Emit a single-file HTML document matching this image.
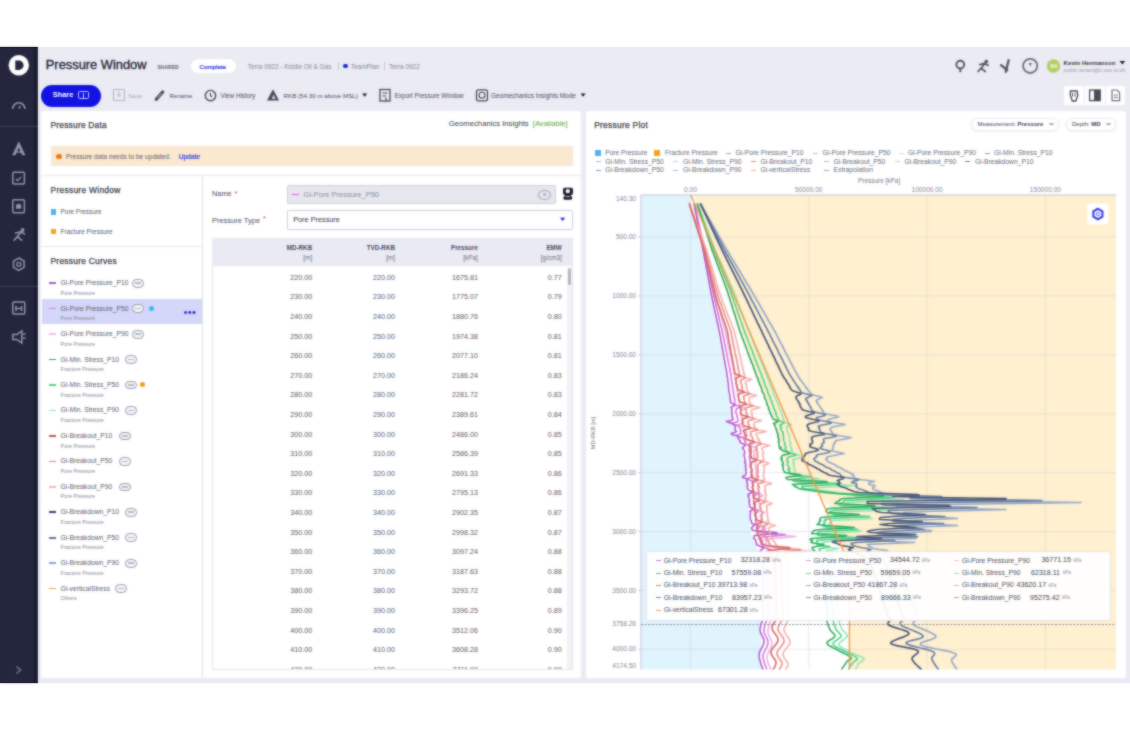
<!DOCTYPE html>
<html><head><meta charset="utf-8">
<style>
*{box-sizing:border-box;margin:0;padding:0}
html,body{width:1130px;height:730px;background:#fff;overflow:hidden;font-family:"Liberation Sans",sans-serif;color:#2a2d3e}
.a{position:absolute;white-space:nowrap}
svg{position:absolute;overflow:visible}
#root{position:absolute;left:0;top:0;width:1130px;height:730px;overflow:hidden}
</style></head><body><div id="root">

<div class="a" style="left:0.0px;top:47.0px;width:1130.0px;height:636.0px;background:#ebebf3;"></div>
<div class="a" style="left:0.0px;top:47.0px;width:37.5px;height:636.0px;background:#24263d;"></div>
<div class="a" style="left:34.2px;top:47.0px;width:3.3px;height:636.0px;background:#1b1c31;"></div>
<div class="a" style="left:37.5px;top:47.0px;width:1.5px;height:636.0px;background:#f7f7fb;"></div>
<div class="a" style="left:0.0px;top:126.3px;width:37.5px;height:1.0px;background:#3b3f57;"></div>
<div class="a" style="left:0.0px;top:286.0px;width:37.5px;height:1.0px;background:#3b3f57;"></div>
<svg style="left:0;top:0" width="40" height="700" viewBox="0 0 40 700">
<circle cx="18.8" cy="65.3" r="10.2" fill="#fff"/>
<path d="M15.3 60.6 h3.6 a4.7 4.7 0 0 1 0 9.4 h-3.6 z" fill="#24263d"/>
<path d="M12.6 109 a6.2 6.2 0 0 1 12.4 0" fill="none" stroke="#9296ad" stroke-width="1.6"/>
<path d="M18.8 108.6 l1.6 -2.4" stroke="#9296ad" stroke-width="1.4"/>
<path d="M18.8 141.3 l6.6 13.9 h-3.2 l-3.4 -7.6 l-3.4 7.6 h-3.2 z" fill="#9296ad"/><path d="M16.6 152 h4.4" stroke="#9296ad" stroke-width="1.3"/>
<rect x="12.8" y="172.3" width="11.6" height="11.6" rx="1.2" fill="none" stroke="#9296ad" stroke-width="1.5"/>
<path d="M15.8 178.8 l1.8 1.8 l3.6 -3.6" fill="none" stroke="#9296ad" stroke-width="1.3"/>
<rect x="12.8" y="199.8" width="11.6" height="13" rx="1.2" fill="none" stroke="#9296ad" stroke-width="1.5"/>
<path d="M16 206.3 a2.6 2.6 0 0 1 5.2 0 v2.5 h-5.2z" fill="#9296ad"/>
<circle cx="22.6" cy="230" r="1.9" fill="#9296ad"/><path d="M21 232 l-3.6 4.6 l-3.8 4.2 M17.4 236.6 l4.8 4 M15 233.2 l5.8 -1.4 l4.2 2.6" fill="none" stroke="#9296ad" stroke-width="1.6" stroke-linejoin="round"/>
<path d="M18.8 258 l5.3 3.1 v6.2 l-5.3 3.1 l-5.3 -3.1 v-6.2 z" fill="none" stroke="#9296ad" stroke-width="1.5"/>
<circle cx="18.8" cy="264.3" r="2" fill="none" stroke="#9296ad" stroke-width="1.3"/>
<rect x="12.8" y="302" width="12" height="12" rx="1.2" fill="none" stroke="#9296ad" stroke-width="1.5"/>
<path d="M16 306 v5 M21.6 306 v5 M16 308.5 h5.6" stroke="#9296ad" stroke-width="1.5"/>
<path d="M12.8 334.5 h4 l5 -3.5 v12 l-5 -3.5 h-4 z" fill="none" stroke="#9296ad" stroke-width="1.5"/>
<path d="M23 334 h2.5 M23 338 h2.5" stroke="#9296ad" stroke-width="1.3"/>
<path d="M16.5 666.5 l4 3.5 l-4 3.5" fill="none" stroke="#6f7390" stroke-width="1.6"/>
</svg>
<div class="a" style="left:45.8px;top:57.2px;font-size:12.85px;line-height:15.42px;color:#23263a;font-weight:normal;-webkit-text-stroke:0.35px #23263a">Pressure Window</div>
<div class="a" style="left:157.4px;top:64.5px;font-size:4.9px;line-height:5.88px;color:#55586a;font-weight:bold;letter-spacing:0.1px">SHARED</div>
<div class="a" style="left:190.6px;top:59.4px;width:45.4px;height:13.6px;background:#fff;border-radius:7px"></div>
<div class="a" style="left:199.5px;top:62.8px;font-size:6.2px;line-height:7.44px;color:#2430d8;font-weight:normal;-webkit-text-stroke:0.2px #2430d8">Complete</div>
<div class="a" style="left:247.7px;top:62.6px;font-size:6.45px;line-height:7.74px;color:#858896;font-weight:normal;">Terra 0922 - Kiddie Oil &amp; Gas</div>
<div class="a" style="left:338.3px;top:62.0px;width:0.6px;height:8.0px;background:#c4c6d2;"></div>
<div class="a" style="left:343.4px;top:63.6px;width:4.6px;height:4.6px;border-radius:50%;background:#1428d8"></div>
<div class="a" style="left:350.8px;top:62.6px;font-size:6.45px;line-height:7.74px;color:#858896;font-weight:normal;">TeamPlan</div>
<div class="a" style="left:384.0px;top:62.0px;width:0.6px;height:8.0px;background:#c4c6d2;"></div>
<div class="a" style="left:389.0px;top:62.6px;font-size:6.45px;line-height:7.74px;color:#858896;font-weight:normal;">Terra 0922</div>
<svg style="left:0;top:0" width="1130" height="120" viewBox="0 0 1130 120">
<circle cx="960.3" cy="64.6" r="3.9" fill="none" stroke="#545769" stroke-width="1.9"/>
<path d="M960.3 68.4 v3.8" stroke="#545769" stroke-width="2"/>
<circle cx="986.3" cy="61.6" r="1.9" fill="#545769"/>
<path d="M984.8 63.4 l-3.6 4.8 l-3.6 3.8 M981.2 68.2 l4.6 3.8 M979 64.8 l5.6 -1.4 l4.2 2.4" fill="none" stroke="#545769" stroke-width="1.7" stroke-linejoin="round"/>
<path d="M1001 65.2 l6.2 4.8 M1008.6 60.2 l-2.8 11.6" stroke="#545769" stroke-width="2.3" stroke-linecap="round"/>
<circle cx="1030.2" cy="65.9" r="7.1" fill="none" stroke="#6a6d80" stroke-width="1.8"/>
<path d="M1029 63 h2.6 l-1.3 3.4z" fill="#545769"/>
<circle cx="1053.5" cy="66" r="6.7" fill="#b3d062"/>
<path d="M1122.4 64.5 l-2.8 -3.6 h5.6z" fill="#1c1e2b"/>
</svg>
<div class="a" style="left:1050.2px;top:63.5px;font-size:4.5px;line-height:5.40px;color:#fff;font-weight:bold;width:7px;text-align:center">KH</div>
<div class="a" style="left:1063.6px;top:58.6px;font-size:6.1px;line-height:7.32px;color:#3a3440;font-weight:bold;">Kevin Hermanson</div>
<div class="a" style="left:1063.6px;top:67.2px;font-size:5.3px;line-height:6.36px;color:#9a9db0;font-weight:normal;">public-tenant@c-cee.io.ob</div>
<div class="a" style="left:40.6px;top:84.8px;width:60.5px;height:21.8px;background:#1212e2;border-radius:11px"></div>
<div class="a" style="left:52.8px;top:91.4px;font-size:7.4px;line-height:8.88px;color:#fff;font-weight:bold;">Share</div>
<div class="a" style="left:77.5px;top:91px;width:11.5px;height:8px;border:1.2px solid #c8ccff;border-radius:1.5px"></div>
<div class="a" style="left:82.6px;top:92.5px;width:1.2px;height:5px;background:#c8ccff"></div>
<svg style="left:0;top:0" width="1130" height="120" viewBox="0 0 1130 120">
<rect x="113.5" y="89.5" width="11" height="11" rx="1" fill="none" stroke="#b3b5c3" stroke-width="1.1"/>
<path d="M119 91.5 v5 l-2 -2 M119 96.5 l2 -2" fill="none" stroke="#b3b5c3" stroke-width="1"/>
<path d="M156.3 99.2 l6.4 -7.2" stroke="#474a5c" stroke-width="3.2" stroke-linecap="round"/><path d="M157.8 97.6 l3.6 -4" stroke="#ebebf3" stroke-width="0.7"/>
<circle cx="210.5" cy="95.6" r="5.2" fill="none" stroke="#474a5c" stroke-width="1.4"/>
<path d="M210.5 93 v2.8 l1.5 1.2" fill="none" stroke="#474a5c" stroke-width="1.2"/>
<path d="M273 89.2 l6 11.2 h-12 z" fill="#474a5c"/>
<path d="M273.4 94.8 l2.2 4 h-3.6 z" fill="#ebebf3"/>
<path d="M362.2 93.6 h5 l-2.5 3.2z" fill="#1c1e2b"/>
<rect x="380" y="89.5" width="10" height="11.5" fill="none" stroke="#474a5c" stroke-width="1.3"/>
<path d="M382.5 93 h5 M382.5 96 h3.5 M386 97.5 v4" stroke="#474a5c" stroke-width="1.2"/>
<rect x="476.5" y="89.8" width="11" height="11" rx="2" fill="none" stroke="#474a5c" stroke-width="1.3"/>
<circle cx="482" cy="95.3" r="3" fill="none" stroke="#474a5c" stroke-width="1.1"/>
<path d="M580.6 93.6 h5 l-2.5 3.2z" fill="#1c1e2b"/>
</svg>
<div class="a" style="left:128.2px;top:92.1px;font-size:6.2px;line-height:7.44px;color:#a7a9b7;font-weight:normal;">Save</div>
<div class="a" style="left:169.4px;top:92.1px;font-size:6.1px;line-height:7.32px;color:#474a5c;font-weight:normal;">Rename</div>
<div class="a" style="left:220.6px;top:92.0px;font-size:6.3px;line-height:7.56px;color:#474a5c;font-weight:normal;">View History</div>
<div class="a" style="left:283.5px;top:92.1px;font-size:6.23px;line-height:7.48px;color:#474a5c;font-weight:normal;">RKB (54.30 m above MSL)</div>
<div class="a" style="left:394.7px;top:92.0px;font-size:6.27px;line-height:7.52px;color:#474a5c;font-weight:normal;">Export Pressure Window</div>
<div class="a" style="left:491.0px;top:91.9px;font-size:6.45px;line-height:7.74px;color:#474a5c;font-weight:normal;">Geomechanics Insights Mode</div>
<div class="a" style="left:1064.4px;top:86.2px;width:60.6px;height:18.6px;background:#fff;border-radius:2px"></div>
<div class="a" style="left:1084.4px;top:86.2px;width:0.8px;height:18.6px;background:#ebebf3;"></div>
<div class="a" style="left:1105.2px;top:86.2px;width:0.8px;height:18.6px;background:#ebebf3;"></div>
<svg style="left:0;top:0" width="1130" height="120" viewBox="0 0 1130 120">
<path d="M1070.5 91 h6.5 l0.8 4 l-2 6 h-3.5 l-2 -6 z" fill="none" stroke="#474a5c" stroke-width="1.3"/>
<path d="M1072.5 93 v3.5 M1075 93 v3.5" stroke="#474a5c" stroke-width="0.9"/>
<rect x="1089.6" y="90" width="10.6" height="10.6" fill="none" stroke="#474a5c" stroke-width="1.3"/>
<rect x="1094" y="90" width="6.2" height="10.6" fill="#474a5c"/>
<path d="M1112 90 h5 l2.6 2.6 v8 h-7.6 z" fill="none" stroke="#6b6e80" stroke-width="1.2"/>
<path d="M1113.8 95 h4 M1113.8 97.4 h4" stroke="#6b6e80" stroke-width="0.9"/>
</svg>
<div class="a" style="left:41.0px;top:111.0px;width:539.6px;height:567.0px;background:#fff;border-radius:2px"></div>
<div class="a" style="left:50.5px;top:119.5px;font-size:8.4px;line-height:10.08px;color:#3a3c4c;font-weight:normal;-webkit-text-stroke:0.25px #3a3c4c;letter-spacing:0.22px">Pressure Data</div>
<div class="a" style="left:448.8px;top:119.3px;font-size:7.7px;line-height:9.24px;color:#35384a;font-weight:normal;">Geomechanics Insights</div>
<div class="a" style="left:532.8px;top:119.3px;font-size:7.6px;line-height:9.12px;color:#55a83a;font-weight:normal;">[Available]</div>
<div class="a" style="left:50.7px;top:146.2px;width:522.2px;height:20.1px;background:#fbe8d0;border-radius:1.5px"></div>
<div class="a" style="left:56.3px;top:153.8px;width:5.6px;height:5.6px;border-radius:50%;background:#e97a12"></div>
<div class="a" style="left:65.9px;top:152.6px;font-size:6.6px;line-height:7.92px;color:#5a5c68;font-weight:normal;">Pressure data needs to be updated.</div>
<div class="a" style="left:178.7px;top:152.6px;font-size:6.6px;line-height:7.92px;color:#2330d8;font-weight:normal;-webkit-text-stroke:0.15px #2330d8">Update</div>
<div class="a" style="left:41.0px;top:174.8px;width:539.6px;height:1.0px;background:#ebebf3;"></div>
<div class="a" style="left:202.4px;top:175.8px;width:1.0px;height:502.2px;background:#e4e5ee;"></div>
<div class="a" style="left:50.5px;top:184.8px;font-size:8.4px;line-height:10.08px;color:#3a3c4c;font-weight:normal;-webkit-text-stroke:0.25px #3a3c4c;letter-spacing:0.30px">Pressure Window</div>
<div class="a" style="left:50.6px;top:209.3px;width:5.6px;height:5.6px;background:#4bb3f0;"></div>
<div class="a" style="left:60.6px;top:208.3px;font-size:6.4px;line-height:7.68px;color:#55586a;font-weight:normal;">Pore Pressure</div>
<div class="a" style="left:50.6px;top:228.6px;width:5.6px;height:5.6px;background:#f5a31a;"></div>
<div class="a" style="left:60.6px;top:227.5px;font-size:6.5px;line-height:7.80px;color:#55586a;font-weight:normal;">Fracture Pressure</div>
<div class="a" style="left:41.0px;top:246.2px;width:161.4px;height:1.0px;background:#ebebf3;"></div>
<div class="a" style="left:50.5px;top:255.6px;font-size:8.4px;line-height:10.08px;color:#3a3c4c;font-weight:normal;-webkit-text-stroke:0.25px #3a3c4c;letter-spacing:0.27px">Pressure Curves</div>
<div class="a" style="left:49.3px;top:282.4px;width:6.7px;height:1.7px;background:#a55cc4;"></div>
<div class="a" style="left:60.6px;top:279.1px;font-size:6.75px;line-height:8.10px;color:#5a5d6a;font-weight:normal;">Gi-Pore Pressure_P10</div>
<div class="a" style="left:60.6px;top:289.8px;font-size:5.4px;line-height:6.48px;color:#858897;font-weight:normal;">Pore Pressure</div>
<div class="a" style="left:132.0px;top:278.9px;width:12px;height:8.8px;border-radius:4.4px;border:0.9px solid #9a9dad;background:#f3f3f7"></div>
<div class="a" style="left:135.0px;top:282.4px;width:6px;height:1.6px;background:#b9bbc8"></div>
<div class="a" style="left:41.5px;top:299.3px;width:160.9px;height:24.6px;background:#d4d7f9;"></div>
<div class="a" style="left:184px;top:311.2px;width:11.5px;height:3px;background:radial-gradient(circle at 1.5px 1.5px,#2b2fd8 1.4px,transparent 1.5px) 0 0/4.2px 3px repeat-x"></div>
<div class="a" style="left:49.3px;top:307.8px;width:6.7px;height:1.7px;background:#dd86dc;"></div>
<div class="a" style="left:60.6px;top:304.6px;font-size:6.75px;line-height:8.10px;color:#5a5d6a;font-weight:normal;">Gi-Pore Pressure_P50</div>
<div class="a" style="left:60.6px;top:315.2px;font-size:5.4px;line-height:6.48px;color:#858897;font-weight:normal;">Pore Pressure</div>
<div class="a" style="left:132.0px;top:304.3px;width:12px;height:8.8px;border-radius:4.4px;border:0.9px solid #9a9dad;background:#f3f3f7"></div>
<div class="a" style="left:135.0px;top:307.8px;width:6px;height:1.6px;background:#b9bbc8"></div>
<div class="a" style="left:148.6px;top:306.0px;width:5px;height:5px;border-radius:50%;background:#3db7f2"></div>
<div class="a" style="left:49.3px;top:333.3px;width:6.7px;height:1.7px;background:#f2bdeb;"></div>
<div class="a" style="left:60.6px;top:330.0px;font-size:6.75px;line-height:8.10px;color:#5a5d6a;font-weight:normal;">Gi-Pore Pressure_P90</div>
<div class="a" style="left:60.6px;top:340.7px;font-size:5.4px;line-height:6.48px;color:#858897;font-weight:normal;">Pore Pressure</div>
<div class="a" style="left:132.0px;top:329.8px;width:12px;height:8.8px;border-radius:4.4px;border:0.9px solid #9a9dad;background:#f3f3f7"></div>
<div class="a" style="left:135.0px;top:333.3px;width:6px;height:1.6px;background:#b9bbc8"></div>
<div class="a" style="left:49.3px;top:358.7px;width:6.7px;height:1.7px;background:#2da65c;"></div>
<div class="a" style="left:60.6px;top:355.5px;font-size:6.75px;line-height:8.10px;color:#5a5d6a;font-weight:normal;">Gi-Min. Stress_P10</div>
<div class="a" style="left:60.6px;top:366.1px;font-size:5.4px;line-height:6.48px;color:#858897;font-weight:normal;">Fracture Pressure</div>
<div class="a" style="left:124.5px;top:355.2px;width:12px;height:8.8px;border-radius:4.4px;border:0.9px solid #9a9dad;background:#f3f3f7"></div>
<div class="a" style="left:127.5px;top:358.7px;width:6px;height:1.6px;background:#b9bbc8"></div>
<div class="a" style="left:49.3px;top:384.2px;width:6.7px;height:1.7px;background:#4ed482;"></div>
<div class="a" style="left:60.6px;top:380.9px;font-size:6.75px;line-height:8.10px;color:#5a5d6a;font-weight:normal;">Gi-Min. Stress_P50</div>
<div class="a" style="left:60.6px;top:391.6px;font-size:5.4px;line-height:6.48px;color:#858897;font-weight:normal;">Fracture Pressure</div>
<div class="a" style="left:124.5px;top:380.7px;width:12px;height:8.8px;border-radius:4.4px;border:0.9px solid #9a9dad;background:#f3f3f7"></div>
<div class="a" style="left:127.5px;top:384.2px;width:6px;height:1.6px;background:#b9bbc8"></div>
<div class="a" style="left:140.1px;top:382.4px;width:5px;height:5px;border-radius:50%;background:#f39a12"></div>
<div class="a" style="left:49.3px;top:409.6px;width:6.7px;height:1.7px;background:#8fe6b0;"></div>
<div class="a" style="left:60.6px;top:406.4px;font-size:6.75px;line-height:8.10px;color:#5a5d6a;font-weight:normal;">Gi-Min. Stress_P90</div>
<div class="a" style="left:60.6px;top:417.0px;font-size:5.4px;line-height:6.48px;color:#858897;font-weight:normal;">Fracture Pressure</div>
<div class="a" style="left:124.5px;top:406.1px;width:12px;height:8.8px;border-radius:4.4px;border:0.9px solid #9a9dad;background:#f3f3f7"></div>
<div class="a" style="left:127.5px;top:409.6px;width:6px;height:1.6px;background:#b9bbc8"></div>
<div class="a" style="left:49.3px;top:435.1px;width:6.7px;height:1.7px;background:#c4504e;"></div>
<div class="a" style="left:60.6px;top:431.8px;font-size:6.75px;line-height:8.10px;color:#5a5d6a;font-weight:normal;">Gi-Breakout_P10</div>
<div class="a" style="left:60.6px;top:442.5px;font-size:5.4px;line-height:6.48px;color:#858897;font-weight:normal;">Pore Pressure</div>
<div class="a" style="left:119.0px;top:431.6px;width:12px;height:8.8px;border-radius:4.4px;border:0.9px solid #9a9dad;background:#f3f3f7"></div>
<div class="a" style="left:122.0px;top:435.1px;width:6px;height:1.6px;background:#b9bbc8"></div>
<div class="a" style="left:49.3px;top:460.6px;width:6.7px;height:1.7px;background:#e77d7a;"></div>
<div class="a" style="left:60.6px;top:457.3px;font-size:6.75px;line-height:8.10px;color:#5a5d6a;font-weight:normal;">Gi-Breakout_P50</div>
<div class="a" style="left:60.6px;top:467.9px;font-size:5.4px;line-height:6.48px;color:#858897;font-weight:normal;">Pore Pressure</div>
<div class="a" style="left:119.0px;top:457.1px;width:12px;height:8.8px;border-radius:4.4px;border:0.9px solid #9a9dad;background:#f3f3f7"></div>
<div class="a" style="left:122.0px;top:460.6px;width:6px;height:1.6px;background:#b9bbc8"></div>
<div class="a" style="left:49.3px;top:486.0px;width:6.7px;height:1.7px;background:#f4b8b4;"></div>
<div class="a" style="left:60.6px;top:482.7px;font-size:6.75px;line-height:8.10px;color:#5a5d6a;font-weight:normal;">Gi-Breakout_P90</div>
<div class="a" style="left:60.6px;top:493.4px;font-size:5.4px;line-height:6.48px;color:#858897;font-weight:normal;">Pore Pressure</div>
<div class="a" style="left:119.0px;top:482.5px;width:12px;height:8.8px;border-radius:4.4px;border:0.9px solid #9a9dad;background:#f3f3f7"></div>
<div class="a" style="left:122.0px;top:486.0px;width:6px;height:1.6px;background:#b9bbc8"></div>
<div class="a" style="left:49.3px;top:511.4px;width:6.7px;height:1.7px;background:#2e416e;"></div>
<div class="a" style="left:60.6px;top:508.2px;font-size:6.75px;line-height:8.10px;color:#5a5d6a;font-weight:normal;">Gi-Breakdown_P10</div>
<div class="a" style="left:60.6px;top:518.8px;font-size:5.4px;line-height:6.48px;color:#858897;font-weight:normal;">Fracture Pressure</div>
<div class="a" style="left:124.5px;top:507.9px;width:12px;height:8.8px;border-radius:4.4px;border:0.9px solid #9a9dad;background:#f3f3f7"></div>
<div class="a" style="left:127.5px;top:511.4px;width:6px;height:1.6px;background:#b9bbc8"></div>
<div class="a" style="left:49.3px;top:536.9px;width:6.7px;height:1.7px;background:#5576a8;"></div>
<div class="a" style="left:60.6px;top:533.7px;font-size:6.75px;line-height:8.10px;color:#5a5d6a;font-weight:normal;">Gi-Breakdown_P50</div>
<div class="a" style="left:60.6px;top:544.3px;font-size:5.4px;line-height:6.48px;color:#858897;font-weight:normal;">Fracture Pressure</div>
<div class="a" style="left:124.5px;top:533.4px;width:12px;height:8.8px;border-radius:4.4px;border:0.9px solid #9a9dad;background:#f3f3f7"></div>
<div class="a" style="left:127.5px;top:536.9px;width:6px;height:1.6px;background:#b9bbc8"></div>
<div class="a" style="left:49.3px;top:562.4px;width:6.7px;height:1.7px;background:#87a2cc;"></div>
<div class="a" style="left:60.6px;top:559.1px;font-size:6.75px;line-height:8.10px;color:#5a5d6a;font-weight:normal;">Gi-Breakdown_P90</div>
<div class="a" style="left:60.6px;top:569.7px;font-size:5.4px;line-height:6.48px;color:#858897;font-weight:normal;">Fracture Pressure</div>
<div class="a" style="left:124.5px;top:558.9px;width:12px;height:8.8px;border-radius:4.4px;border:0.9px solid #9a9dad;background:#f3f3f7"></div>
<div class="a" style="left:127.5px;top:562.4px;width:6px;height:1.6px;background:#b9bbc8"></div>
<div class="a" style="left:49.3px;top:587.8px;width:6.7px;height:1.7px;background:#f29a45;"></div>
<div class="a" style="left:60.6px;top:584.5px;font-size:6.75px;line-height:8.10px;color:#5a5d6a;font-weight:normal;">Gi-verticalStress</div>
<div class="a" style="left:60.6px;top:595.2px;font-size:5.4px;line-height:6.48px;color:#858897;font-weight:normal;">Others</div>
<div class="a" style="left:115.3px;top:584.3px;width:12px;height:8.8px;border-radius:4.4px;border:0.9px solid #9a9dad;background:#f3f3f7"></div>
<div class="a" style="left:118.3px;top:587.8px;width:6px;height:1.6px;background:#b9bbc8"></div>
<div class="a" style="left:211.9px;top:190.1px;font-size:7.45px;line-height:8.94px;color:#4a4d5e;font-weight:normal;">Name</div>
<div class="a" style="left:234.5px;top:189.7px;font-size:7px;line-height:8.40px;color:#e0302a;font-weight:normal;">*</div>
<div class="a" style="left:211.9px;top:215.6px;font-size:7.5px;line-height:9.00px;color:#4a4d5e;font-weight:normal;">Pressure Type</div>
<div class="a" style="left:263.0px;top:215.2px;font-size:7px;line-height:8.40px;color:#e0302a;font-weight:normal;">*</div>
<div class="a" style="left:287.3px;top:184.7px;width:268.9px;height:19.6px;background:#e6e7ee;border:0.8px solid #d0d2dd;border-radius:1.5px"></div>
<div class="a" style="left:292.4px;top:193.8px;width:6.6px;height:1.1px;background:#dd5fd0;"></div>
<div class="a" style="left:303.6px;top:190.0px;font-size:7.5px;line-height:9.00px;color:#8a8c9c;font-weight:normal;">Gi-Pore Pressure_P50</div>
<div class="a" style="left:538.2px;top:189.8px;width:12.4px;height:10px;border-radius:50%;border:1.1px solid #a5a8b6"></div>
<div class="a" style="left:542.6px;top:193.3px;width:3.6px;height:3px;border-radius:50%;background:#b0b2c0"></div>
<div class="a" style="left:287.3px;top:209.5px;width:285.5px;height:20.0px;background:#fff;border:0.9px solid #cfd1dc;border-radius:1.5px"></div>
<div class="a" style="left:293.2px;top:216.1px;font-size:7.3px;line-height:8.76px;color:#2f3243;font-weight:normal;">Pore Pressure</div>
<svg style="left:0;top:0" width="600" height="240" viewBox="0 0 600 240"><path d="M560 217.8 h5.2 l-2.6 3.3z" fill="#1a2bd0"/><path d="M563 189.5 q0 -1.8 1.8 -1.8 h6.4 q1.8 0 1.8 1.8 v3.6 q0 1.4 -1.4 1.8 l-1 0.4 l1.6 2 q0.6 1.6 -1 2.5 h-6.6 q-1.8 -0.4 -1.2 -2.2 l1.6 -2.3 l-0.6 -0.4 q-1.4 -0.6 -1.4 -1.8z" fill="#1e2030"/><circle cx="567.8" cy="191.2" r="2.1" fill="#fff"/><path d="M565.5 196.5 h4.5" stroke="#fff" stroke-width="0.7"/></svg>
<div class="a" style="left:212.4px;top:238.2px;width:360.4px;height:431.6px;background:#fff;border:0.9px solid #e6e7ee;border-top:none"></div>
<div class="a" style="left:212.4px;top:238.2px;width:360.4px;height:28.3px;background:#e9eaf3;"></div>
<div class="a" style="right:817.8px;top:243.7px;font-size:6.3px;line-height:7.56px;color:#474a5a;font-weight:bold;text-align:right;">MD-RKB</div>
<div class="a" style="right:817.8px;top:253.8px;font-size:6.4px;line-height:7.68px;color:#6a6d7c;font-weight:normal;text-align:right;">[m]</div>
<div class="a" style="right:735.0px;top:243.7px;font-size:6.3px;line-height:7.56px;color:#474a5a;font-weight:bold;text-align:right;">TVD-RKB</div>
<div class="a" style="right:735.0px;top:253.8px;font-size:6.4px;line-height:7.68px;color:#6a6d7c;font-weight:normal;text-align:right;">[m]</div>
<div class="a" style="right:652.1px;top:243.7px;font-size:6.3px;line-height:7.56px;color:#474a5a;font-weight:bold;text-align:right;">Pressure</div>
<div class="a" style="right:652.1px;top:253.8px;font-size:6.4px;line-height:7.68px;color:#6a6d7c;font-weight:normal;text-align:right;">[kPa]</div>
<div class="a" style="right:568.2px;top:243.7px;font-size:6.3px;line-height:7.56px;color:#474a5a;font-weight:bold;text-align:right;">EMW</div>
<div class="a" style="right:568.2px;top:253.8px;font-size:6.4px;line-height:7.68px;color:#6a6d7c;font-weight:normal;text-align:right;">[g/cm3]</div>
<div class="a" style="left:213px;top:267px;width:359px;height:402.4px;overflow:hidden">
<div class="a" style="right:259.8px;top:6.7px;font-size:7.2px;line-height:8.6px;color:#575a6a;text-align:right">220.00</div>
<div class="a" style="right:177.0px;top:6.7px;font-size:7.2px;line-height:8.6px;color:#575a6a;text-align:right">220.00</div>
<div class="a" style="right:94.1px;top:6.7px;font-size:7.2px;line-height:8.6px;color:#575a6a;text-align:right">1675.81</div>
<div class="a" style="right:10.2px;top:6.7px;font-size:7.2px;line-height:8.6px;color:#575a6a;text-align:right">0.77</div>
<div class="a" style="right:259.8px;top:26.3px;font-size:7.2px;line-height:8.6px;color:#575a6a;text-align:right">230.00</div>
<div class="a" style="right:177.0px;top:26.3px;font-size:7.2px;line-height:8.6px;color:#575a6a;text-align:right">230.00</div>
<div class="a" style="right:94.1px;top:26.3px;font-size:7.2px;line-height:8.6px;color:#575a6a;text-align:right">1775.07</div>
<div class="a" style="right:10.2px;top:26.3px;font-size:7.2px;line-height:8.6px;color:#575a6a;text-align:right">0.79</div>
<div class="a" style="right:259.8px;top:45.9px;font-size:7.2px;line-height:8.6px;color:#575a6a;text-align:right">240.00</div>
<div class="a" style="right:177.0px;top:45.9px;font-size:7.2px;line-height:8.6px;color:#575a6a;text-align:right">240.00</div>
<div class="a" style="right:94.1px;top:45.9px;font-size:7.2px;line-height:8.6px;color:#575a6a;text-align:right">1880.76</div>
<div class="a" style="right:10.2px;top:45.9px;font-size:7.2px;line-height:8.6px;color:#575a6a;text-align:right">0.80</div>
<div class="a" style="right:259.8px;top:65.5px;font-size:7.2px;line-height:8.6px;color:#575a6a;text-align:right">250.00</div>
<div class="a" style="right:177.0px;top:65.5px;font-size:7.2px;line-height:8.6px;color:#575a6a;text-align:right">250.00</div>
<div class="a" style="right:94.1px;top:65.5px;font-size:7.2px;line-height:8.6px;color:#575a6a;text-align:right">1974.38</div>
<div class="a" style="right:10.2px;top:65.5px;font-size:7.2px;line-height:8.6px;color:#575a6a;text-align:right">0.81</div>
<div class="a" style="right:259.8px;top:85.1px;font-size:7.2px;line-height:8.6px;color:#575a6a;text-align:right">260.00</div>
<div class="a" style="right:177.0px;top:85.1px;font-size:7.2px;line-height:8.6px;color:#575a6a;text-align:right">260.00</div>
<div class="a" style="right:94.1px;top:85.1px;font-size:7.2px;line-height:8.6px;color:#575a6a;text-align:right">2077.10</div>
<div class="a" style="right:10.2px;top:85.1px;font-size:7.2px;line-height:8.6px;color:#575a6a;text-align:right">0.81</div>
<div class="a" style="right:259.8px;top:104.7px;font-size:7.2px;line-height:8.6px;color:#575a6a;text-align:right">270.00</div>
<div class="a" style="right:177.0px;top:104.7px;font-size:7.2px;line-height:8.6px;color:#575a6a;text-align:right">270.00</div>
<div class="a" style="right:94.1px;top:104.7px;font-size:7.2px;line-height:8.6px;color:#575a6a;text-align:right">2186.24</div>
<div class="a" style="right:10.2px;top:104.7px;font-size:7.2px;line-height:8.6px;color:#575a6a;text-align:right">0.83</div>
<div class="a" style="right:259.8px;top:124.3px;font-size:7.2px;line-height:8.6px;color:#575a6a;text-align:right">280.00</div>
<div class="a" style="right:177.0px;top:124.3px;font-size:7.2px;line-height:8.6px;color:#575a6a;text-align:right">280.00</div>
<div class="a" style="right:94.1px;top:124.3px;font-size:7.2px;line-height:8.6px;color:#575a6a;text-align:right">2281.72</div>
<div class="a" style="right:10.2px;top:124.3px;font-size:7.2px;line-height:8.6px;color:#575a6a;text-align:right">0.83</div>
<div class="a" style="right:259.8px;top:143.9px;font-size:7.2px;line-height:8.6px;color:#575a6a;text-align:right">290.00</div>
<div class="a" style="right:177.0px;top:143.9px;font-size:7.2px;line-height:8.6px;color:#575a6a;text-align:right">290.00</div>
<div class="a" style="right:94.1px;top:143.9px;font-size:7.2px;line-height:8.6px;color:#575a6a;text-align:right">2389.61</div>
<div class="a" style="right:10.2px;top:143.9px;font-size:7.2px;line-height:8.6px;color:#575a6a;text-align:right">0.84</div>
<div class="a" style="right:259.8px;top:163.5px;font-size:7.2px;line-height:8.6px;color:#575a6a;text-align:right">300.00</div>
<div class="a" style="right:177.0px;top:163.5px;font-size:7.2px;line-height:8.6px;color:#575a6a;text-align:right">300.00</div>
<div class="a" style="right:94.1px;top:163.5px;font-size:7.2px;line-height:8.6px;color:#575a6a;text-align:right">2486.00</div>
<div class="a" style="right:10.2px;top:163.5px;font-size:7.2px;line-height:8.6px;color:#575a6a;text-align:right">0.85</div>
<div class="a" style="right:259.8px;top:183.1px;font-size:7.2px;line-height:8.6px;color:#575a6a;text-align:right">310.00</div>
<div class="a" style="right:177.0px;top:183.1px;font-size:7.2px;line-height:8.6px;color:#575a6a;text-align:right">310.00</div>
<div class="a" style="right:94.1px;top:183.1px;font-size:7.2px;line-height:8.6px;color:#575a6a;text-align:right">2586.39</div>
<div class="a" style="right:10.2px;top:183.1px;font-size:7.2px;line-height:8.6px;color:#575a6a;text-align:right">0.85</div>
<div class="a" style="right:259.8px;top:202.7px;font-size:7.2px;line-height:8.6px;color:#575a6a;text-align:right">320.00</div>
<div class="a" style="right:177.0px;top:202.7px;font-size:7.2px;line-height:8.6px;color:#575a6a;text-align:right">320.00</div>
<div class="a" style="right:94.1px;top:202.7px;font-size:7.2px;line-height:8.6px;color:#575a6a;text-align:right">2691.33</div>
<div class="a" style="right:10.2px;top:202.7px;font-size:7.2px;line-height:8.6px;color:#575a6a;text-align:right">0.86</div>
<div class="a" style="right:259.8px;top:222.3px;font-size:7.2px;line-height:8.6px;color:#575a6a;text-align:right">330.00</div>
<div class="a" style="right:177.0px;top:222.3px;font-size:7.2px;line-height:8.6px;color:#575a6a;text-align:right">330.00</div>
<div class="a" style="right:94.1px;top:222.3px;font-size:7.2px;line-height:8.6px;color:#575a6a;text-align:right">2795.13</div>
<div class="a" style="right:10.2px;top:222.3px;font-size:7.2px;line-height:8.6px;color:#575a6a;text-align:right">0.86</div>
<div class="a" style="right:259.8px;top:241.9px;font-size:7.2px;line-height:8.6px;color:#575a6a;text-align:right">340.00</div>
<div class="a" style="right:177.0px;top:241.9px;font-size:7.2px;line-height:8.6px;color:#575a6a;text-align:right">340.00</div>
<div class="a" style="right:94.1px;top:241.9px;font-size:7.2px;line-height:8.6px;color:#575a6a;text-align:right">2902.35</div>
<div class="a" style="right:10.2px;top:241.9px;font-size:7.2px;line-height:8.6px;color:#575a6a;text-align:right">0.87</div>
<div class="a" style="right:259.8px;top:261.5px;font-size:7.2px;line-height:8.6px;color:#575a6a;text-align:right">350.00</div>
<div class="a" style="right:177.0px;top:261.5px;font-size:7.2px;line-height:8.6px;color:#575a6a;text-align:right">350.00</div>
<div class="a" style="right:94.1px;top:261.5px;font-size:7.2px;line-height:8.6px;color:#575a6a;text-align:right">2998.32</div>
<div class="a" style="right:10.2px;top:261.5px;font-size:7.2px;line-height:8.6px;color:#575a6a;text-align:right">0.87</div>
<div class="a" style="right:259.8px;top:281.1px;font-size:7.2px;line-height:8.6px;color:#575a6a;text-align:right">360.00</div>
<div class="a" style="right:177.0px;top:281.1px;font-size:7.2px;line-height:8.6px;color:#575a6a;text-align:right">360.00</div>
<div class="a" style="right:94.1px;top:281.1px;font-size:7.2px;line-height:8.6px;color:#575a6a;text-align:right">3097.24</div>
<div class="a" style="right:10.2px;top:281.1px;font-size:7.2px;line-height:8.6px;color:#575a6a;text-align:right">0.88</div>
<div class="a" style="right:259.8px;top:300.7px;font-size:7.2px;line-height:8.6px;color:#575a6a;text-align:right">370.00</div>
<div class="a" style="right:177.0px;top:300.7px;font-size:7.2px;line-height:8.6px;color:#575a6a;text-align:right">370.00</div>
<div class="a" style="right:94.1px;top:300.7px;font-size:7.2px;line-height:8.6px;color:#575a6a;text-align:right">3187.63</div>
<div class="a" style="right:10.2px;top:300.7px;font-size:7.2px;line-height:8.6px;color:#575a6a;text-align:right">0.88</div>
<div class="a" style="right:259.8px;top:320.3px;font-size:7.2px;line-height:8.6px;color:#575a6a;text-align:right">380.00</div>
<div class="a" style="right:177.0px;top:320.3px;font-size:7.2px;line-height:8.6px;color:#575a6a;text-align:right">380.00</div>
<div class="a" style="right:94.1px;top:320.3px;font-size:7.2px;line-height:8.6px;color:#575a6a;text-align:right">3293.72</div>
<div class="a" style="right:10.2px;top:320.3px;font-size:7.2px;line-height:8.6px;color:#575a6a;text-align:right">0.88</div>
<div class="a" style="right:259.8px;top:339.9px;font-size:7.2px;line-height:8.6px;color:#575a6a;text-align:right">390.00</div>
<div class="a" style="right:177.0px;top:339.9px;font-size:7.2px;line-height:8.6px;color:#575a6a;text-align:right">390.00</div>
<div class="a" style="right:94.1px;top:339.9px;font-size:7.2px;line-height:8.6px;color:#575a6a;text-align:right">3396.25</div>
<div class="a" style="right:10.2px;top:339.9px;font-size:7.2px;line-height:8.6px;color:#575a6a;text-align:right">0.89</div>
<div class="a" style="right:259.8px;top:359.5px;font-size:7.2px;line-height:8.6px;color:#575a6a;text-align:right">400.00</div>
<div class="a" style="right:177.0px;top:359.5px;font-size:7.2px;line-height:8.6px;color:#575a6a;text-align:right">400.00</div>
<div class="a" style="right:94.1px;top:359.5px;font-size:7.2px;line-height:8.6px;color:#575a6a;text-align:right">3512.06</div>
<div class="a" style="right:10.2px;top:359.5px;font-size:7.2px;line-height:8.6px;color:#575a6a;text-align:right">0.90</div>
<div class="a" style="right:259.8px;top:379.1px;font-size:7.2px;line-height:8.6px;color:#575a6a;text-align:right">410.00</div>
<div class="a" style="right:177.0px;top:379.1px;font-size:7.2px;line-height:8.6px;color:#575a6a;text-align:right">410.00</div>
<div class="a" style="right:94.1px;top:379.1px;font-size:7.2px;line-height:8.6px;color:#575a6a;text-align:right">3608.28</div>
<div class="a" style="right:10.2px;top:379.1px;font-size:7.2px;line-height:8.6px;color:#575a6a;text-align:right">0.90</div>
<div class="a" style="right:259.8px;top:398.7px;font-size:7.2px;line-height:8.6px;color:#575a6a;text-align:right">420.00</div>
<div class="a" style="right:177.0px;top:398.7px;font-size:7.2px;line-height:8.6px;color:#575a6a;text-align:right">420.00</div>
<div class="a" style="right:94.1px;top:398.7px;font-size:7.2px;line-height:8.6px;color:#575a6a;text-align:right">3711.90</div>
<div class="a" style="right:10.2px;top:398.7px;font-size:7.2px;line-height:8.6px;color:#575a6a;text-align:right">0.90</div>
</div>
<div class="a" style="left:566.8px;top:267.5px;width:5.2px;height:401.9px;background:#f2f2f7;"></div>
<div class="a" style="left:567.8px;top:268.2px;width:3.0px;height:17.3px;background:#b5b7c4;border-radius:1.5px"></div>
<div class="a" style="left:586.2px;top:111.0px;width:539.4px;height:567.0px;background:#fff;border-radius:2px"></div>
<div class="a" style="left:594.2px;top:119.6px;font-size:8.4px;line-height:10.08px;color:#3a3c4c;font-weight:normal;-webkit-text-stroke:0.25px #3a3c4c;letter-spacing:0.28px">Pressure Plot</div>
<div class="a" style="left:971.4px;top:118.0px;width:88.0px;height:12.8px;background:#fff;border:0.6px solid #f1f1f6;border-radius:6.4px;box-shadow:0 0.6px 2px rgba(40,40,80,0.10)"></div>
<div class="a" style="left:977.5px;top:120.8px;font-size:6.0px;line-height:7.20px;color:#3d4258;font-weight:normal;">Measurement: <b>Pressure</b></div>
<div class="a" style="left:1066.0px;top:118.0px;width:50.4px;height:12.8px;background:#fff;border:0.6px solid #f1f1f6;border-radius:6.4px;box-shadow:0 0.6px 2px rgba(40,40,80,0.10)"></div>
<div class="a" style="left:1072.0px;top:120.8px;font-size:6.0px;line-height:7.20px;color:#3a3d50;font-weight:normal;">Depth: <b>MD</b></div>
<svg style="left:0;top:0" width="1130" height="140" viewBox="0 0 1130 140"><path d="M1049.5 123 l2 2 l2 -2" fill="none" stroke="#3a3d50" stroke-width="0.9"/><path d="M1106.5 123 l2 2 l2 -2" fill="none" stroke="#3a3d50" stroke-width="0.9"/></svg>
<div class="a" style="left:594.6px;top:150.2px;width:6.0px;height:6.0px;background:#4bb3f0;"></div>
<div class="a" style="left:605.3px;top:149.1px;font-size:6.6px;line-height:7.92px;color:#676a7b;font-weight:normal;">Pore Pressure</div>
<div class="a" style="left:654.0px;top:150.2px;width:6.0px;height:6.0px;background:#f5a31a;"></div>
<div class="a" style="left:665.0px;top:149.1px;font-size:6.6px;line-height:7.92px;color:#676a7b;font-weight:normal;">Fracture Pressure</div>
<div class="a" style="left:726.0px;top:152.6px;width:5.0px;height:1.1px;background:#c58ad8;"></div>
<div class="a" style="left:735.5px;top:149.0px;font-size:6.75px;line-height:8.10px;color:#676a7b;font-weight:normal;">Gi-Pore Pressure_P10</div>
<div class="a" style="left:813.0px;top:152.6px;width:5.0px;height:1.1px;background:#e7a6e5;"></div>
<div class="a" style="left:822.5px;top:149.0px;font-size:6.75px;line-height:8.10px;color:#676a7b;font-weight:normal;">Gi-Pore Pressure_P50</div>
<div class="a" style="left:898.5px;top:152.6px;width:5.0px;height:1.1px;background:#f4c9ef;"></div>
<div class="a" style="left:908.0px;top:149.0px;font-size:6.75px;line-height:8.10px;color:#676a7b;font-weight:normal;">Gi-Pore Pressure_P90</div>
<div class="a" style="left:984.6px;top:152.6px;width:5.0px;height:1.1px;background:#5bbf85;"></div>
<div class="a" style="left:994.1px;top:149.0px;font-size:6.75px;line-height:8.10px;color:#676a7b;font-weight:normal;">Gi-Min. Stress_P10</div>
<div class="a" style="left:595.8px;top:161.0px;width:5.0px;height:1.1px;background:#79dba3;"></div>
<div class="a" style="left:605.3px;top:157.5px;font-size:6.75px;line-height:8.10px;color:#676a7b;font-weight:normal;">Gi-Min. Stress_P50</div>
<div class="a" style="left:673.4px;top:161.0px;width:5.0px;height:1.1px;background:#addfc2;"></div>
<div class="a" style="left:682.9px;top:157.5px;font-size:6.75px;line-height:8.10px;color:#676a7b;font-weight:normal;">Gi-Min. Stress_P90</div>
<div class="a" style="left:751.0px;top:161.0px;width:5.0px;height:1.1px;background:#d98a88;"></div>
<div class="a" style="left:760.5px;top:157.5px;font-size:6.75px;line-height:8.10px;color:#676a7b;font-weight:normal;">Gi-Breakout_P10</div>
<div class="a" style="left:824.0px;top:161.0px;width:5.0px;height:1.1px;background:#eea5a2;"></div>
<div class="a" style="left:833.5px;top:157.5px;font-size:6.75px;line-height:8.10px;color:#676a7b;font-weight:normal;">Gi-Breakout_P50</div>
<div class="a" style="left:895.0px;top:161.0px;width:5.0px;height:1.1px;background:#f5c3c0;"></div>
<div class="a" style="left:904.5px;top:157.5px;font-size:6.75px;line-height:8.10px;color:#676a7b;font-weight:normal;">Gi-Breakout_P90</div>
<div class="a" style="left:965.4px;top:161.0px;width:5.0px;height:1.1px;background:#6a7a9c;"></div>
<div class="a" style="left:974.9px;top:157.5px;font-size:6.75px;line-height:8.10px;color:#676a7b;font-weight:normal;">Gi-Breakdown_P10</div>
<div class="a" style="left:595.8px;top:169.5px;width:5.0px;height:1.1px;background:#8397ba;"></div>
<div class="a" style="left:605.3px;top:165.9px;font-size:6.75px;line-height:8.10px;color:#676a7b;font-weight:normal;">Gi-Breakdown_P50</div>
<div class="a" style="left:673.4px;top:169.5px;width:5.0px;height:1.1px;background:#a6b6d2;"></div>
<div class="a" style="left:682.9px;top:165.9px;font-size:6.75px;line-height:8.10px;color:#676a7b;font-weight:normal;">Gi-Breakdown_P90</div>
<div class="a" style="left:751.0px;top:169.5px;width:5.0px;height:1.1px;background:#f4b57a;"></div>
<div class="a" style="left:760.5px;top:165.9px;font-size:6.75px;line-height:8.10px;color:#676a7b;font-weight:normal;">Gi-verticalStress</div>
<div class="a" style="left:824.0px;top:169.5px;width:5.0px;height:1.1px;background:#a5a7b3;"></div>
<div class="a" style="left:833.5px;top:165.9px;font-size:6.75px;line-height:8.10px;color:#676a7b;font-weight:normal;">Extrapolation</div>
<div class="a" style="left:858.0px;top:176.7px;font-size:6.45px;line-height:7.74px;color:#777a8c;font-weight:normal;">Pressure [kPa]</div>
<div class="a" style="left:590.5px;width:200px;top:186.3px;font-size:6.6px;line-height:7.92px;color:#85889a;font-weight:normal;text-align:center;">0.00</div>
<div class="a" style="left:708.8px;width:200px;top:186.3px;font-size:6.6px;line-height:7.92px;color:#85889a;font-weight:normal;text-align:center;">50000.00</div>
<div class="a" style="left:827.1px;width:200px;top:186.3px;font-size:6.6px;line-height:7.92px;color:#85889a;font-weight:normal;text-align:center;">100000.00</div>
<div class="a" style="left:945.4px;width:200px;top:186.3px;font-size:6.6px;line-height:7.92px;color:#85889a;font-weight:normal;text-align:center;">150000.00</div>
<div class="a" style="right:494.0px;top:194.7px;font-size:6.55px;line-height:7.86px;color:#85889a;font-weight:normal;text-align:right;">140.30</div>
<div class="a" style="right:494.0px;top:233.1px;font-size:6.55px;line-height:7.86px;color:#85889a;font-weight:normal;text-align:right;">500.00</div>
<div class="a" style="right:494.0px;top:292.0px;font-size:6.55px;line-height:7.86px;color:#85889a;font-weight:normal;text-align:right;">1000.00</div>
<div class="a" style="right:494.0px;top:350.9px;font-size:6.55px;line-height:7.86px;color:#85889a;font-weight:normal;text-align:right;">1500.00</div>
<div class="a" style="right:494.0px;top:409.8px;font-size:6.55px;line-height:7.86px;color:#85889a;font-weight:normal;text-align:right;">2000.00</div>
<div class="a" style="right:494.0px;top:468.7px;font-size:6.55px;line-height:7.86px;color:#85889a;font-weight:normal;text-align:right;">2500.00</div>
<div class="a" style="right:494.0px;top:527.6px;font-size:6.55px;line-height:7.86px;color:#85889a;font-weight:normal;text-align:right;">3000.00</div>
<div class="a" style="right:494.0px;top:586.5px;font-size:6.55px;line-height:7.86px;color:#85889a;font-weight:normal;text-align:right;">3500.00</div>
<div class="a" style="right:494.0px;top:619.9px;font-size:6.55px;line-height:7.86px;color:#85889a;font-weight:normal;text-align:right;">3758.26</div>
<div class="a" style="right:494.0px;top:645.4px;font-size:6.55px;line-height:7.86px;color:#85889a;font-weight:normal;text-align:right;">4000.00</div>
<div class="a" style="right:494.0px;top:661.7px;font-size:6.55px;line-height:7.86px;color:#85889a;font-weight:normal;text-align:right;">4174.50</div>
<div class="a" style="left:592.6px;top:433px;font-size:5.8px;line-height:7px;color:#6a6d80;transform:translate(-50%,-50%) rotate(-90deg);transform-origin:50% 50%">MD-RKB [m]</div>
<svg style="left:0;top:0" width="1130" height="730" viewBox="0 0 1130 730">
<defs><clipPath id="cc"><rect x="641.0" y="195.0" width="475.0" height="474.6"/></clipPath></defs>
<rect x="641.0" y="195.0" width="475.0" height="474.6" fill="#fff"/>
<polygon points="641.0,195.0 690.5,195.0 691.5,200.0 692.3,204.0 693.1,208.0 693.9,212.0 694.7,216.0 695.5,220.0 696.3,224.0 697.1,228.0 697.9,232.0 698.7,236.0 699.5,240.0 700.3,244.0 701.1,248.0 701.9,252.0 702.6,256.0 703.4,260.0 704.1,264.0 704.9,268.0 705.6,272.0 706.4,276.0 707.1,280.0 707.9,284.0 708.6,288.0 709.4,292.0 710.1,296.0 710.9,300.0 711.8,304.0 712.7,308.0 713.6,312.0 714.4,316.0 715.3,320.0 716.2,324.0 717.1,328.0 717.9,332.0 718.6,336.0 719.3,340.0 720.0,344.0 720.8,348.0 721.5,352.0 722.2,356.0 723.0,360.0 723.7,364.0 724.4,368.0 725.1,372.0 725.8,376.0 726.2,380.0 726.8,384.0 727.2,388.0 727.8,392.0 728.2,396.0 728.8,400.0 729.2,404.0 729.8,408.0 730.2,412.0 730.9,416.0 731.8,420.0 732.7,424.0 733.6,428.0 734.5,432.0 736.3,436.0 738.1,440.0 739.8,444.0 741.6,448.0 742.7,452.0 743.1,456.0 743.5,460.0 743.9,464.0 744.3,468.0 744.7,472.0 745.1,476.0 745.5,480.0 745.9,484.0 746.3,488.0 746.7,492.0 747.1,496.0 747.5,500.0 747.9,504.0 748.3,508.0 748.7,512.0 749.0,516.0 749.4,520.0 749.8,524.0 750.1,528.0 750.5,532.0 752.0,536.0 753.6,540.0 755.1,544.0 756.7,548.0 758.3,552.0 759.9,556.0 761.5,560.0 761.5,564.0 761.5,568.0 761.5,572.0 761.5,576.0 761.5,580.0 761.5,584.0 761.5,588.0 761.5,592.0 761.5,596.0 761.5,600.0 761.5,604.0 761.5,608.0 761.5,612.0 761.5,616.0 761.5,620.0 761.4,624.0 761.3,628.0 761.2,632.0 761.2,636.0 761.1,640.0 761.0,644.0 760.9,648.0 760.8,652.0 760.8,656.0 760.7,660.0 760.6,664.0 760.5,668.0 763.4,669.6 641.0,669.6" fill="#e0f4fe"/>
<polygon points="1116.0,195.0 694.0,195.0 695.6,200.0 696.9,204.0 698.3,208.0 699.6,212.0 700.9,216.0 702.2,220.0 703.5,224.0 704.8,228.0 706.1,232.0 707.4,236.0 708.7,240.0 710.0,244.0 711.3,248.0 712.8,252.0 714.2,256.0 715.8,260.0 717.2,264.0 718.8,268.0 720.2,272.0 721.8,276.0 723.2,280.0 724.8,284.0 726.2,288.0 727.6,292.0 728.9,296.0 730.1,300.0 731.4,304.0 732.6,308.0 733.9,312.0 735.1,316.0 736.4,320.0 737.6,324.0 738.9,328.0 740.2,332.0 741.8,336.0 743.2,340.0 744.8,344.0 746.2,348.0 747.8,352.0 749.2,356.0 750.8,360.0 752.2,364.0 753.8,368.0 755.2,372.0 756.8,376.0 758.4,380.0 760.0,384.0 761.6,388.0 763.2,392.0 764.8,396.0 766.4,400.0 768.0,404.0 769.6,408.0 771.2,412.0 772.6,416.0 773.8,420.0 775.1,424.0 776.3,428.0 777.5,432.0 778.8,436.0 780.0,440.0 780.8,444.0 781.6,448.0 782.4,452.0 783.2,456.0 784.0,460.0 784.8,464.0 785.6,468.0 787.0,472.0 789.0,476.0 791.0,480.0 796.3,484.0 805.0,488.0 813.7,492.0 820.0,496.0 824.0,500.0 828.0,504.0 832.0,508.0 832.7,512.0 833.5,516.0 834.2,520.0 834.9,524.0 835.6,528.0 836.7,532.0 838.0,536.0 839.3,540.0 840.7,544.0 842.0,548.0 843.7,552.0 845.5,556.0 847.2,560.0 849.0,564.0 849.4,568.0 849.4,572.0 849.4,576.0 849.4,580.0 849.4,584.0 849.4,588.0 849.4,592.0 849.4,596.0 849.4,600.0 849.4,604.0 849.4,608.0 849.4,612.0 849.4,616.0 849.4,620.0 849.4,624.0 849.4,628.0 849.4,632.0 849.4,636.0 849.4,640.0 849.4,644.0 849.4,648.0 849.4,652.0 849.4,656.0 849.4,660.0 849.4,664.0 849.4,668.0 849.4,669.6 1116.0,669.6" fill="#fff0cf"/>
<line x1="690.5" y1="195.0" x2="690.5" y2="669.6" stroke="#c9ccd8" stroke-opacity="0.5" stroke-width="0.8"/>
<line x1="808.8" y1="195.0" x2="808.8" y2="669.6" stroke="#c9ccd8" stroke-opacity="0.5" stroke-width="0.8"/>
<line x1="927.1" y1="195.0" x2="927.1" y2="669.6" stroke="#c9ccd8" stroke-opacity="0.5" stroke-width="0.8"/>
<line x1="1045.4" y1="195.0" x2="1045.4" y2="669.6" stroke="#c9ccd8" stroke-opacity="0.5" stroke-width="0.8"/>
<line x1="641.0" y1="237.0" x2="1116.0" y2="237.0" stroke="#c9ccd8" stroke-opacity="0.5" stroke-width="0.8"/>
<line x1="638.5" y1="237.0" x2="641.0" y2="237.0" stroke="#b5b8c6" stroke-width="0.8"/>
<line x1="641.0" y1="295.9" x2="1116.0" y2="295.9" stroke="#c9ccd8" stroke-opacity="0.5" stroke-width="0.8"/>
<line x1="638.5" y1="295.9" x2="641.0" y2="295.9" stroke="#b5b8c6" stroke-width="0.8"/>
<line x1="641.0" y1="354.8" x2="1116.0" y2="354.8" stroke="#c9ccd8" stroke-opacity="0.5" stroke-width="0.8"/>
<line x1="638.5" y1="354.8" x2="641.0" y2="354.8" stroke="#b5b8c6" stroke-width="0.8"/>
<line x1="641.0" y1="413.7" x2="1116.0" y2="413.7" stroke="#c9ccd8" stroke-opacity="0.5" stroke-width="0.8"/>
<line x1="638.5" y1="413.7" x2="641.0" y2="413.7" stroke="#b5b8c6" stroke-width="0.8"/>
<line x1="641.0" y1="472.6" x2="1116.0" y2="472.6" stroke="#c9ccd8" stroke-opacity="0.5" stroke-width="0.8"/>
<line x1="638.5" y1="472.6" x2="641.0" y2="472.6" stroke="#b5b8c6" stroke-width="0.8"/>
<line x1="641.0" y1="531.5" x2="1116.0" y2="531.5" stroke="#c9ccd8" stroke-opacity="0.5" stroke-width="0.8"/>
<line x1="638.5" y1="531.5" x2="641.0" y2="531.5" stroke="#b5b8c6" stroke-width="0.8"/>
<line x1="641.0" y1="590.4" x2="1116.0" y2="590.4" stroke="#c9ccd8" stroke-opacity="0.5" stroke-width="0.8"/>
<line x1="638.5" y1="590.4" x2="641.0" y2="590.4" stroke="#b5b8c6" stroke-width="0.8"/>
<line x1="641.0" y1="649.3" x2="1116.0" y2="649.3" stroke="#c9ccd8" stroke-opacity="0.5" stroke-width="0.8"/>
<line x1="638.5" y1="649.3" x2="641.0" y2="649.3" stroke="#b5b8c6" stroke-width="0.8"/>
<line x1="641.0" y1="195.0" x2="1116.0" y2="195.0" stroke="#c3c6d3" stroke-width="1"/>
<line x1="641.0" y1="195.0" x2="641.0" y2="669.6" stroke="#c3c6d3" stroke-width="1"/>
<g clip-path="url(#cc)">
<polyline points="694.1,203.5 694.4,204.5 694.6,205.5 694.8,206.5 695.1,207.5 695.3,208.5 695.6,209.5 695.8,210.5 696.0,211.5 696.3,212.5 696.5,213.5 696.7,214.5 697.0,215.5 697.2,216.5 697.5,217.5 697.7,218.5 697.9,219.5 698.2,220.5 698.4,221.5 698.7,222.5 698.9,223.5 699.1,224.5 699.4,225.5 699.6,226.5 699.8,227.5 700.1,228.5 700.3,229.5 700.6,230.5 700.8,231.5 701.0,232.5 701.3,233.5 701.5,234.5 701.8,235.5 702.0,236.5 702.2,237.5 702.5,238.5 702.7,239.5 702.9,240.5 703.2,241.5 703.4,242.5 703.7,243.5 703.9,244.5 704.2,245.5 704.4,246.5 704.6,247.5 704.9,248.5 705.1,249.5 705.3,250.5 705.6,251.5 705.8,252.5 706.0,253.5 706.3,254.5 706.5,255.5 706.8,256.5 707.0,257.5 707.2,258.5 707.5,259.5 707.7,260.5 707.9,261.5 708.2,262.5 708.4,263.5 708.6,264.5 708.8,265.5 709.1,266.5 709.4,267.5 709.5,268.5 709.8,269.5 710.1,270.5 710.3,271.5 710.5,272.5 710.7,273.5 711.0,274.5 711.3,275.5 711.4,276.5 711.7,277.5 711.9,278.5 712.1,279.5 712.4,280.5 712.6,281.5 712.8,282.5 713.1,283.5 713.3,284.5 713.5,285.5 713.7,286.5 714.0,287.5 714.2,288.5 714.5,289.5 714.7,290.5 715.0,291.5 715.2,292.5 715.4,293.5 715.6,294.5 715.9,295.5 716.2,296.5 716.3,297.5 716.6,298.5 716.9,299.5 717.2,300.5 717.4,301.5 717.7,302.5 718.0,303.5 718.2,304.5 718.4,305.5 718.7,306.5 719.1,307.5 719.3,308.5 719.6,309.5 719.9,310.5 720.2,311.5 720.3,312.5 720.5,313.5 720.8,314.5 721.1,315.5 721.4,316.5 721.7,317.5 722.0,318.5 722.2,319.5 722.6,320.5 722.8,321.5 723.0,322.5 723.3,323.5 723.5,324.5 723.9,325.5 724.1,326.5 724.4,327.5 724.5,328.5 724.8,329.5 725.2,330.5 725.3,331.5 725.5,332.5 725.8,333.5 726.0,334.5 726.3,335.5 726.5,336.5 726.6,337.5 726.8,338.5 727.2,339.5 727.3,340.5 727.4,341.5 727.6,342.5 727.8,343.5 728.2,344.5 728.3,345.5 728.6,346.5 728.9,347.5 729.0,348.5 729.4,349.5 729.3,350.5 729.8,351.5 730.0,352.5 730.3,353.5 730.2,354.5 730.5,355.5 730.8,356.5 731.0,357.5 731.2,358.5 731.3,359.5 731.8,360.5 732.0,361.5 732.2,362.5 732.5,363.5 732.5,364.5 732.5,365.5 733.0,366.5 733.0,367.5 733.5,368.5 733.7,369.5 733.7,370.5 733.9,371.5 734.0,372.5 734.3,373.5 734.9,374.5 734.7,375.5 735.2,376.5 735.0,377.5 735.2,378.5 735.4,379.5 735.5,380.5 736.0,381.5 735.8,382.5 736.1,383.5 736.1,384.5 736.2,385.5 736.7,386.5 736.7,387.5 736.9,388.5 737.2,389.5 737.0,390.5 737.1,391.5 737.7,392.5 738.0,393.5 737.6,394.5 738.0,395.5 738.5,396.5 738.6,397.5 738.8,398.5 738.7,399.5 739.1,400.5 738.7,401.5 739.1,402.5 739.6,403.5 739.4,404.5 739.6,405.5 739.8,406.5 742.3,407.5 745.6,408.5 743.7,409.5 740.5,410.5 740.5,411.5 741.0,412.5 741.1,413.5 741.4,414.5 741.5,415.5 742.0,416.5 742.2,417.5 742.2,418.5 742.2,419.5 742.2,420.5 743.2,421.5 743.5,422.5 743.3,423.5 738.6,424.5 735.8,425.5 740.6,426.5 744.1,427.5 744.1,428.5 744.5,429.5 744.8,430.5 745.6,431.5 746.1,432.5 746.6,433.5 746.9,434.5 747.7,435.5 744.3,436.5 740.3,437.5 745.2,438.5 749.3,439.5 749.2,440.5 750.1,441.5 750.1,442.5 750.8,443.5 751.8,444.5 751.3,445.5 752.4,446.5 754.7,447.5 757.2,448.5 755.7,449.5 754.3,450.5 754.0,451.5 753.8,452.5 754.2,453.5 754.7,454.5 754.0,455.5 755.0,456.5 754.2,457.5 754.8,458.5 754.8,459.5 755.5,460.5 755.6,461.5 755.5,462.5 755.1,463.5 755.2,464.5 755.9,465.5 755.7,466.5 755.9,467.5 756.1,468.5 755.6,469.5 755.9,470.5 756.7,471.5 756.0,472.5 756.8,473.5 756.0,474.5 756.0,475.5 756.7,476.5 756.5,477.5 757.0,478.5 754.8,479.5 751.3,480.5 754.1,481.5 756.8,482.5 757.8,483.5 757.9,484.5 758.0,485.5 757.9,486.5 757.6,487.5 758.0,488.5 758.0,489.5 757.9,490.5 757.9,491.5 758.4,492.5 758.8,493.5 760.6,494.5 763.6,495.5 761.3,496.5 758.9,497.5 758.7,498.5 758.5,499.5 759.2,500.5 759.0,501.5 759.6,502.5 759.0,503.5 759.7,504.5 760.1,505.5 759.3,506.5 759.6,507.5 760.4,508.5 759.8,509.5 759.8,510.5 761.7,511.5 764.8,512.5 762.5,513.5 761.1,514.5 760.6,515.5 760.2,516.5 761.3,517.5 761.3,518.5 761.2,519.5 761.1,520.5 761.4,521.5 761.7,522.5 760.9,523.5 761.0,524.5 761.7,525.5 761.4,526.5 764.2,527.5 766.3,528.5 764.2,529.5 761.7,530.5 762.1,531.5 762.3,532.5 762.7,533.5 769.6,534.5 782.4,535.5 795.9,536.5 785.8,537.5 773.0,538.5 765.3,539.5 764.9,540.5 766.1,541.5 766.6,542.5 766.1,543.5 766.4,544.5 767.4,545.5 767.6,546.5 767.9,547.5 768.6,548.5 770.6,549.5 773.1,550.5 776.0,551.5 774.8,552.5 773.1,553.5 770.8,554.5 771.3,555.5 771.6,556.5 772.1,557.5 772.4,558.5 772.8,559.5 773.0,560.5 773.0,561.5 773.0,562.5 773.0,563.5 773.0,564.5 773.0,565.5 773.0,566.5 773.0,567.5 773.0,568.5 773.0,569.5 773.0,570.5 773.0,571.5 773.0,572.5 773.0,573.5 773.0,574.5 773.0,575.5 773.0,576.5 773.0,577.5 773.0,578.5 773.0,579.5 773.0,580.5 773.0,581.5 773.0,582.5 773.0,583.5 773.0,584.5 773.0,585.5 773.0,586.5 773.0,587.5 773.0,588.5 773.0,589.5 773.0,590.5 773.0,591.5 773.0,592.5 773.0,593.5 773.0,594.5 773.0,595.5 773.0,596.5 773.0,597.5 773.0,598.5 773.0,599.5 773.0,600.5 773.0,601.5 773.0,602.5 773.0,603.5 773.0,604.5 773.0,605.5 773.0,606.5 773.0,607.5 773.0,608.5 773.0,609.5 773.0,610.5 773.0,611.5 773.0,612.5 773.0,613.5 773.0,614.5 773.0,615.5 773.0,616.5 773.0,617.5 773.0,618.5 771.0,619.0 770.7,620.0 770.3,621.4 769.8,623.0 769.2,624.8 768.7,626.6 768.3,628.5 768.1,630.3 768.0,632.0 768.2,633.5 768.7,635.0 769.4,636.5 770.1,638.0 770.9,639.5 771.5,641.0 771.9,642.5 772.0,644.0 771.7,645.6 771.2,647.2 770.4,648.8 769.5,650.4 768.6,652.1 767.8,653.7 767.3,655.4 767.0,657.0 767.1,658.7 767.5,660.6 768.0,662.4 768.7,664.3 769.4,666.1 770.1,667.7 770.6,669.0 771.0,670.0" fill="none" stroke="#efb2ea" stroke-width="1.6" stroke-linejoin="round"/>
<polyline points="694.1,203.5 694.3,204.5 694.5,205.5 694.8,206.5 695.0,207.5 695.2,208.5 695.4,209.5 695.6,210.5 695.8,211.5 696.0,212.5 696.3,213.5 696.5,214.5 696.7,215.5 696.9,216.5 697.1,217.5 697.3,218.5 697.5,219.5 697.8,220.5 698.0,221.5 698.2,222.5 698.4,223.5 698.6,224.5 698.8,225.5 699.0,226.5 699.3,227.5 699.5,228.5 699.7,229.5 699.9,230.5 700.1,231.5 700.3,232.5 700.6,233.5 700.8,234.5 701.0,235.5 701.2,236.5 701.4,237.5 701.6,238.5 701.9,239.5 702.1,240.5 702.3,241.5 702.5,242.5 702.7,243.5 702.9,244.5 703.1,245.5 703.3,246.5 703.6,247.5 703.8,248.5 704.0,249.5 704.2,250.5 704.4,251.5 704.6,252.5 704.9,253.5 705.1,254.5 705.3,255.5 705.5,256.5 705.7,257.5 705.9,258.5 706.1,259.5 706.3,260.5 706.5,261.5 706.7,262.5 706.9,263.5 707.2,264.5 707.4,265.5 707.6,266.5 707.8,267.5 708.0,268.5 708.2,269.5 708.5,270.5 708.7,271.5 708.9,272.5 709.0,273.5 709.2,274.5 709.5,275.5 709.7,276.5 710.0,277.5 710.1,278.5 710.4,279.5 710.5,280.5 710.8,281.5 711.0,282.5 711.2,283.5 711.3,284.5 711.6,285.5 711.8,286.5 712.0,287.5 712.2,288.5 712.4,289.5 712.7,290.5 712.8,291.5 713.1,292.5 713.3,293.5 713.5,294.5 713.7,295.5 714.0,296.5 714.2,297.5 714.3,298.5 714.5,299.5 714.9,300.5 715.2,301.5 715.3,302.5 715.6,303.5 715.9,304.5 716.1,305.5 716.3,306.5 716.6,307.5 716.7,308.5 717.0,309.5 717.3,310.5 717.5,311.5 717.8,312.5 718.0,313.5 718.3,314.5 718.4,315.5 718.8,316.5 719.0,317.5 719.2,318.5 719.4,319.5 719.6,320.5 719.9,321.5 720.1,322.5 720.4,323.5 720.6,324.5 720.9,325.5 721.1,326.5 721.4,327.5 721.7,328.5 721.9,329.5 722.1,330.5 722.3,331.5 722.5,332.5 722.6,333.5 722.9,334.5 723.1,335.5 723.3,336.5 723.6,337.5 723.6,338.5 723.9,339.5 724.1,340.5 724.2,341.5 724.4,342.5 724.6,343.5 725.0,344.5 725.2,345.5 725.3,346.5 725.5,347.5 725.6,348.5 726.0,349.5 726.2,350.5 726.4,351.5 726.5,352.5 726.9,353.5 727.0,354.5 726.9,355.5 727.3,356.5 727.5,357.5 727.6,358.5 727.9,359.5 728.0,360.5 728.4,361.5 728.6,362.5 728.5,363.5 729.0,364.5 729.0,365.5 729.3,366.5 729.6,367.5 729.9,368.5 730.0,369.5 730.0,370.5 730.4,371.5 730.3,372.5 730.8,373.5 730.8,374.5 730.9,375.5 731.0,376.5 731.1,377.5 731.6,378.5 731.4,379.5 731.6,380.5 731.7,381.5 731.8,382.5 732.3,383.5 732.3,384.5 732.5,385.5 732.8,386.5 732.7,387.5 732.6,388.5 732.8,389.5 733.2,390.5 733.4,391.5 733.7,392.5 733.6,393.5 733.6,394.5 733.9,395.5 734.3,396.5 734.0,397.5 734.6,398.5 734.7,399.5 734.6,400.5 734.7,401.5 734.6,402.5 734.7,403.5 734.8,404.5 737.2,405.5 740.1,406.5 739.4,407.5 736.6,408.5 736.2,409.5 735.9,410.5 735.8,411.5 735.9,412.5 736.2,413.5 736.6,414.5 737.3,415.5 736.9,416.5 737.1,417.5 737.8,418.5 737.7,419.5 738.1,420.5 737.9,421.5 735.1,422.5 731.2,423.5 734.6,424.5 739.2,425.5 739.3,426.5 739.2,427.5 739.7,428.5 740.6,429.5 740.4,430.5 740.3,431.5 740.6,432.5 741.1,433.5 738.9,434.5 736.2,435.5 738.8,436.5 742.8,437.5 744.0,438.5 743.8,439.5 745.0,440.5 744.8,441.5 745.6,442.5 745.5,443.5 747.0,444.5 748.0,445.5 751.1,446.5 750.8,447.5 749.1,448.5 749.0,449.5 748.9,450.5 749.5,451.5 749.8,452.5 749.5,453.5 750.0,454.5 750.0,455.5 749.1,456.5 750.0,457.5 749.4,458.5 750.1,459.5 749.9,460.5 750.6,461.5 749.7,462.5 750.9,463.5 749.9,464.5 750.0,465.5 750.1,466.5 750.3,467.5 751.4,468.5 751.4,469.5 751.6,470.5 750.8,471.5 751.5,472.5 751.7,473.5 751.7,474.5 751.3,475.5 752.2,476.5 750.2,477.5 747.6,478.5 748.3,479.5 751.1,480.5 752.5,481.5 752.3,482.5 752.3,483.5 753.0,484.5 752.5,485.5 753.1,486.5 752.2,487.5 752.9,488.5 753.2,489.5 752.5,490.5 753.4,491.5 754.8,492.5 758.0,493.5 757.0,494.5 753.9,495.5 754.2,496.5 753.4,497.5 753.4,498.5 753.9,499.5 753.5,500.5 753.7,501.5 754.6,502.5 753.9,503.5 754.5,504.5 755.0,505.5 754.6,506.5 755.1,507.5 755.2,508.5 756.0,509.5 758.1,510.5 758.2,511.5 756.3,512.5 755.7,513.5 755.7,514.5 755.5,515.5 756.1,516.5 756.0,517.5 756.1,518.5 756.4,519.5 755.4,520.5 756.3,521.5 756.2,522.5 755.6,523.5 756.0,524.5 758.1,525.5 760.1,526.5 759.4,527.5 757.1,528.5 756.9,529.5 757.3,530.5 757.5,531.5 760.9,532.5 773.6,533.5 785.3,534.5 780.9,535.5 769.7,536.5 759.5,537.5 759.0,538.5 759.5,539.5 760.3,540.5 760.4,541.5 760.6,542.5 761.0,543.5 761.7,544.5 762.5,545.5 762.2,546.5 764.8,547.5 766.6,548.5 769.3,549.5 769.2,550.5 767.0,551.5 765.5,552.5 765.2,553.5 765.7,554.5 766.3,555.5 766.5,556.5 767.0,557.5 767.4,558.5 767.8,559.5 768.0,560.5 768.0,561.5 768.0,562.5 768.0,563.5 768.0,564.5 768.0,565.5 768.0,566.5 768.0,567.5 768.0,568.5 768.0,569.5 768.0,570.5 768.0,571.5 768.0,572.5 768.0,573.5 768.0,574.5 768.0,575.5 768.0,576.5 768.0,577.5 768.0,578.5 768.0,579.5 768.0,580.5 768.0,581.5 768.0,582.5 768.0,583.5 768.0,584.5 768.0,585.5 768.0,586.5 768.0,587.5 768.0,588.5 768.0,589.5 768.0,590.5 768.0,591.5 768.0,592.5 768.0,593.5 768.0,594.5 768.0,595.5 768.0,596.5 768.0,597.5 768.0,598.5 768.0,599.5 768.0,600.5 768.0,601.5 768.0,602.5 768.0,603.5 768.0,604.5 768.0,605.5 768.0,606.5 768.0,607.5 768.0,608.5 768.0,609.5 768.0,610.5 768.0,611.5 768.0,612.5 768.0,613.5 768.0,614.5 768.0,615.5 768.0,616.5 768.0,617.5 768.0,618.5 767.0,619.0 766.7,619.9 766.3,621.2 765.8,622.6 765.2,624.2 764.7,626.0 764.3,627.7 764.1,629.4 764.0,631.0 764.2,632.5 764.7,634.0 765.4,635.5 766.1,636.9 766.9,638.4 767.5,639.9 767.9,641.5 768.0,643.0 767.7,644.6 767.2,646.2 766.4,647.8 765.5,649.4 764.6,651.0 763.8,652.7 763.3,654.3 763.0,656.0 763.1,657.8 763.5,659.8 764.0,661.8 764.7,663.8 765.4,665.7 766.1,667.5 766.6,668.9 767.0,670.0" fill="none" stroke="#d57bdc" stroke-width="1.6" stroke-linejoin="round"/>
<polyline points="694.1,203.5 694.3,204.5 694.5,205.5 694.7,206.5 694.9,207.5 695.1,208.5 695.2,209.5 695.4,210.5 695.6,211.5 695.8,212.5 696.0,213.5 696.2,214.5 696.4,215.5 696.6,216.5 696.8,217.5 697.0,218.5 697.2,219.5 697.3,220.5 697.5,221.5 697.7,222.5 697.9,223.5 698.1,224.5 698.3,225.5 698.5,226.5 698.7,227.5 698.9,228.5 699.1,229.5 699.3,230.5 699.5,231.5 699.6,232.5 699.8,233.5 700.0,234.5 700.2,235.5 700.4,236.5 700.6,237.5 700.8,238.5 701.0,239.5 701.2,240.5 701.4,241.5 701.6,242.5 701.8,243.5 701.9,244.5 702.1,245.5 702.4,246.5 702.5,247.5 702.7,248.5 702.9,249.5 703.1,250.5 703.3,251.5 703.5,252.5 703.7,253.5 703.8,254.5 704.1,255.5 704.2,256.5 704.4,257.5 704.6,258.5 704.8,259.5 705.0,260.5 705.2,261.5 705.3,262.5 705.6,263.5 705.8,264.5 705.9,265.5 706.1,266.5 706.3,267.5 706.5,268.5 706.7,269.5 706.8,270.5 707.1,271.5 707.3,272.5 707.4,273.5 707.6,274.5 707.8,275.5 707.9,276.5 708.1,277.5 708.4,278.5 708.5,279.5 708.7,280.5 708.9,281.5 709.1,282.5 709.3,283.5 709.5,284.5 709.6,285.5 709.8,286.5 710.0,287.5 710.2,288.5 710.4,289.5 710.6,290.5 710.7,291.5 711.0,292.5 711.2,293.5 711.3,294.5 711.6,295.5 711.7,296.5 711.9,297.5 712.1,298.5 712.3,299.5 712.6,300.5 712.7,301.5 713.0,302.5 713.3,303.5 713.3,304.5 713.6,305.5 713.8,306.5 714.0,307.5 714.2,308.5 714.5,309.5 714.7,310.5 714.9,311.5 715.2,312.5 715.4,313.5 715.6,314.5 715.8,315.5 716.0,316.5 716.3,317.5 716.4,318.5 716.7,319.5 716.9,320.5 717.1,321.5 717.3,322.5 717.6,323.5 717.9,324.5 718.0,325.5 718.3,326.5 718.4,327.5 718.6,328.5 718.9,329.5 719.0,330.5 719.4,331.5 719.4,332.5 719.6,333.5 719.8,334.5 720.0,335.5 720.3,336.5 720.5,337.5 720.6,338.5 720.7,339.5 720.8,340.5 721.0,341.5 721.2,342.5 721.5,343.5 721.7,344.5 721.9,345.5 722.1,346.5 722.1,347.5 722.4,348.5 722.5,349.5 722.8,350.5 722.8,351.5 723.3,352.5 723.1,353.5 723.5,354.5 723.6,355.5 723.9,356.5 723.9,357.5 724.3,358.5 724.2,359.5 724.6,360.5 724.8,361.5 724.9,362.5 725.0,363.5 725.2,364.5 725.4,365.5 725.5,366.5 725.7,367.5 726.1,368.5 726.2,369.5 726.3,370.5 726.6,371.5 726.8,372.5 726.7,373.5 727.1,374.5 727.2,375.5 727.1,376.5 727.3,377.5 727.7,378.5 727.7,379.5 727.7,380.5 727.9,381.5 728.0,382.5 728.3,383.5 728.5,384.5 728.2,385.5 728.3,386.5 728.7,387.5 728.5,388.5 728.7,389.5 728.8,390.5 728.9,391.5 729.4,392.5 729.2,393.5 729.6,394.5 730.0,395.5 729.6,396.5 730.1,397.5 730.1,398.5 730.0,399.5 730.6,400.5 730.6,401.5 730.5,402.5 732.2,403.5 734.3,404.5 734.9,405.5 732.6,406.5 730.9,407.5 731.6,408.5 731.7,409.5 731.9,410.5 731.5,411.5 732.0,412.5 732.2,413.5 732.0,414.5 731.9,415.5 732.1,416.5 732.8,417.5 733.0,418.5 732.9,419.5 730.8,420.5 726.4,421.5 728.7,422.5 732.9,423.5 734.0,424.5 734.1,425.5 735.2,426.5 735.4,427.5 735.3,428.5 734.9,429.5 735.7,430.5 736.4,431.5 734.4,432.5 731.3,433.5 731.7,434.5 736.2,435.5 737.7,436.5 739.0,437.5 738.3,438.5 739.0,439.5 740.2,440.5 739.8,441.5 740.4,442.5 741.9,443.5 745.0,444.5 745.2,445.5 744.0,446.5 742.5,447.5 742.8,448.5 743.6,449.5 744.4,450.5 744.3,451.5 744.8,452.5 744.6,453.5 743.9,454.5 744.3,455.5 744.3,456.5 744.5,457.5 745.0,458.5 744.9,459.5 745.4,460.5 744.6,461.5 745.7,462.5 744.9,463.5 745.7,464.5 746.0,465.5 745.1,466.5 745.8,467.5 746.4,468.5 745.4,469.5 746.0,470.5 746.1,471.5 746.1,472.5 746.0,473.5 746.1,474.5 745.0,475.5 742.6,476.5 742.8,477.5 746.1,478.5 747.5,479.5 746.8,480.5 746.6,481.5 747.0,482.5 747.8,483.5 747.1,484.5 747.7,485.5 747.2,486.5 747.6,487.5 747.5,488.5 748.1,489.5 749.1,490.5 752.2,491.5 752.0,492.5 749.5,493.5 747.9,494.5 749.0,495.5 748.1,496.5 748.7,497.5 749.4,498.5 749.3,499.5 748.9,500.5 749.7,501.5 749.0,502.5 749.4,503.5 749.5,504.5 749.8,505.5 749.4,506.5 750.6,507.5 752.6,508.5 753.5,509.5 751.3,510.5 749.9,511.5 750.6,512.5 750.5,513.5 750.1,514.5 750.5,515.5 750.1,516.5 750.3,517.5 750.3,518.5 750.4,519.5 751.1,520.5 751.4,521.5 751.5,522.5 751.9,523.5 754.9,524.5 754.2,525.5 752.7,526.5 751.7,527.5 751.7,528.5 752.0,529.5 753.5,530.5 764.9,531.5 776.4,532.5 777.2,533.5 765.9,534.5 754.3,535.5 754.3,536.5 754.0,537.5 753.9,538.5 755.4,539.5 755.8,540.5 755.7,541.5 756.3,542.5 756.7,543.5 756.3,544.5 758.5,545.5 760.7,546.5 763.5,547.5 763.4,548.5 761.6,549.5 760.4,550.5 759.6,551.5 760.2,552.5 760.2,553.5 760.9,554.5 761.3,555.5 761.5,556.5 761.9,557.5 762.4,558.5 762.8,559.5 763.0,560.5 763.0,561.5 763.0,562.5 763.0,563.5 763.0,564.5 763.0,565.5 763.0,566.5 763.0,567.5 763.0,568.5 763.0,569.5 763.0,570.5 763.0,571.5 763.0,572.5 763.0,573.5 763.0,574.5 763.0,575.5 763.0,576.5 763.0,577.5 763.0,578.5 763.0,579.5 763.0,580.5 763.0,581.5 763.0,582.5 763.0,583.5 763.0,584.5 763.0,585.5 763.0,586.5 763.0,587.5 763.0,588.5 763.0,589.5 763.0,590.5 763.0,591.5 763.0,592.5 763.0,593.5 763.0,594.5 763.0,595.5 763.0,596.5 763.0,597.5 763.0,598.5 763.0,599.5 763.0,600.5 763.0,601.5 763.0,602.5 763.0,603.5 763.0,604.5 763.0,605.5 763.0,606.5 763.0,607.5 763.0,608.5 763.0,609.5 763.0,610.5 763.0,611.5 763.0,612.5 763.0,613.5 763.0,614.5 763.0,615.5 763.0,616.5 763.0,617.5 763.0,618.5 763.0,619.0 762.7,619.8 762.3,621.0 761.8,622.3 761.2,623.8 760.7,625.3 760.3,626.9 760.1,628.5 760.0,630.0 760.2,631.4 760.7,632.9 761.4,634.4 762.1,635.9 762.9,637.4 763.5,638.9 763.9,640.4 764.0,642.0 763.7,643.6 763.2,645.1 762.4,646.7 761.5,648.3 760.6,649.9 759.8,651.6 759.3,653.3 759.0,655.0 759.1,656.9 759.5,659.0 760.0,661.1 760.7,663.3 761.4,665.4 762.1,667.3 762.6,668.8 763.0,670.0" fill="none" stroke="#b45fd0" stroke-width="1.6" stroke-linejoin="round"/>
<polyline points="689.2,203.5 689.6,204.5 689.9,205.5 690.3,206.5 690.7,207.5 691.1,208.5 691.4,209.5 691.8,210.5 692.2,211.5 692.6,212.5 692.9,213.5 693.3,214.5 693.7,215.5 694.1,216.5 694.4,217.5 694.8,218.5 695.2,219.5 695.5,220.5 695.9,221.5 696.3,222.5 696.7,223.5 697.0,224.5 697.4,225.5 697.8,226.5 698.2,227.5 698.6,228.5 698.9,229.5 699.3,230.5 699.7,231.5 700.1,232.5 700.4,233.5 700.8,234.5 701.1,235.5 701.5,236.5 701.9,237.5 702.3,238.5 702.6,239.5 703.0,240.5 703.4,241.5 703.8,242.5 704.2,243.5 704.5,244.5 704.9,245.5 705.2,246.5 705.6,247.5 706.1,248.5 706.5,249.5 706.7,250.5 707.0,251.5 707.3,252.5 707.6,253.5 707.9,254.5 708.3,255.5 708.6,256.5 708.9,257.5 709.1,258.5 709.5,259.5 709.8,260.5 710.1,261.5 710.5,262.5 710.7,263.5 710.9,264.5 711.4,265.5 711.7,266.5 711.9,267.5 712.3,268.5 712.5,269.5 712.9,270.5 713.1,271.5 713.5,272.5 713.8,273.5 714.1,274.5 714.3,275.5 714.7,276.5 715.1,277.5 715.2,278.5 715.5,279.5 715.9,280.5 716.1,281.5 716.4,282.5 716.7,283.5 717.1,284.5 717.5,285.5 717.7,286.5 718.1,287.5 718.2,288.5 718.6,289.5 719.0,290.5 719.2,291.5 719.5,292.5 719.8,293.5 720.2,294.5 720.6,295.5 720.8,296.5 721.0,297.5 721.4,298.5 721.9,299.5 722.3,300.5 722.6,301.5 723.0,302.5 723.3,303.5 723.8,304.5 724.3,305.5 724.6,306.5 725.1,307.5 725.4,308.5 725.9,309.5 726.2,310.5 726.6,311.5 726.9,312.5 727.4,313.5 727.8,314.5 728.1,315.5 728.6,316.5 728.9,317.5 729.4,318.5 729.9,319.5 730.3,320.5 730.6,321.5 731.1,322.5 731.5,323.5 731.8,324.5 732.2,325.5 732.7,326.5 733.0,327.5 733.4,328.5 733.8,329.5 734.0,330.5 734.2,331.5 734.6,332.5 734.8,333.5 735.1,334.5 735.2,335.5 735.4,336.5 735.7,337.5 735.9,338.5 736.4,339.5 736.5,340.5 736.6,341.5 736.9,342.5 737.2,343.5 737.5,344.5 737.6,345.5 738.0,346.5 738.2,347.5 738.2,348.5 738.4,349.5 738.7,350.5 738.7,351.5 739.2,352.5 739.4,353.5 739.8,354.5 739.8,355.5 740.3,356.5 740.4,357.5 740.6,358.5 740.6,359.5 741.3,360.5 741.3,361.5 741.5,362.5 741.5,363.5 741.7,364.5 741.9,365.5 742.7,366.5 742.6,367.5 743.0,368.5 743.2,369.5 743.5,370.5 743.4,371.5 743.5,372.5 744.3,373.5 743.9,374.5 744.8,375.5 744.5,376.5 744.4,377.5 747.8,378.5 751.7,379.5 748.9,380.5 745.6,381.5 745.4,382.5 745.6,383.5 746.2,384.5 746.3,385.5 746.7,386.5 746.4,387.5 746.8,388.5 747.2,389.5 747.2,390.5 747.7,391.5 747.5,392.5 748.2,393.5 752.3,394.5 756.6,395.5 753.6,396.5 749.0,397.5 749.4,398.5 749.4,399.5 749.1,400.5 749.9,401.5 749.9,402.5 750.3,403.5 750.4,404.5 750.8,405.5 755.0,406.5 759.9,407.5 756.6,408.5 752.1,409.5 751.3,410.5 751.8,411.5 751.8,412.5 751.7,413.5 751.7,414.5 752.4,415.5 752.1,416.5 752.6,417.5 753.2,418.5 756.9,419.5 761.5,420.5 758.9,421.5 754.2,422.5 753.9,423.5 753.6,424.5 754.6,425.5 754.2,426.5 754.9,427.5 755.5,428.5 755.5,429.5 759.7,430.5 766.5,431.5 762.0,432.5 756.2,433.5 755.8,434.5 756.6,435.5 757.5,436.5 757.8,437.5 757.4,438.5 759.3,439.5 758.3,440.5 760.0,441.5 759.9,442.5 760.8,443.5 765.2,444.5 769.8,445.5 766.2,446.5 762.4,447.5 761.9,448.5 762.4,449.5 762.3,450.5 762.8,451.5 763.7,452.5 763.5,453.5 762.4,454.5 762.9,455.5 763.1,456.5 763.3,457.5 763.3,458.5 763.9,459.5 762.9,460.5 763.6,461.5 766.6,462.5 768.9,463.5 766.6,464.5 763.2,465.5 763.7,466.5 764.2,467.5 764.2,468.5 764.2,469.5 763.8,470.5 763.9,471.5 764.0,472.5 763.5,473.5 763.8,474.5 763.3,475.5 763.6,476.5 763.7,477.5 764.7,478.5 763.5,479.5 764.0,480.5 763.4,481.5 767.0,482.5 771.7,483.5 768.8,484.5 765.0,485.5 765.4,486.5 764.7,487.5 765.1,488.5 765.6,489.5 764.5,490.5 765.6,491.5 764.7,492.5 766.0,493.5 765.9,494.5 766.0,495.5 766.2,496.5 765.0,497.5 765.2,498.5 765.8,499.5 765.4,500.5 766.8,501.5 768.7,502.5 772.2,503.5 770.4,504.5 766.3,505.5 767.2,506.5 766.5,507.5 766.9,508.5 767.5,509.5 766.4,510.5 766.8,511.5 767.1,512.5 767.8,513.5 767.2,514.5 767.5,515.5 767.3,516.5 768.0,517.5 767.9,518.5 768.4,519.5 767.5,520.5 768.5,521.5 769.2,522.5 768.2,523.5 771.3,524.5 775.6,525.5 772.0,526.5 769.4,527.5 769.1,528.5 768.8,529.5 769.2,530.5 770.1,531.5 769.9,532.5 769.4,533.5 770.1,534.5 771.1,535.5 770.4,536.5 771.9,537.5 771.6,538.5 772.4,539.5 772.8,540.5 774.1,541.5 774.9,542.5 775.6,543.5 776.0,544.5 776.6,545.5 776.6,546.5 777.4,547.5 777.9,548.5 784.9,549.5 797.9,550.5 812.6,551.5 802.4,552.5 790.3,553.5 782.8,554.5 783.8,555.5 784.5,556.5 785.2,557.5 785.8,558.5 786.6,559.5 787.0,560.5 787.1,561.5 787.1,562.5 787.1,563.5 787.2,564.5 787.2,565.5 787.2,566.5 787.3,567.5 787.3,568.5 787.3,569.5 787.4,570.5 787.4,571.5 787.4,572.5 787.5,573.5 787.5,574.5 787.5,575.5 787.6,576.5 787.6,577.5 787.6,578.5 787.7,579.5 787.7,580.5 787.7,581.5 787.8,582.5 787.8,583.5 787.8,584.5 787.9,585.5 787.9,586.5 787.9,587.5 788.0,588.5 788.0,589.5 788.0,590.5 788.1,591.5 788.1,592.5 788.1,593.5 788.2,594.5 788.2,595.5 788.2,596.5 788.3,597.5 788.3,598.5 788.3,599.5 788.4,600.5 788.4,601.5 788.4,602.5 788.5,603.5 788.5,604.5 788.5,605.5 788.6,606.5 788.6,607.5 788.6,608.5 788.7,609.5 788.7,610.5 788.7,611.5 788.8,612.5 788.8,613.5 788.8,614.5 788.9,615.5 788.9,616.5 788.9,617.5 789.0,618.5 789.0,619.0 788.5,619.8 787.8,621.0 787.0,622.3 786.1,623.8 785.3,625.3 784.6,626.9 784.1,628.5 784.0,630.0 784.3,631.5 785.0,632.9 786.0,634.4 787.1,635.9 788.2,637.5 789.2,639.0 789.8,640.5 790.0,642.0 789.7,643.5 788.9,645.0 787.8,646.6 786.6,648.1 785.3,649.6 784.2,651.1 783.4,652.6 783.0,654.0 783.1,655.4 783.6,656.7 784.3,658.1 785.2,659.4 786.2,660.6 787.0,661.8 787.7,663.0 788.0,664.0 788.0,665.0 787.7,665.9 787.3,666.8 786.8,667.6 786.3,668.4 785.7,669.0 785.3,669.6 785.0,670.0" fill="none" stroke="#f4b2ae" stroke-width="1.6" stroke-linejoin="round"/>
<polyline points="689.2,203.5 689.5,204.5 689.9,205.5 690.2,206.5 690.6,207.5 690.9,208.5 691.3,209.5 691.6,210.5 691.9,211.5 692.3,212.5 692.6,213.5 693.0,214.5 693.3,215.5 693.7,216.5 694.0,217.5 694.4,218.5 694.7,219.5 695.1,220.5 695.4,221.5 695.7,222.5 696.1,223.5 696.4,224.5 696.8,225.5 697.2,226.5 697.5,227.5 697.8,228.5 698.2,229.5 698.5,230.5 698.9,231.5 699.2,232.5 699.6,233.5 699.9,234.5 700.3,235.5 700.6,236.5 700.9,237.5 701.3,238.5 701.7,239.5 702.0,240.5 702.4,241.5 702.7,242.5 703.0,243.5 703.4,244.5 703.7,245.5 704.1,246.5 704.4,247.5 704.8,248.5 705.2,249.5 705.5,250.5 705.7,251.5 706.0,252.5 706.3,253.5 706.5,254.5 706.8,255.5 707.1,256.5 707.3,257.5 707.7,258.5 708.0,259.5 708.2,260.5 708.5,261.5 708.8,262.5 709.0,263.5 709.2,264.5 709.6,265.5 709.9,266.5 710.2,267.5 710.5,268.5 710.8,269.5 710.9,270.5 711.3,271.5 711.5,272.5 711.7,273.5 712.0,274.5 712.4,275.5 712.6,276.5 713.0,277.5 713.2,278.5 713.5,279.5 713.7,280.5 714.1,281.5 714.4,282.5 714.5,283.5 714.9,284.5 715.1,285.5 715.4,286.5 715.8,287.5 716.0,288.5 716.2,289.5 716.4,290.5 716.9,291.5 717.2,292.5 717.5,293.5 717.6,294.5 717.9,295.5 718.2,296.5 718.4,297.5 718.8,298.5 719.1,299.5 719.5,300.5 720.0,301.5 720.2,302.5 720.8,303.5 721.1,304.5 721.4,305.5 721.8,306.5 722.1,307.5 722.6,308.5 722.8,309.5 723.4,310.5 723.6,311.5 724.0,312.5 724.4,313.5 724.7,314.5 725.0,315.5 725.4,316.5 725.9,317.5 726.2,318.5 726.7,319.5 727.0,320.5 727.2,321.5 727.6,322.5 728.2,323.5 728.5,324.5 728.7,325.5 729.2,326.5 729.6,327.5 730.0,328.5 730.3,329.5 730.7,330.5 730.7,331.5 731.1,332.5 731.3,333.5 731.4,334.5 731.5,335.5 731.7,336.5 732.1,337.5 732.3,338.5 732.5,339.5 732.5,340.5 732.7,341.5 733.1,342.5 733.1,343.5 733.4,344.5 733.5,345.5 733.8,346.5 734.1,347.5 734.5,348.5 734.3,349.5 734.6,350.5 734.8,351.5 735.0,352.5 735.3,353.5 735.3,354.5 735.6,355.5 735.8,356.5 736.4,357.5 736.2,358.5 736.7,359.5 736.9,360.5 737.1,361.5 737.1,362.5 737.3,363.5 737.6,364.5 737.7,365.5 737.9,366.5 738.1,367.5 738.1,368.5 738.7,369.5 738.8,370.5 738.7,371.5 739.1,372.5 739.1,373.5 739.6,374.5 739.8,375.5 742.5,376.5 745.2,377.5 744.5,378.5 741.7,379.5 740.5,380.5 740.8,381.5 741.1,382.5 740.9,383.5 741.3,384.5 741.9,385.5 742.1,386.5 742.3,387.5 741.6,388.5 742.4,389.5 742.6,390.5 742.4,391.5 745.5,392.5 750.3,393.5 748.4,394.5 745.0,395.5 743.3,396.5 744.0,397.5 744.0,398.5 743.9,399.5 744.4,400.5 744.8,401.5 744.7,402.5 744.4,403.5 747.7,404.5 753.2,405.5 751.6,406.5 746.9,407.5 745.2,408.5 745.9,409.5 746.1,410.5 745.9,411.5 746.5,412.5 746.6,413.5 747.2,414.5 746.2,415.5 747.5,416.5 750.4,417.5 754.0,418.5 752.5,419.5 748.8,420.5 748.0,421.5 748.1,422.5 748.1,423.5 748.9,424.5 748.6,425.5 748.9,426.5 749.2,427.5 753.3,428.5 757.7,429.5 755.7,430.5 751.2,431.5 750.4,432.5 750.9,433.5 750.8,434.5 750.6,435.5 751.8,436.5 752.5,437.5 752.8,438.5 752.3,439.5 752.4,440.5 753.5,441.5 756.5,442.5 761.2,443.5 760.6,444.5 756.9,445.5 755.7,446.5 756.7,447.5 756.7,448.5 756.3,449.5 756.9,450.5 756.7,451.5 757.9,452.5 757.0,453.5 756.8,454.5 757.7,455.5 757.9,456.5 757.0,457.5 756.9,458.5 757.0,459.5 758.8,460.5 763.0,461.5 760.7,462.5 759.2,463.5 758.0,464.5 757.3,465.5 757.7,466.5 758.1,467.5 757.0,468.5 757.9,469.5 758.3,470.5 757.7,471.5 758.3,472.5 757.4,473.5 757.0,474.5 757.4,475.5 758.7,476.5 757.7,477.5 757.7,478.5 757.3,479.5 760.4,480.5 764.0,481.5 763.0,482.5 758.7,483.5 757.8,484.5 757.8,485.5 759.3,486.5 759.2,487.5 758.4,488.5 758.6,489.5 758.6,490.5 759.1,491.5 759.3,492.5 759.7,493.5 759.6,494.5 758.8,495.5 759.8,496.5 759.0,497.5 759.7,498.5 759.2,499.5 762.0,500.5 764.9,501.5 764.7,502.5 761.1,503.5 760.9,504.5 759.9,505.5 760.2,506.5 760.7,507.5 760.8,508.5 760.3,509.5 761.3,510.5 761.3,511.5 761.8,512.5 762.2,513.5 762.0,514.5 761.3,515.5 762.0,516.5 761.9,517.5 761.3,518.5 762.3,519.5 761.9,520.5 761.9,521.5 764.9,522.5 767.5,523.5 767.5,524.5 764.4,525.5 762.5,526.5 763.9,527.5 762.7,528.5 763.5,529.5 764.1,530.5 763.3,531.5 764.2,532.5 763.8,533.5 763.5,534.5 764.8,535.5 764.9,536.5 766.0,537.5 766.8,538.5 766.6,539.5 768.2,540.5 768.4,541.5 769.0,542.5 769.3,543.5 770.3,544.5 769.9,545.5 770.6,546.5 774.6,547.5 788.0,548.5 801.0,549.5 796.9,550.5 785.1,551.5 775.7,552.5 776.4,553.5 776.8,554.5 777.4,555.5 778.3,556.5 779.2,557.5 779.9,558.5 780.6,559.5 781.0,560.5 781.1,561.5 781.1,562.5 781.1,563.5 781.2,564.5 781.2,565.5 781.2,566.5 781.3,567.5 781.3,568.5 781.3,569.5 781.4,570.5 781.4,571.5 781.4,572.5 781.5,573.5 781.5,574.5 781.5,575.5 781.6,576.5 781.6,577.5 781.6,578.5 781.7,579.5 781.7,580.5 781.7,581.5 781.8,582.5 781.8,583.5 781.8,584.5 781.9,585.5 781.9,586.5 781.9,587.5 782.0,588.5 782.0,589.5 782.0,590.5 782.1,591.5 782.1,592.5 782.1,593.5 782.2,594.5 782.2,595.5 782.2,596.5 782.3,597.5 782.3,598.5 782.3,599.5 782.4,600.5 782.4,601.5 782.4,602.5 782.5,603.5 782.5,604.5 782.5,605.5 782.6,606.5 782.6,607.5 782.6,608.5 782.7,609.5 782.7,610.5 782.7,611.5 782.8,612.5 782.8,613.5 782.8,614.5 782.9,615.5 782.9,616.5 782.9,617.5 783.0,618.5 783.0,619.0 782.5,619.8 781.8,620.8 781.0,621.9 780.1,623.2 779.3,624.7 778.6,626.1 778.1,627.6 778.0,629.0 778.3,630.4 779.0,631.9 780.0,633.4 781.1,634.9 782.2,636.4 783.2,638.0 783.8,639.5 784.0,641.0 783.7,642.5 782.9,644.0 781.8,645.6 780.6,647.1 779.3,648.6 778.2,650.1 777.4,651.6 777.0,653.0 777.1,654.4 777.6,655.7 778.3,657.0 779.2,658.3 780.2,659.6 781.0,660.8 781.7,661.9 782.0,663.0 782.0,664.1 781.7,665.1 781.3,666.2 780.8,667.1 780.3,668.0 779.7,668.8 779.3,669.5 779.0,670.0" fill="none" stroke="#ea8f8b" stroke-width="1.6" stroke-linejoin="round"/>
<polyline points="689.2,203.5 689.5,204.5 689.8,205.5 690.1,206.5 690.4,207.5 690.8,208.5 691.1,209.5 691.4,210.5 691.7,211.5 692.0,212.5 692.3,213.5 692.7,214.5 693.0,215.5 693.3,216.5 693.6,217.5 694.0,218.5 694.3,219.5 694.6,220.5 694.9,221.5 695.2,222.5 695.5,223.5 695.9,224.5 696.2,225.5 696.5,226.5 696.8,227.5 697.1,228.5 697.5,229.5 697.8,230.5 698.1,231.5 698.4,232.5 698.7,233.5 699.1,234.5 699.4,235.5 699.7,236.5 700.0,237.5 700.3,238.5 700.6,239.5 701.0,240.5 701.3,241.5 701.6,242.5 702.0,243.5 702.3,244.5 702.6,245.5 702.9,246.5 703.2,247.5 703.6,248.5 703.8,249.5 704.1,250.5 704.4,251.5 704.6,252.5 704.9,253.5 705.2,254.5 705.4,255.5 705.7,256.5 705.9,257.5 706.1,258.5 706.3,259.5 706.6,260.5 706.8,261.5 707.1,262.5 707.3,263.5 707.6,264.5 707.8,265.5 708.1,266.5 708.4,267.5 708.7,268.5 708.9,269.5 709.1,270.5 709.3,271.5 709.5,272.5 709.9,273.5 710.2,274.5 710.4,275.5 710.6,276.5 711.0,277.5 711.1,278.5 711.3,279.5 711.6,280.5 711.9,281.5 712.0,282.5 712.5,283.5 712.6,284.5 712.9,285.5 713.0,286.5 713.3,287.5 713.7,288.5 714.0,289.5 714.2,290.5 714.3,291.5 714.5,292.5 714.8,293.5 715.0,294.5 715.4,295.5 715.6,296.5 715.8,297.5 716.1,298.5 716.5,299.5 716.9,300.5 717.2,301.5 717.5,302.5 718.0,303.5 718.1,304.5 718.6,305.5 719.0,306.5 719.2,307.5 719.5,308.5 720.1,309.5 720.3,310.5 720.6,311.5 721.0,312.5 721.2,313.5 721.8,314.5 721.9,315.5 722.3,316.5 722.6,317.5 723.1,318.5 723.5,319.5 723.7,320.5 724.2,321.5 724.4,322.5 724.8,323.5 725.2,324.5 725.4,325.5 725.9,326.5 726.1,327.5 726.4,328.5 726.9,329.5 727.1,330.5 727.1,331.5 727.6,332.5 727.7,333.5 727.8,334.5 728.1,335.5 728.3,336.5 728.2,337.5 728.4,338.5 728.7,339.5 728.9,340.5 729.2,341.5 729.1,342.5 729.3,343.5 729.6,344.5 730.0,345.5 729.8,346.5 730.4,347.5 730.4,348.5 730.5,349.5 730.5,350.5 730.9,351.5 731.1,352.5 731.0,353.5 731.4,354.5 731.9,355.5 732.1,356.5 732.1,357.5 732.1,358.5 732.6,359.5 732.3,360.5 732.9,361.5 733.0,362.5 732.9,363.5 733.2,364.5 733.4,365.5 733.8,366.5 733.9,367.5 733.8,368.5 734.4,369.5 734.4,370.5 734.7,371.5 734.6,372.5 734.8,373.5 736.5,374.5 739.5,375.5 740.1,376.5 737.1,377.5 735.6,378.5 735.9,379.5 736.1,380.5 736.5,381.5 736.0,382.5 736.1,383.5 736.9,384.5 737.1,385.5 737.1,386.5 737.1,387.5 737.6,388.5 737.7,389.5 739.1,390.5 743.8,391.5 744.1,392.5 739.7,393.5 738.4,394.5 738.6,395.5 738.4,396.5 738.4,397.5 738.8,398.5 739.2,399.5 739.1,400.5 739.7,401.5 741.5,402.5 746.0,403.5 745.9,404.5 742.2,405.5 739.9,406.5 740.1,407.5 740.8,408.5 740.8,409.5 740.8,410.5 740.8,411.5 740.5,412.5 740.9,413.5 740.9,414.5 743.2,415.5 748.0,416.5 747.7,417.5 744.2,418.5 742.1,419.5 742.0,420.5 742.8,421.5 742.6,422.5 742.4,423.5 742.7,424.5 743.2,425.5 746.1,426.5 750.1,427.5 750.3,428.5 746.3,429.5 743.4,430.5 743.4,431.5 744.8,432.5 744.7,433.5 744.5,434.5 746.0,435.5 745.7,436.5 745.4,437.5 745.8,438.5 746.4,439.5 749.9,440.5 753.9,441.5 754.5,442.5 750.7,443.5 749.2,444.5 749.0,445.5 749.5,446.5 749.9,447.5 750.8,448.5 750.6,449.5 751.4,450.5 750.6,451.5 751.0,452.5 751.2,453.5 750.5,454.5 750.5,455.5 751.4,456.5 750.7,457.5 752.7,458.5 756.5,459.5 756.0,460.5 753.1,461.5 751.6,462.5 751.1,463.5 751.0,464.5 751.1,465.5 751.0,466.5 751.1,467.5 751.6,468.5 751.7,469.5 752.1,470.5 751.8,471.5 751.1,472.5 751.6,473.5 751.6,474.5 751.3,475.5 752.6,476.5 751.5,477.5 754.1,478.5 756.7,479.5 757.3,480.5 753.4,481.5 752.9,482.5 752.7,483.5 753.0,484.5 753.3,485.5 752.3,486.5 752.6,487.5 752.9,488.5 753.3,489.5 753.6,490.5 753.2,491.5 753.1,492.5 753.9,493.5 753.0,494.5 753.6,495.5 753.1,496.5 753.9,497.5 755.2,498.5 757.7,499.5 759.0,500.5 756.4,501.5 754.2,502.5 753.6,503.5 755.2,504.5 754.3,505.5 754.9,506.5 754.0,507.5 755.0,508.5 755.4,509.5 754.7,510.5 755.0,511.5 756.0,512.5 754.7,513.5 755.5,514.5 754.9,515.5 755.6,516.5 756.4,517.5 755.4,518.5 756.3,519.5 757.9,520.5 761.4,521.5 761.5,522.5 758.5,523.5 757.0,524.5 757.5,525.5 757.3,526.5 756.7,527.5 756.5,528.5 757.6,529.5 757.5,530.5 758.3,531.5 757.1,532.5 757.5,533.5 758.2,534.5 758.1,535.5 758.7,536.5 759.5,537.5 759.9,538.5 761.3,539.5 762.1,540.5 761.7,541.5 762.3,542.5 762.5,543.5 763.8,544.5 765.2,545.5 776.9,546.5 789.3,547.5 790.0,548.5 779.0,549.5 768.2,550.5 768.8,551.5 769.6,552.5 770.4,553.5 770.7,554.5 771.7,555.5 772.5,556.5 773.2,557.5 773.9,558.5 774.6,559.5 775.0,560.5 775.1,561.5 775.1,562.5 775.1,563.5 775.2,564.5 775.2,565.5 775.2,566.5 775.3,567.5 775.3,568.5 775.3,569.5 775.4,570.5 775.4,571.5 775.4,572.5 775.5,573.5 775.5,574.5 775.5,575.5 775.6,576.5 775.6,577.5 775.6,578.5 775.7,579.5 775.7,580.5 775.7,581.5 775.8,582.5 775.8,583.5 775.8,584.5 775.9,585.5 775.9,586.5 775.9,587.5 776.0,588.5 776.0,589.5 776.0,590.5 776.1,591.5 776.1,592.5 776.1,593.5 776.2,594.5 776.2,595.5 776.2,596.5 776.3,597.5 776.3,598.5 776.3,599.5 776.4,600.5 776.4,601.5 776.4,602.5 776.5,603.5 776.5,604.5 776.5,605.5 776.6,606.5 776.6,607.5 776.6,608.5 776.7,609.5 776.7,610.5 776.7,611.5 776.8,612.5 776.8,613.5 776.8,614.5 776.9,615.5 776.9,616.5 776.9,617.5 777.0,618.5 777.0,619.0 776.5,619.7 775.8,620.5 775.0,621.6 774.1,622.8 773.3,624.0 772.6,625.3 772.1,626.7 772.0,628.0 772.3,629.4 773.0,630.8 774.0,632.3 775.1,633.8 776.2,635.4 777.2,636.9 777.8,638.5 778.0,640.0 777.7,641.5 776.9,643.0 775.8,644.6 774.6,646.1 773.3,647.6 772.2,649.1 771.4,650.6 771.0,652.0 771.1,653.4 771.6,654.7 772.3,656.0 773.2,657.2 774.2,658.5 775.0,659.7 775.7,660.9 776.0,662.0 776.0,663.2 775.7,664.3 775.3,665.5 774.8,666.6 774.3,667.7 773.7,668.6 773.3,669.4 773.0,670.0" fill="none" stroke="#d96662" stroke-width="1.6" stroke-linejoin="round"/>
<polyline points="697.2,203.5 697.6,204.5 698.0,205.5 698.4,206.5 698.8,207.5 699.1,208.5 699.5,209.5 699.9,210.5 700.3,211.5 700.7,212.5 701.1,213.5 701.5,214.5 701.9,215.5 702.2,216.5 702.6,217.5 703.0,218.5 703.5,219.5 703.8,220.5 704.2,221.5 704.6,222.5 705.0,223.5 705.4,224.5 705.8,225.5 706.1,226.5 706.6,227.5 707.0,228.5 707.3,229.5 707.7,230.5 708.1,231.5 708.5,232.5 708.9,233.5 709.3,234.5 709.7,235.5 710.0,236.5 710.4,237.5 710.9,238.5 711.2,239.5 711.7,240.5 712.0,241.5 712.4,242.5 712.7,243.5 713.2,244.5 713.6,245.5 714.0,246.5 714.4,247.5 714.7,248.5 715.1,249.5 715.5,250.5 716.1,251.5 716.5,252.5 717.0,253.5 717.4,254.5 717.7,255.5 718.2,256.5 718.7,257.5 719.1,258.5 719.6,259.5 720.0,260.5 720.4,261.5 721.0,262.5 721.3,263.5 721.9,264.5 722.2,265.5 722.8,266.5 723.1,267.5 723.5,268.5 724.1,269.5 724.5,270.5 724.9,271.5 725.4,272.5 725.8,273.5 726.2,274.5 726.7,275.5 727.2,276.5 727.6,277.5 728.1,278.5 728.5,279.5 729.0,280.5 729.4,281.5 729.8,282.5 730.2,283.5 730.7,284.5 731.2,285.5 731.7,286.5 732.1,287.5 732.5,288.5 732.9,289.5 733.5,290.5 733.9,291.5 734.1,292.5 734.6,293.5 734.9,294.5 735.2,295.5 735.5,296.5 736.1,297.5 736.5,298.5 736.9,299.5 737.2,300.5 737.4,301.5 737.8,302.5 738.4,303.5 738.8,304.5 739.3,305.5 739.6,306.5 739.9,307.5 740.4,308.5 740.5,309.5 741.2,310.5 741.4,311.5 741.8,312.5 742.2,313.5 742.5,314.5 742.9,315.5 743.5,316.5 743.8,317.5 744.2,318.5 744.5,319.5 744.7,320.5 745.2,321.5 745.7,322.5 745.9,323.5 746.4,324.5 746.8,325.5 747.1,326.5 747.3,327.5 748.0,328.5 748.2,329.5 748.9,330.5 748.9,331.5 749.6,332.5 749.9,333.5 750.5,334.5 750.8,335.5 751.3,336.5 751.6,337.5 752.0,338.5 752.4,339.5 752.8,340.5 753.1,341.5 753.4,342.5 753.7,343.5 754.2,344.5 754.7,345.5 755.3,346.5 755.3,347.5 756.1,348.5 756.4,349.5 756.6,350.5 757.2,351.5 757.7,352.5 758.1,353.5 758.4,354.5 758.6,355.5 759.0,356.5 759.4,357.5 759.7,358.5 760.2,359.5 760.9,360.5 761.2,361.5 761.3,362.5 762.0,363.5 762.3,364.5 762.4,365.5 762.9,366.5 763.3,367.5 763.6,368.5 764.4,369.5 764.7,370.5 765.0,371.5 765.8,372.5 765.8,373.5 766.0,374.5 766.6,375.5 767.0,376.5 767.2,377.5 767.7,378.5 768.4,379.5 768.7,380.5 768.7,381.5 769.5,382.5 769.8,383.5 769.8,384.5 770.4,385.5 771.1,386.5 771.6,387.5 772.0,388.5 772.0,389.5 772.8,390.5 772.9,391.5 773.4,392.5 773.5,393.5 773.9,394.5 774.1,395.5 774.5,396.5 775.4,397.5 775.3,398.5 776.2,399.5 776.3,400.5 776.6,401.5 777.2,402.5 777.9,403.5 778.1,404.5 778.3,405.5 778.8,406.5 779.2,407.5 779.1,408.5 779.7,409.5 780.7,410.5 781.0,411.5 781.3,412.5 782.0,413.5 782.1,414.5 782.4,415.5 783.0,416.5 782.6,417.5 783.2,418.5 783.9,419.5 783.6,420.5 784.5,421.5 784.1,422.5 787.5,423.5 791.4,424.5 789.6,425.5 786.8,426.5 786.4,427.5 787.0,428.5 787.0,429.5 787.2,430.5 787.4,431.5 787.9,432.5 789.0,433.5 788.7,434.5 788.6,435.5 789.0,436.5 789.3,437.5 789.7,438.5 789.5,439.5 789.8,440.5 789.5,441.5 790.5,442.5 791.1,443.5 790.7,444.5 789.9,445.5 790.6,446.5 791.4,447.5 790.7,448.5 792.3,449.5 790.9,450.5 792.6,451.5 792.4,452.5 792.3,453.5 795.7,454.5 800.1,455.5 803.1,456.5 801.2,457.5 797.8,458.5 792.5,459.5 793.9,460.5 793.3,461.5 794.1,462.5 792.8,463.5 794.3,464.5 793.8,465.5 794.3,466.5 793.9,467.5 793.4,468.5 794.5,469.5 795.4,470.5 794.4,471.5 794.4,472.5 795.4,473.5 795.1,474.5 794.7,475.5 799.6,476.5 808.4,477.5 819.1,478.5 812.2,479.5 803.8,480.5 798.7,481.5 799.4,482.5 809.9,483.5 833.4,484.5 855.3,485.5 840.9,486.5 820.5,487.5 809.7,488.5 815.8,489.5 821.8,490.5 829.3,491.5 837.3,492.5 845.4,493.5 853.2,494.5 855.0,495.5 855.6,496.5 864.1,497.5 883.6,498.5 903.4,499.5 885.4,500.5 863.2,501.5 847.0,502.5 846.0,503.5 845.0,504.5 843.8,505.5 842.6,506.5 848.6,507.5 872.6,508.5 897.2,509.5 876.3,510.5 848.7,511.5 835.6,512.5 833.6,513.5 834.0,514.5 833.9,515.5 844.4,516.5 861.4,517.5 872.1,518.5 853.8,519.5 833.8,520.5 831.2,521.5 829.5,522.5 830.2,523.5 828.9,524.5 828.9,525.5 829.2,526.5 826.7,527.5 827.6,528.5 842.2,529.5 860.8,530.5 859.4,531.5 840.8,532.5 822.8,533.5 823.5,534.5 823.0,535.5 821.4,536.5 828.3,537.5 848.9,538.5 867.5,539.5 851.4,540.5 831.3,541.5 822.4,542.5 823.6,543.5 823.8,544.5 822.6,545.5 823.3,546.5 829.5,547.5 838.7,548.5 833.9,549.5 826.5,550.5 826.1,551.5 826.5,552.5 827.5,553.5 828.2,554.5 828.9,555.5 830.1,556.5 831.0,557.5 831.7,558.5 832.6,559.5 833.1,560.5 833.2,561.5 833.3,562.5 833.4,563.5 833.5,564.5 833.6,565.5 833.7,566.5 833.8,567.5 833.9,568.5 834.0,569.5 834.1,570.5 834.2,571.5 834.3,572.5 834.4,573.5 834.5,574.5 834.6,575.5 834.7,576.5 834.8,577.5 834.9,578.5 835.0,579.5 835.1,580.5 835.2,581.5 835.3,582.5 835.4,583.5 835.5,584.5 835.6,585.5 835.7,586.5 835.8,587.5 835.9,588.5 836.0,589.5 836.1,590.5 836.2,591.5 836.3,592.5 836.4,593.5 836.5,594.5 836.6,595.5 836.7,596.5 836.8,597.5 836.9,598.5 837.0,599.5 837.1,600.5 837.2,601.5 837.3,602.5 837.4,603.5 837.5,604.5 837.6,605.5 837.7,606.5 837.8,607.5 837.9,608.5 838.0,609.5 838.1,610.5 838.2,611.5 838.3,612.5 838.4,613.5 838.5,614.5 838.6,615.5 838.7,616.5 838.8,617.5 838.9,618.5 838.3,619.0 838.6,619.8 838.9,620.9 839.4,622.2 839.8,623.7 840.4,625.2 840.9,626.6 841.4,628.0 842.0,629.2 842.7,630.2 843.5,631.1 844.4,632.0 845.2,632.8 846.0,633.6 846.6,634.4 847.0,635.3 847.0,636.2 846.5,637.2 845.5,638.2 844.1,639.3 842.6,640.3 841.2,641.4 840.0,642.5 839.2,643.5 839.0,644.5 839.4,645.5 840.3,646.5 841.6,647.4 843.1,648.4 844.8,649.3 846.6,650.2 848.4,651.1 850.0,652.0 851.7,652.9 853.7,653.7 855.8,654.6 857.9,655.4 859.9,656.3 861.6,657.0 862.9,657.8 863.8,658.5 864.1,659.1 863.9,659.7 863.3,660.2 862.5,660.7 861.5,661.2 860.6,661.7 859.7,662.3 859.0,663.0 858.5,663.8 857.9,664.7 857.4,665.7 856.9,666.8 856.4,667.8 855.9,668.7 855.6,669.4 855.3,670.0" fill="none" stroke="#96e6b6" stroke-width="1.6" stroke-linejoin="round"/>
<polyline points="697.2,203.5 697.5,204.5 697.9,205.5 698.2,206.5 698.6,207.5 699.0,208.5 699.3,209.5 699.7,210.5 700.0,211.5 700.4,212.5 700.7,213.5 701.1,214.5 701.4,215.5 701.8,216.5 702.2,217.5 702.5,218.5 702.9,219.5 703.2,220.5 703.5,221.5 703.9,222.5 704.3,223.5 704.7,224.5 705.0,225.5 705.4,226.5 705.7,227.5 706.1,228.5 706.4,229.5 706.7,230.5 707.1,231.5 707.5,232.5 707.8,233.5 708.2,234.5 708.5,235.5 708.9,236.5 709.2,237.5 709.5,238.5 710.0,239.5 710.3,240.5 710.6,241.5 711.0,242.5 711.3,243.5 711.7,244.5 712.0,245.5 712.5,246.5 712.8,247.5 713.1,248.5 713.4,249.5 713.9,250.5 714.2,251.5 714.8,252.5 715.1,253.5 715.5,254.5 715.9,255.5 716.3,256.5 716.8,257.5 717.1,258.5 717.5,259.5 718.0,260.5 718.5,261.5 718.9,262.5 719.2,263.5 719.6,264.5 720.0,265.5 720.4,266.5 720.9,267.5 721.2,268.5 721.6,269.5 722.1,270.5 722.6,271.5 722.9,272.5 723.3,273.5 723.8,274.5 724.2,275.5 724.6,276.5 724.9,277.5 725.4,278.5 725.7,279.5 726.1,280.5 726.6,281.5 727.0,282.5 727.3,283.5 727.7,284.5 728.3,285.5 728.6,286.5 729.2,287.5 729.5,288.5 730.0,289.5 730.3,290.5 730.5,291.5 731.0,292.5 731.2,293.5 731.6,294.5 732.1,295.5 732.4,296.5 732.8,297.5 733.0,298.5 733.5,299.5 733.7,300.5 734.0,301.5 734.5,302.5 734.8,303.5 735.1,304.5 735.6,305.5 735.8,306.5 736.3,307.5 736.5,308.5 736.8,309.5 737.4,310.5 737.6,311.5 737.9,312.5 738.3,313.5 738.6,314.5 738.8,315.5 739.2,316.5 739.6,317.5 740.0,318.5 740.3,319.5 740.7,320.5 741.0,321.5 741.5,322.5 741.7,323.5 742.0,324.5 742.3,325.5 742.9,326.5 743.1,327.5 743.4,328.5 743.7,329.5 744.0,330.5 744.8,331.5 744.8,332.5 745.2,333.5 745.6,334.5 746.0,335.5 746.7,336.5 746.7,337.5 747.5,338.5 747.7,339.5 748.1,340.5 748.5,341.5 749.0,342.5 749.1,343.5 749.6,344.5 749.8,345.5 750.5,346.5 750.6,347.5 751.4,348.5 751.6,349.5 752.2,350.5 752.6,351.5 752.8,352.5 752.8,353.5 753.4,354.5 754.0,355.5 754.3,356.5 754.7,357.5 754.8,358.5 755.2,359.5 755.8,360.5 756.3,361.5 756.3,362.5 757.1,363.5 757.2,364.5 757.6,365.5 758.2,366.5 758.6,367.5 758.7,368.5 759.4,369.5 759.9,370.5 759.9,371.5 760.7,372.5 761.1,373.5 761.5,374.5 761.6,375.5 762.0,376.5 762.0,377.5 762.7,378.5 763.5,379.5 763.8,380.5 763.5,381.5 764.6,382.5 764.4,383.5 764.9,384.5 765.1,385.5 765.5,386.5 766.2,387.5 766.8,388.5 766.8,389.5 767.5,390.5 767.7,391.5 767.8,392.5 768.1,393.5 769.1,394.5 769.1,395.5 770.0,396.5 769.8,397.5 770.0,398.5 771.0,399.5 771.3,400.5 771.9,401.5 771.7,402.5 772.6,403.5 772.3,404.5 773.3,405.5 773.5,406.5 773.5,407.5 773.8,408.5 774.5,409.5 775.0,410.5 775.3,411.5 776.0,412.5 775.7,413.5 776.3,414.5 776.3,415.5 776.7,416.5 777.8,417.5 778.1,418.5 778.4,419.5 778.4,420.5 781.1,421.5 784.1,422.5 783.1,423.5 781.1,424.5 779.8,425.5 780.9,426.5 781.5,427.5 780.6,428.5 781.3,429.5 781.4,430.5 781.9,431.5 783.3,432.5 783.0,433.5 783.2,434.5 783.0,435.5 783.6,436.5 783.6,437.5 783.3,438.5 783.6,439.5 783.7,440.5 784.1,441.5 784.6,442.5 785.0,443.5 784.4,444.5 784.8,445.5 785.8,446.5 785.8,447.5 785.0,448.5 785.9,449.5 786.4,450.5 787.1,451.5 788.3,452.5 791.8,453.5 796.4,454.5 795.6,455.5 790.6,456.5 787.8,457.5 787.6,458.5 787.1,459.5 786.7,460.5 788.5,461.5 788.2,462.5 787.5,463.5 787.3,464.5 787.8,465.5 788.6,466.5 789.0,467.5 789.8,468.5 787.8,469.5 789.2,470.5 789.8,471.5 788.5,472.5 788.9,473.5 792.3,474.5 800.6,475.5 810.1,476.5 805.8,477.5 799.3,478.5 793.1,479.5 792.7,480.5 796.2,481.5 819.4,482.5 841.1,483.5 834.8,484.5 815.9,485.5 801.6,486.5 802.1,487.5 803.7,488.5 810.1,489.5 817.1,490.5 824.5,491.5 832.2,492.5 838.6,493.5 847.4,494.5 857.0,495.5 876.1,496.5 894.1,497.5 884.7,498.5 864.3,499.5 844.0,500.5 844.0,501.5 842.9,502.5 840.1,503.5 839.0,504.5 840.7,505.5 862.6,506.5 885.8,507.5 875.8,508.5 849.9,509.5 832.8,510.5 829.9,511.5 830.4,512.5 829.8,513.5 835.0,514.5 851.3,515.5 869.7,516.5 851.4,517.5 832.0,518.5 824.6,519.5 826.0,520.5 823.7,521.5 824.8,522.5 823.8,523.5 824.4,524.5 822.3,525.5 823.5,526.5 834.5,527.5 851.5,528.5 857.3,529.5 838.9,530.5 821.1,531.5 817.8,532.5 818.0,533.5 817.3,534.5 818.6,535.5 838.2,536.5 857.0,537.5 847.9,538.5 830.3,539.5 816.8,540.5 817.6,541.5 816.7,542.5 816.7,543.5 817.3,544.5 822.9,545.5 829.9,546.5 827.8,547.5 820.8,548.5 819.0,549.5 819.9,550.5 820.3,551.5 821.2,552.5 822.0,553.5 823.2,554.5 823.8,555.5 824.8,556.5 825.3,557.5 826.4,558.5 827.0,559.5 827.6,560.5 827.7,561.5 827.8,562.5 827.9,563.5 828.0,564.5 828.1,565.5 828.2,566.5 828.3,567.5 828.4,568.5 828.5,569.5 828.6,570.5 828.7,571.5 828.8,572.5 828.9,573.5 829.0,574.5 829.1,575.5 829.2,576.5 829.3,577.5 829.4,578.5 829.5,579.5 829.6,580.5 829.7,581.5 829.8,582.5 829.9,583.5 830.0,584.5 830.1,585.5 830.2,586.5 830.3,587.5 830.4,588.5 830.5,589.5 830.6,590.5 830.7,591.5 830.8,592.5 830.9,593.5 831.0,594.5 831.1,595.5 831.2,596.5 831.3,597.5 831.4,598.5 831.5,599.5 831.6,600.5 831.7,601.5 831.8,602.5 831.9,603.5 832.0,604.5 832.1,605.5 832.2,606.5 832.3,607.5 832.4,608.5 832.5,609.5 832.6,610.5 832.7,611.5 832.8,612.5 832.9,613.5 833.0,614.5 833.1,615.5 833.2,616.5 833.3,617.5 833.4,618.5 832.7,619.0 832.9,619.8 833.3,620.9 833.6,622.2 834.0,623.7 834.5,625.2 835.0,626.6 835.5,628.0 836.0,629.2 836.6,630.2 837.4,631.2 838.3,632.0 839.2,632.9 840.0,633.7 840.6,634.5 841.0,635.3 841.0,636.2 840.5,637.1 839.5,638.1 838.1,639.1 836.6,640.1 835.2,641.1 834.0,642.1 833.2,643.1 833.0,644.0 833.5,644.9 834.4,645.8 835.6,646.7 837.2,647.5 838.9,648.4 840.7,649.3 842.4,650.1 844.0,651.0 845.6,651.9 847.5,652.8 849.5,653.7 851.4,654.7 853.3,655.6 854.9,656.4 856.2,657.2 857.0,658.0 857.3,658.7 857.2,659.2 856.8,659.7 856.1,660.2 855.3,660.7 854.5,661.2 853.7,661.8 853.0,662.5 852.4,663.3 851.7,664.3 851.0,665.4 850.2,666.5 849.6,667.6 848.9,668.6 848.4,669.4 848.0,670.0" fill="none" stroke="#52d38a" stroke-width="1.6" stroke-linejoin="round"/>
<polyline points="697.2,203.5 697.5,204.5 697.8,205.5 698.1,206.5 698.4,207.5 698.8,208.5 699.1,209.5 699.4,210.5 699.7,211.5 700.0,212.5 700.3,213.5 700.7,214.5 701.0,215.5 701.3,216.5 701.6,217.5 701.9,218.5 702.3,219.5 702.6,220.5 702.9,221.5 703.2,222.5 703.5,223.5 703.9,224.5 704.2,225.5 704.5,226.5 704.8,227.5 705.2,228.5 705.5,229.5 705.8,230.5 706.1,231.5 706.5,232.5 706.8,233.5 707.1,234.5 707.3,235.5 707.7,236.5 708.1,237.5 708.4,238.5 708.6,239.5 709.0,240.5 709.3,241.5 709.6,242.5 710.0,243.5 710.3,244.5 710.6,245.5 710.8,246.5 711.2,247.5 711.6,248.5 711.8,249.5 712.2,250.5 712.6,251.5 712.9,252.5 713.4,253.5 713.7,254.5 714.0,255.5 714.5,256.5 714.9,257.5 715.1,258.5 715.7,259.5 715.9,260.5 716.3,261.5 716.6,262.5 717.0,263.5 717.5,264.5 717.7,265.5 718.2,266.5 718.7,267.5 719.0,268.5 719.2,269.5 719.6,270.5 720.1,271.5 720.4,272.5 720.9,273.5 721.2,274.5 721.6,275.5 721.9,276.5 722.2,277.5 722.7,278.5 723.1,279.5 723.4,280.5 723.9,281.5 724.2,282.5 724.5,283.5 724.8,284.5 725.2,285.5 725.6,286.5 726.0,287.5 726.3,288.5 726.9,289.5 727.1,290.5 727.4,291.5 727.8,292.5 728.1,293.5 728.4,294.5 728.7,295.5 729.1,296.5 729.3,297.5 729.7,298.5 729.9,299.5 730.2,300.5 730.5,301.5 730.9,302.5 731.2,303.5 731.5,304.5 731.9,305.5 732.2,306.5 732.3,307.5 732.6,308.5 733.0,309.5 733.3,310.5 733.8,311.5 734.1,312.5 734.2,313.5 734.8,314.5 735.1,315.5 735.3,316.5 735.6,317.5 735.8,318.5 736.3,319.5 736.4,320.5 736.8,321.5 737.2,322.5 737.4,323.5 737.9,324.5 738.0,325.5 738.3,326.5 738.8,327.5 738.9,328.5 739.3,329.5 739.7,330.5 739.9,331.5 740.3,332.5 740.9,333.5 741.4,334.5 741.4,335.5 741.8,336.5 742.1,337.5 742.5,338.5 742.9,339.5 743.5,340.5 743.8,341.5 744.1,342.5 744.5,343.5 744.9,344.5 745.2,345.5 745.8,346.5 745.9,347.5 746.4,348.5 746.8,349.5 747.0,350.5 747.5,351.5 747.8,352.5 748.4,353.5 748.5,354.5 748.9,355.5 749.2,356.5 749.6,357.5 750.2,358.5 750.4,359.5 751.1,360.5 751.3,361.5 751.4,362.5 752.0,363.5 752.7,364.5 753.0,365.5 753.5,366.5 753.3,367.5 753.7,368.5 754.1,369.5 754.8,370.5 755.3,371.5 755.2,372.5 755.5,373.5 756.2,374.5 756.4,375.5 756.8,376.5 757.2,377.5 758.0,378.5 757.8,379.5 758.6,380.5 758.5,381.5 759.2,382.5 759.5,383.5 759.5,384.5 760.6,385.5 760.7,386.5 761.0,387.5 761.7,388.5 761.8,389.5 761.7,390.5 762.3,391.5 762.6,392.5 763.6,393.5 763.9,394.5 764.1,395.5 764.6,396.5 764.6,397.5 764.6,398.5 765.8,399.5 766.0,400.5 766.5,401.5 766.7,402.5 766.7,403.5 767.3,404.5 767.2,405.5 768.4,406.5 768.6,407.5 768.4,408.5 769.1,409.5 769.2,410.5 769.7,411.5 770.3,412.5 770.3,413.5 770.8,414.5 771.7,415.5 772.0,416.5 772.2,417.5 772.7,418.5 773.9,419.5 777.6,420.5 778.0,421.5 775.7,422.5 773.4,423.5 774.7,424.5 774.9,425.5 775.1,426.5 775.4,427.5 775.9,428.5 776.5,429.5 776.4,430.5 777.1,431.5 776.9,432.5 777.9,433.5 777.7,434.5 778.3,435.5 777.6,436.5 778.7,437.5 778.2,438.5 779.3,439.5 779.2,440.5 778.2,441.5 779.1,442.5 779.1,443.5 779.0,444.5 779.3,445.5 779.1,446.5 781.0,447.5 779.6,448.5 781.3,449.5 782.8,450.5 785.4,451.5 788.9,452.5 790.1,453.5 786.1,454.5 782.3,455.5 781.4,456.5 781.9,457.5 780.8,458.5 782.2,459.5 781.4,460.5 782.3,461.5 783.0,462.5 783.1,463.5 782.1,464.5 783.4,465.5 782.8,466.5 782.9,467.5 783.3,468.5 783.1,469.5 783.5,470.5 784.6,471.5 784.4,472.5 791.6,473.5 799.4,474.5 801.3,475.5 792.3,476.5 785.9,477.5 786.5,478.5 787.7,479.5 806.9,480.5 826.8,481.5 827.3,482.5 809.7,483.5 792.2,484.5 795.0,485.5 794.7,486.5 797.8,487.5 798.5,488.5 803.6,489.5 811.2,490.5 817.9,491.5 825.4,492.5 836.0,493.5 863.4,494.5 884.1,495.5 883.3,496.5 863.8,497.5 843.3,498.5 839.8,499.5 839.7,500.5 838.0,501.5 836.0,502.5 834.8,503.5 853.6,504.5 874.9,505.5 873.6,506.5 849.3,507.5 829.2,508.5 826.4,509.5 826.6,510.5 826.0,511.5 828.0,512.5 842.8,513.5 859.3,514.5 849.0,515.5 831.3,516.5 821.2,517.5 820.0,518.5 819.7,519.5 820.8,520.5 819.1,521.5 819.4,522.5 819.1,523.5 816.9,524.5 827.1,525.5 842.5,526.5 854.3,527.5 837.8,528.5 820.9,529.5 814.0,530.5 812.9,531.5 812.5,532.5 811.5,533.5 828.3,534.5 846.6,535.5 844.2,536.5 828.0,537.5 811.8,538.5 810.1,539.5 812.4,540.5 811.7,541.5 810.9,542.5 816.5,543.5 823.7,544.5 822.8,545.5 816.2,546.5 812.2,547.5 812.2,548.5 812.9,549.5 813.9,550.5 815.5,551.5 816.2,552.5 816.9,553.5 817.3,554.5 818.2,555.5 818.9,556.5 820.0,557.5 820.9,558.5 821.6,559.5 822.1,560.5 822.2,561.5 822.3,562.5 822.4,563.5 822.5,564.5 822.6,565.5 822.7,566.5 822.8,567.5 822.9,568.5 823.0,569.5 823.1,570.5 823.2,571.5 823.3,572.5 823.4,573.5 823.5,574.5 823.6,575.5 823.7,576.5 823.8,577.5 823.9,578.5 824.0,579.5 824.1,580.5 824.2,581.5 824.3,582.5 824.4,583.5 824.5,584.5 824.6,585.5 824.7,586.5 824.8,587.5 824.9,588.5 825.0,589.5 825.1,590.5 825.2,591.5 825.3,592.5 825.4,593.5 825.5,594.5 825.6,595.5 825.7,596.5 825.8,597.5 825.9,598.5 826.0,599.5 826.1,600.5 826.2,601.5 826.3,602.5 826.4,603.5 826.5,604.5 826.6,605.5 826.7,606.5 826.8,607.5 826.9,608.5 827.0,609.5 827.1,610.5 827.2,611.5 827.3,612.5 827.4,613.5 827.5,614.5 827.6,615.5 827.7,616.5 827.8,617.5 827.9,618.5 826.3,619.0 826.6,619.8 826.9,620.9 827.3,622.2 827.7,623.7 828.2,625.2 828.7,626.6 829.3,628.0 829.8,629.2 830.4,630.2 831.2,631.2 832.1,632.1 833.0,632.9 833.8,633.7 834.4,634.5 834.8,635.3 834.8,636.2 834.3,637.1 833.3,638.0 832.0,638.9 830.5,639.7 829.1,640.6 827.9,641.5 827.1,642.4 827.0,643.3 827.5,644.2 828.4,645.1 829.8,646.0 831.4,646.8 833.1,647.7 834.9,648.6 836.7,649.5 838.3,650.4 839.9,651.3 841.8,652.2 843.7,653.2 845.6,654.1 847.4,655.0 849.0,655.9 850.2,656.8 851.0,657.5 851.3,658.1 851.2,658.7 850.7,659.1 850.0,659.5 849.2,660.0 848.3,660.4 847.5,661.0 846.8,661.7 846.1,662.6 845.4,663.7 844.6,664.9 843.7,666.1 843.0,667.3 842.2,668.4 841.6,669.3 841.2,670.0" fill="none" stroke="#2fae62" stroke-width="1.6" stroke-linejoin="round"/>
<polyline points="700.3,203.5 700.9,204.5 701.4,205.5 702.0,206.5 702.6,207.5 703.1,208.5 703.7,209.5 704.3,210.5 704.9,211.5 705.4,212.5 706.0,213.5 706.6,214.5 707.1,215.5 707.7,216.5 708.3,217.5 708.9,218.5 709.4,219.5 710.0,220.5 710.6,221.5 711.1,222.5 711.7,223.5 712.3,224.5 712.8,225.5 713.4,226.5 714.0,227.5 714.6,228.5 715.2,229.5 715.7,230.5 716.3,231.5 716.9,232.5 717.4,233.5 718.0,234.5 718.6,235.5 719.2,236.5 719.7,237.5 720.3,238.5 720.9,239.5 721.5,240.5 722.0,241.5 722.6,242.5 723.1,243.5 723.7,244.5 724.2,245.5 724.8,246.5 725.5,247.5 726.0,248.5 726.6,249.5 727.2,250.5 727.8,251.5 728.4,252.5 728.9,253.5 729.5,254.5 730.1,255.5 730.8,256.5 731.4,257.5 732.0,258.5 732.6,259.5 733.2,260.5 733.8,261.5 734.4,262.5 734.9,263.5 735.6,264.5 736.2,265.5 736.8,266.5 737.4,267.5 738.0,268.5 738.6,269.5 739.3,270.5 739.9,271.5 740.5,272.5 741.0,273.5 741.7,274.5 742.2,275.5 742.9,276.5 743.4,277.5 744.0,278.5 744.7,279.5 745.2,280.5 745.8,281.5 746.4,282.5 747.0,283.5 747.7,284.5 748.3,285.5 748.9,286.5 749.5,287.5 750.2,288.5 750.7,289.5 751.2,290.5 751.9,291.5 752.4,292.5 753.1,293.5 753.6,294.5 754.2,295.5 754.6,296.5 755.2,297.5 756.0,298.5 756.4,299.5 757.0,300.5 757.6,301.5 758.2,302.5 758.8,303.5 759.4,304.5 759.9,305.5 760.4,306.5 761.1,307.5 761.6,308.5 762.2,309.5 762.7,310.5 763.3,311.5 763.9,312.5 764.6,313.5 765.1,314.5 765.6,315.5 766.3,316.5 766.9,317.5 767.4,318.5 767.9,319.5 768.4,320.5 769.0,321.5 769.7,322.5 770.2,323.5 771.0,324.5 771.5,325.5 771.9,326.5 772.6,327.5 773.1,328.5 773.6,329.5 774.2,330.5 774.8,331.5 775.4,332.5 775.8,333.5 776.4,334.5 777.0,335.5 777.4,336.5 777.8,337.5 778.5,338.5 779.0,339.5 779.3,340.5 780.0,341.5 780.4,342.5 781.0,343.5 781.6,344.5 782.0,345.5 782.6,346.5 783.1,347.5 783.6,348.5 784.1,349.5 784.7,350.5 785.0,351.5 785.5,352.5 786.1,353.5 786.7,354.5 787.2,355.5 787.6,356.5 788.3,357.5 788.9,358.5 789.3,359.5 789.8,360.5 790.2,361.5 790.8,362.5 791.5,363.5 791.8,364.5 792.4,365.5 792.9,366.5 793.3,367.5 793.9,368.5 794.4,369.5 795.1,370.5 795.5,371.5 795.9,372.5 796.7,373.5 797.2,374.5 797.7,375.5 798.3,376.5 798.9,377.5 799.6,378.5 800.1,379.5 801.0,380.5 801.8,381.5 802.5,382.5 803.2,383.5 804.2,384.5 804.6,385.5 805.4,386.5 806.0,387.5 807.2,388.5 807.6,389.5 808.3,390.5 809.1,391.5 810.2,392.5 810.6,393.5 812.4,394.5 815.3,395.5 819.5,396.5 822.2,397.5 819.7,398.5 817.6,399.5 816.3,400.5 816.6,401.5 816.9,402.5 818.2,403.5 818.2,404.5 819.1,405.5 820.1,406.5 820.4,407.5 821.2,408.5 821.6,409.5 822.9,410.5 823.2,411.5 823.2,412.5 824.7,413.5 828.4,414.5 834.2,415.5 838.7,416.5 836.0,417.5 831.8,418.5 828.2,419.5 827.3,420.5 828.5,421.5 833.6,422.5 839.4,423.5 845.3,424.5 840.0,425.5 835.0,426.5 831.1,427.5 830.5,428.5 830.0,429.5 830.7,430.5 831.6,431.5 832.1,432.5 833.0,433.5 831.9,434.5 837.9,435.5 844.4,436.5 851.2,437.5 847.6,438.5 842.1,439.5 835.8,440.5 835.9,441.5 834.6,442.5 834.7,443.5 833.3,444.5 833.7,445.5 833.5,446.5 832.6,447.5 832.9,448.5 832.5,449.5 831.6,450.5 834.7,451.5 839.3,452.5 844.0,453.5 838.9,454.5 833.8,455.5 828.8,456.5 826.6,457.5 827.2,458.5 825.8,459.5 826.8,460.5 827.8,461.5 829.8,462.5 831.9,463.5 834.4,464.5 835.8,465.5 837.1,466.5 839.6,467.5 842.1,468.5 842.7,469.5 844.9,470.5 847.4,471.5 849.0,472.5 851.2,473.5 853.4,474.5 852.6,475.5 853.9,476.5 854.5,477.5 854.3,478.5 860.1,479.5 867.6,480.5 874.5,481.5 869.5,482.5 868.7,483.5 869.4,484.5 874.8,485.5 875.0,486.5 872.5,487.5 872.7,488.5 873.4,489.5 877.4,490.5 879.0,491.5 881.2,492.5 884.2,493.5 886.4,494.5 887.6,495.5 902.8,496.5 933.7,497.5 963.4,498.5 941.0,499.5 937.8,500.5 997.9,501.5 1081.0,502.5 1016.6,503.5 936.6,504.5 896.3,505.5 897.0,506.5 911.7,507.5 958.4,508.5 1005.8,509.5 970.3,510.5 924.9,511.5 903.6,512.5 903.8,513.5 904.9,514.5 905.8,515.5 919.2,516.5 943.7,517.5 957.4,518.5 933.8,519.5 911.1,520.5 906.6,521.5 905.6,522.5 913.4,523.5 939.2,524.5 957.5,525.5 932.8,526.5 906.4,527.5 902.7,528.5 915.8,529.5 931.7,530.5 930.2,531.5 909.6,532.5 890.4,533.5 888.0,534.5 883.4,535.5 895.1,536.5 916.6,537.5 915.9,538.5 881.7,539.5 865.2,540.5 891.7,541.5 914.6,542.5 890.8,543.5 867.5,544.5 868.6,545.5 869.3,546.5 871.7,547.5 873.3,548.5 879.5,549.5 887.0,550.5 888.2,551.5 885.1,552.5 884.1,553.5 886.6,554.5 888.7,555.5 890.8,556.5 892.7,557.5 894.8,558.5 896.9,559.5 898.2,560.5 898.5,561.5 898.9,562.5 899.2,563.5 899.5,564.5 899.9,565.5 900.2,566.5 900.6,567.5 900.9,568.5 901.2,569.5 901.6,570.5 901.9,571.5 902.3,572.5 902.6,573.5 902.9,574.5 903.3,575.5 903.6,576.5 904.0,577.5 904.3,578.5 904.6,579.5 905.0,580.5 905.3,581.5 905.7,582.5 906.0,583.5 906.3,584.5 906.7,585.5 907.0,586.5 907.4,587.5 907.7,588.5 908.0,589.5 908.4,590.5 908.7,591.5 909.1,592.5 909.4,593.5 909.7,594.5 910.1,595.5 910.4,596.5 910.8,597.5 911.1,598.5 911.4,599.5 911.8,600.5 912.1,601.5 912.5,602.5 912.8,603.5 913.1,604.5 913.5,605.5 913.8,606.5 914.2,607.5 914.5,608.5 914.8,609.5 915.2,610.5 915.5,611.5 915.9,612.5 916.2,613.5 916.6,614.5 916.9,615.5 917.2,616.5 917.6,617.5 917.9,618.5 917.6,619.0 917.1,619.4 916.4,620.0 915.4,620.6 914.4,621.3 913.6,622.1 913.2,623.0 913.2,624.0 914.0,625.0 915.8,626.2 918.6,627.5 922.0,628.9 925.8,630.4 929.4,632.0 932.5,633.5 934.9,634.9 936.0,636.2 935.5,637.4 933.6,638.5 930.7,639.6 927.5,640.6 924.3,641.6 921.7,642.6 920.2,643.7 920.4,644.7 922.5,645.8 926.3,646.9 931.1,647.9 936.6,649.0 942.2,650.1 947.3,651.2 951.6,652.2 954.4,653.2 955.8,654.1 956.1,655.0 955.7,655.9 954.8,656.7 953.6,657.5 952.6,658.4 951.8,659.3 951.6,660.3 951.9,661.5 952.6,662.8 953.4,664.2 954.3,665.6 955.2,667.0 956.1,668.2 956.8,669.2 957.3,670.0" fill="none" stroke="#97a9c9" stroke-width="1.7" stroke-linejoin="round"/>
<polyline points="700.3,203.5 700.8,204.5 701.3,205.5 701.8,206.5 702.3,207.5 702.9,208.5 703.4,209.5 703.9,210.5 704.4,211.5 704.9,212.5 705.5,213.5 706.0,214.5 706.5,215.5 707.0,216.5 707.5,217.5 708.1,218.5 708.6,219.5 709.1,220.5 709.6,221.5 710.2,222.5 710.7,223.5 711.2,224.5 711.7,225.5 712.2,226.5 712.7,227.5 713.2,228.5 713.8,229.5 714.3,230.5 714.8,231.5 715.3,232.5 715.8,233.5 716.4,234.5 716.9,235.5 717.4,236.5 718.0,237.5 718.5,238.5 719.0,239.5 719.5,240.5 720.0,241.5 720.5,242.5 721.1,243.5 721.6,244.5 722.1,245.5 722.6,246.5 723.1,247.5 723.6,248.5 724.2,249.5 724.7,250.5 725.2,251.5 725.8,252.5 726.3,253.5 726.9,254.5 727.5,255.5 728.0,256.5 728.6,257.5 729.2,258.5 729.6,259.5 730.2,260.5 730.8,261.5 731.3,262.5 731.9,263.5 732.5,264.5 733.0,265.5 733.6,266.5 734.1,267.5 734.6,268.5 735.1,269.5 735.8,270.5 736.2,271.5 736.9,272.5 737.5,273.5 738.0,274.5 738.5,275.5 739.1,276.5 739.5,277.5 740.1,278.5 740.6,279.5 741.3,280.5 741.9,281.5 742.3,282.5 742.9,283.5 743.5,284.5 744.1,285.5 744.6,286.5 745.0,287.5 745.6,288.5 746.1,289.5 746.9,290.5 747.4,291.5 747.7,292.5 748.4,293.5 749.0,294.5 749.5,295.5 749.9,296.5 750.5,297.5 750.9,298.5 751.4,299.5 751.9,300.5 752.4,301.5 753.2,302.5 753.6,303.5 754.2,304.5 754.6,305.5 755.2,306.5 755.8,307.5 756.2,308.5 756.8,309.5 757.1,310.5 757.9,311.5 758.2,312.5 758.9,313.5 759.3,314.5 760.0,315.5 760.3,316.5 760.9,317.5 761.5,318.5 762.0,319.5 762.5,320.5 763.0,321.5 763.7,322.5 764.1,323.5 764.5,324.5 765.1,325.5 765.6,326.5 766.3,327.5 766.6,328.5 767.3,329.5 767.7,330.5 768.2,331.5 768.7,332.5 769.4,333.5 769.9,334.5 770.2,335.5 770.7,336.5 771.2,337.5 771.9,338.5 772.1,339.5 772.6,340.5 773.1,341.5 773.8,342.5 774.1,343.5 774.7,344.5 775.3,345.5 775.8,346.5 776.2,347.5 776.9,348.5 777.4,349.5 777.8,350.5 778.1,351.5 778.6,352.5 779.3,353.5 779.6,354.5 780.3,355.5 780.6,356.5 781.3,357.5 781.8,358.5 782.3,359.5 782.8,360.5 783.2,361.5 783.7,362.5 784.2,363.5 784.7,364.5 785.2,365.5 785.8,366.5 786.1,367.5 786.7,368.5 787.1,369.5 787.8,370.5 788.2,371.5 788.5,372.5 789.1,373.5 789.7,374.5 790.3,375.5 791.0,376.5 791.5,377.5 792.4,378.5 792.9,379.5 793.3,380.5 794.3,381.5 794.8,382.5 795.5,383.5 796.3,384.5 796.7,385.5 797.4,386.5 798.5,387.5 798.7,388.5 799.8,389.5 800.2,390.5 800.8,391.5 801.2,392.5 804.6,393.5 808.4,394.5 812.0,395.5 809.8,396.5 807.6,397.5 805.7,398.5 805.8,399.5 807.0,400.5 807.1,401.5 807.6,402.5 808.8,403.5 808.8,404.5 809.5,405.5 810.2,406.5 810.9,407.5 811.1,408.5 811.5,409.5 812.2,410.5 813.3,411.5 816.9,412.5 821.4,413.5 825.5,414.5 824.9,415.5 821.3,416.5 816.7,417.5 816.2,418.5 817.5,419.5 821.2,420.5 826.1,421.5 831.5,422.5 830.3,423.5 825.1,424.5 819.8,425.5 818.2,426.5 819.6,427.5 818.8,428.5 819.8,429.5 819.8,430.5 820.6,431.5 820.5,432.5 824.5,433.5 831.2,434.5 836.5,435.5 835.7,436.5 830.7,437.5 824.3,438.5 823.4,439.5 823.8,440.5 823.8,441.5 824.1,442.5 822.2,443.5 821.7,444.5 822.6,445.5 822.0,446.5 820.3,447.5 820.1,448.5 823.5,449.5 827.9,450.5 830.3,451.5 828.4,452.5 824.3,453.5 818.3,454.5 816.3,455.5 816.7,456.5 815.8,457.5 814.1,458.5 814.1,459.5 814.7,460.5 815.9,461.5 818.2,462.5 819.3,463.5 822.2,464.5 823.8,465.5 825.1,466.5 827.0,467.5 830.0,468.5 831.1,469.5 832.8,470.5 835.6,471.5 836.3,472.5 839.3,473.5 840.2,474.5 841.1,475.5 840.6,476.5 846.1,477.5 852.7,478.5 858.8,479.5 856.9,480.5 852.9,481.5 851.6,482.5 856.3,483.5 856.7,484.5 856.6,485.5 855.8,486.5 857.1,487.5 858.0,488.5 861.5,489.5 864.4,490.5 866.7,491.5 869.0,492.5 871.6,493.5 881.5,494.5 911.2,495.5 941.7,496.5 929.5,497.5 910.2,498.5 963.6,499.5 1041.9,500.5 1012.9,501.5 935.6,502.5 881.0,503.5 881.9,504.5 886.6,505.5 931.1,506.5 977.0,507.5 959.6,508.5 917.7,509.5 888.0,510.5 889.4,511.5 889.6,512.5 892.1,513.5 900.8,514.5 923.2,515.5 944.9,516.5 923.1,517.5 902.1,518.5 893.4,519.5 892.2,520.5 894.6,521.5 918.5,522.5 943.6,523.5 923.4,524.5 900.2,525.5 893.4,526.5 903.1,527.5 918.8,528.5 924.2,529.5 903.5,530.5 883.4,531.5 878.7,532.5 877.1,533.5 885.7,534.5 907.2,535.5 917.7,536.5 884.5,537.5 855.8,538.5 873.6,539.5 894.8,540.5 877.1,541.5 855.9,542.5 851.0,543.5 851.8,544.5 853.3,545.5 856.2,546.5 860.8,547.5 867.4,548.5 870.9,549.5 867.9,550.5 866.7,551.5 868.0,552.5 870.3,553.5 872.2,554.5 874.3,555.5 876.4,556.5 878.7,557.5 880.8,558.5 883.0,559.5 884.2,560.5 884.5,561.5 884.8,562.5 885.2,563.5 885.5,564.5 885.8,565.5 886.2,566.5 886.5,567.5 886.8,568.5 887.1,569.5 887.5,570.5 887.8,571.5 888.1,572.5 888.5,573.5 888.8,574.5 889.1,575.5 889.5,576.5 889.8,577.5 890.1,578.5 890.5,579.5 890.8,580.5 891.1,581.5 891.5,582.5 891.8,583.5 892.1,584.5 892.4,585.5 892.8,586.5 893.1,587.5 893.4,588.5 893.8,589.5 894.1,590.5 894.4,591.5 894.8,592.5 895.1,593.5 895.4,594.5 895.8,595.5 896.1,596.5 896.4,597.5 896.8,598.5 897.1,599.5 897.4,600.5 897.7,601.5 898.1,602.5 898.4,603.5 898.7,604.5 899.1,605.5 899.4,606.5 899.7,607.5 900.1,608.5 900.4,609.5 900.7,610.5 901.1,611.5 901.4,612.5 901.7,613.5 902.1,614.5 902.4,615.5 902.7,616.5 903.0,617.5 903.4,618.5 904.9,619.0 904.4,619.4 903.6,620.0 902.6,620.6 901.6,621.3 900.7,622.1 900.2,623.0 900.3,624.0 901.0,625.0 902.8,626.2 905.7,627.5 909.2,629.0 913.0,630.5 916.7,632.1 919.9,633.6 922.2,635.0 923.3,636.2 922.7,637.3 920.7,638.2 917.8,639.1 914.3,639.9 911.0,640.7 908.1,641.5 906.3,642.4 906.0,643.3 907.5,644.3 910.3,645.4 914.2,646.4 918.6,647.5 923.1,648.7 927.4,649.7 930.9,650.8 933.2,651.8 934.3,652.7 934.7,653.6 934.4,654.4 933.8,655.2 933.0,656.0 932.2,656.9 931.8,657.8 931.8,658.9 932.3,660.2 933.1,661.7 934.1,663.3 935.2,664.9 936.3,666.5 937.3,667.9 938.2,669.1 938.8,670.0" fill="none" stroke="#6a80a8" stroke-width="1.7" stroke-linejoin="round"/>
<polyline points="700.2,203.5 700.7,204.5 701.2,205.5 701.6,206.5 702.1,207.5 702.6,208.5 703.0,209.5 703.5,210.5 704.0,211.5 704.5,212.5 704.9,213.5 705.4,214.5 705.9,215.5 706.3,216.5 706.8,217.5 707.3,218.5 707.7,219.5 708.2,220.5 708.7,221.5 709.1,222.5 709.6,223.5 710.1,224.5 710.6,225.5 711.0,226.5 711.4,227.5 711.9,228.5 712.4,229.5 712.9,230.5 713.4,231.5 713.8,232.5 714.3,233.5 714.8,234.5 715.2,235.5 715.6,236.5 716.1,237.5 716.6,238.5 717.1,239.5 717.6,240.5 718.0,241.5 718.5,242.5 718.9,243.5 719.5,244.5 719.9,245.5 720.4,246.5 720.8,247.5 721.3,248.5 721.8,249.5 722.3,250.5 722.7,251.5 723.3,252.5 723.8,253.5 724.3,254.5 724.7,255.5 725.3,256.5 725.8,257.5 726.3,258.5 726.7,259.5 727.2,260.5 727.8,261.5 728.3,262.5 728.7,263.5 729.3,264.5 729.7,265.5 730.2,266.5 730.8,267.5 731.3,268.5 731.7,269.5 732.2,270.5 732.7,271.5 733.3,272.5 733.8,273.5 734.3,274.5 734.7,275.5 735.3,276.5 735.8,277.5 736.2,278.5 736.7,279.5 737.3,280.5 737.8,281.5 738.3,282.5 738.7,283.5 739.2,284.5 739.8,285.5 740.2,286.5 740.7,287.5 741.3,288.5 741.7,289.5 742.3,290.5 742.6,291.5 743.1,292.5 743.6,293.5 744.1,294.5 744.6,295.5 745.1,296.5 745.6,297.5 746.0,298.5 746.6,299.5 747.0,300.5 747.5,301.5 748.0,302.5 748.5,303.5 748.9,304.5 749.3,305.5 749.9,306.5 750.2,307.5 750.9,308.5 751.3,309.5 751.8,310.5 752.2,311.5 752.7,312.5 753.2,313.5 753.6,314.5 754.0,315.5 754.5,316.5 755.1,317.5 755.5,318.5 756.0,319.5 756.6,320.5 756.9,321.5 757.3,322.5 757.8,323.5 758.4,324.5 759.0,325.5 759.5,326.5 759.7,327.5 760.4,328.5 760.8,329.5 761.3,330.5 761.8,331.5 762.1,332.5 762.7,333.5 763.2,334.5 763.5,335.5 764.2,336.5 764.5,337.5 765.1,338.5 765.5,339.5 766.0,340.5 766.6,341.5 766.9,342.5 767.5,343.5 768.1,344.5 768.5,345.5 768.8,346.5 769.3,347.5 769.8,348.5 770.2,349.5 770.9,350.5 771.3,351.5 771.8,352.5 772.1,353.5 772.8,354.5 773.1,355.5 773.7,356.5 774.3,357.5 774.7,358.5 775.2,359.5 775.4,360.5 776.0,361.5 776.4,362.5 776.9,363.5 777.6,364.5 778.0,365.5 778.5,366.5 779.0,367.5 779.2,368.5 780.0,369.5 780.2,370.5 780.9,371.5 781.2,372.5 781.6,373.5 782.1,374.5 782.8,375.5 783.3,376.5 784.0,377.5 784.6,378.5 785.5,379.5 786.0,380.5 786.5,381.5 787.0,382.5 787.9,383.5 788.5,384.5 789.1,385.5 789.5,386.5 790.0,387.5 790.5,388.5 791.2,389.5 792.2,390.5 794.7,391.5 797.8,392.5 801.0,393.5 800.1,394.5 797.7,395.5 796.2,396.5 796.0,397.5 796.3,398.5 796.8,399.5 797.7,400.5 798.6,401.5 798.4,402.5 799.8,403.5 799.6,404.5 800.3,405.5 800.2,406.5 801.0,407.5 801.8,408.5 801.9,409.5 804.8,410.5 808.6,411.5 814.2,412.5 814.0,413.5 810.6,414.5 807.1,415.5 805.4,416.5 805.6,417.5 809.3,418.5 813.7,419.5 818.8,420.5 818.8,421.5 814.3,422.5 810.2,423.5 807.7,424.5 807.3,425.5 807.3,426.5 807.9,427.5 808.9,428.5 808.3,429.5 808.7,430.5 812.0,431.5 817.8,432.5 824.0,433.5 824.3,434.5 817.9,435.5 813.2,436.5 811.9,437.5 811.5,438.5 811.9,439.5 812.3,440.5 812.6,441.5 812.3,442.5 811.8,443.5 809.8,444.5 810.6,445.5 809.9,446.5 811.7,447.5 815.7,448.5 818.2,449.5 817.8,450.5 813.7,451.5 808.8,452.5 805.5,453.5 805.6,454.5 804.8,455.5 804.1,456.5 803.5,457.5 802.5,458.5 802.0,459.5 802.1,460.5 803.8,461.5 806.4,462.5 807.9,463.5 809.0,464.5 811.8,465.5 813.4,466.5 815.7,467.5 816.8,468.5 819.7,469.5 820.3,470.5 822.4,471.5 824.1,472.5 826.9,473.5 827.5,474.5 830.8,475.5 837.6,476.5 843.8,477.5 843.5,478.5 840.3,479.5 837.3,480.5 839.0,481.5 839.6,482.5 839.0,483.5 837.2,484.5 839.5,485.5 840.4,486.5 844.1,487.5 847.0,488.5 848.5,489.5 851.6,490.5 853.6,491.5 858.7,492.5 888.4,493.5 917.5,494.5 919.2,495.5 893.1,496.5 933.9,497.5 1006.1,498.5 1005.3,499.5 932.1,500.5 867.2,501.5 867.5,502.5 867.3,503.5 907.3,504.5 948.3,505.5 950.6,506.5 909.4,507.5 872.1,508.5 874.3,509.5 875.4,510.5 876.7,511.5 881.5,512.5 903.3,513.5 925.1,514.5 913.4,515.5 892.4,516.5 880.5,517.5 879.5,518.5 879.6,519.5 900.8,520.5 922.2,521.5 913.7,522.5 890.5,523.5 880.0,524.5 887.9,525.5 904.9,526.5 915.9,527.5 896.8,528.5 877.1,529.5 870.8,530.5 867.4,531.5 870.7,532.5 894.5,533.5 915.8,534.5 887.1,535.5 857.0,536.5 866.3,537.5 881.3,538.5 867.8,539.5 842.0,540.5 832.2,541.5 833.7,542.5 837.2,543.5 839.0,544.5 841.3,545.5 847.7,546.5 853.3,547.5 850.6,548.5 848.6,549.5 849.9,550.5 852.1,551.5 854.4,552.5 856.9,553.5 858.4,554.5 860.8,555.5 862.7,556.5 864.7,557.5 866.9,558.5 869.0,559.5 870.2,560.5 870.5,561.5 870.8,562.5 871.1,563.5 871.4,564.5 871.8,565.5 872.1,566.5 872.4,567.5 872.7,568.5 873.1,569.5 873.4,570.5 873.7,571.5 874.0,572.5 874.3,573.5 874.7,574.5 875.0,575.5 875.3,576.5 875.6,577.5 876.0,578.5 876.3,579.5 876.6,580.5 876.9,581.5 877.2,582.5 877.6,583.5 877.9,584.5 878.2,585.5 878.5,586.5 878.9,587.5 879.2,588.5 879.5,589.5 879.8,590.5 880.1,591.5 880.5,592.5 880.8,593.5 881.1,594.5 881.4,595.5 881.8,596.5 882.1,597.5 882.4,598.5 882.7,599.5 883.0,600.5 883.4,601.5 883.7,602.5 884.0,603.5 884.3,604.5 884.7,605.5 885.0,606.5 885.3,607.5 885.6,608.5 885.9,609.5 886.3,610.5 886.6,611.5 886.9,612.5 887.2,613.5 887.6,614.5 887.9,615.5 888.2,616.5 888.5,617.5 888.8,618.5 892.0,619.0 891.6,619.4 890.8,620.0 889.9,620.7 889.0,621.5 888.3,622.3 887.9,623.2 887.9,624.1 888.6,625.0 890.3,625.9 892.9,626.9 896.2,627.9 899.7,629.0 903.1,630.0 906.1,631.1 908.1,632.3 909.0,633.4 908.3,634.6 906.1,635.8 903.0,637.1 899.4,638.4 896.0,639.7 893.0,641.0 891.1,642.2 890.7,643.3 892.1,644.3 895.0,645.2 898.9,646.1 903.4,646.9 907.9,647.8 912.1,648.6 915.5,649.5 917.6,650.4 918.3,651.4 918.1,652.4 917.2,653.4 915.9,654.4 914.4,655.5 913.1,656.6 912.2,657.7 912.0,658.9 912.6,660.2 913.6,661.8 915.0,663.4 916.6,665.0 918.2,666.5 919.8,667.9 921.0,669.1 921.9,670.0" fill="none" stroke="#4a5878" stroke-width="1.7" stroke-linejoin="round"/>
<polyline points="691,195 849.4,565 849.4,669.6" fill="none" stroke="#f29a45" stroke-width="1.4"/>
</g>
<line x1="641.0" y1="624.5" x2="1116.0" y2="624.5" stroke="#7d8090" stroke-width="0.9" stroke-dasharray="2,1.6"/>
<rect x="1087.2" y="203.4" width="21.2" height="21" rx="2" fill="#fff"/>
<path d="M1097.9 208.8 l4.5 2.6 v5.2 l-4.5 2.6 l-4.5 -2.6 v-5.2 z" fill="none" stroke="#3a3ee0" stroke-width="2.1"/><circle cx="1097.9" cy="214" r="1.6" fill="none" stroke="#6a6ef0" stroke-width="1"/>
</svg>
<div class="a" style="left:646.4px;top:550.5px;width:465.1px;height:70.0px;background:rgba(255,255,255,0.93);border:0.8px solid #e5e6ee;border-radius:2px"></div>
<div class="a" style="left:656.0px;top:560.0px;width:5.0px;height:1.0px;background:#c77fd6;"></div>
<div class="a" style="left:663.7px;top:556.5px;font-size:6.75px;line-height:8.10px;color:#4a4d5e;font-weight:normal;">Gi-Pore Pressure_P10</div>
<div class="a" style="left:740.4px;top:556.2px;font-size:7.1px;line-height:8.52px;color:#3a3d4e;font-weight:normal;">32318.28</div>
<div class="a" style="left:772.4px;top:557.7px;font-size:4.6px;line-height:5.52px;color:#8a8d9c;font-weight:normal;">kPa</div>
<div class="a" style="left:656.0px;top:572.5px;width:5.0px;height:1.0px;background:#54c07e;"></div>
<div class="a" style="left:663.7px;top:568.9px;font-size:6.75px;line-height:8.10px;color:#4a4d5e;font-weight:normal;">Gi-Min. Stress_P10</div>
<div class="a" style="left:731.5px;top:568.7px;font-size:7.1px;line-height:8.52px;color:#3a3d4e;font-weight:normal;">57559.08</div>
<div class="a" style="left:763.5px;top:570.2px;font-size:4.6px;line-height:5.52px;color:#8a8d9c;font-weight:normal;">kPa</div>
<div class="a" style="left:656.0px;top:584.9px;width:5.0px;height:1.0px;background:#d9807c;"></div>
<div class="a" style="left:663.7px;top:581.4px;font-size:6.75px;line-height:8.10px;color:#4a4d5e;font-weight:normal;">Gi-Breakout_P10</div>
<div class="a" style="left:717.5px;top:581.1px;font-size:7.1px;line-height:8.52px;color:#3a3d4e;font-weight:normal;">39713.98</div>
<div class="a" style="left:749.5px;top:582.6px;font-size:4.6px;line-height:5.52px;color:#8a8d9c;font-weight:normal;">kPa</div>
<div class="a" style="left:656.0px;top:597.4px;width:5.0px;height:1.0px;background:#6f7fa5;"></div>
<div class="a" style="left:663.7px;top:593.8px;font-size:6.75px;line-height:8.10px;color:#4a4d5e;font-weight:normal;">Gi-Breakdown_P10</div>
<div class="a" style="left:732.0px;top:593.6px;font-size:7.1px;line-height:8.52px;color:#3a3d4e;font-weight:normal;">83957.23</div>
<div class="a" style="left:764.0px;top:595.1px;font-size:4.6px;line-height:5.52px;color:#8a8d9c;font-weight:normal;">kPa</div>
<div class="a" style="left:656.0px;top:609.8px;width:5.0px;height:1.0px;background:#f2a560;"></div>
<div class="a" style="left:663.7px;top:606.2px;font-size:6.75px;line-height:8.10px;color:#4a4d5e;font-weight:normal;">Gi-verticalStress</div>
<div class="a" style="left:718.0px;top:606.0px;font-size:7.1px;line-height:8.52px;color:#3a3d4e;font-weight:normal;">67301.28</div>
<div class="a" style="left:750.0px;top:607.5px;font-size:4.6px;line-height:5.52px;color:#8a8d9c;font-weight:normal;">kPa</div>
<div class="a" style="left:805.7px;top:560.0px;width:5.0px;height:1.0px;background:#e49be2;"></div>
<div class="a" style="left:813.4px;top:556.5px;font-size:6.75px;line-height:8.10px;color:#4a4d5e;font-weight:normal;">Gi-Pore Pressure_P50</div>
<div class="a" style="left:890.0px;top:556.2px;font-size:7.1px;line-height:8.52px;color:#3a3d4e;font-weight:normal;">34544.72</div>
<div class="a" style="left:922.0px;top:557.7px;font-size:4.6px;line-height:5.52px;color:#8a8d9c;font-weight:normal;">kPa</div>
<div class="a" style="left:805.7px;top:572.5px;width:5.0px;height:1.0px;background:#6ad694;"></div>
<div class="a" style="left:813.4px;top:568.9px;font-size:6.75px;line-height:8.10px;color:#4a4d5e;font-weight:normal;">Gi-Min. Stress_P50</div>
<div class="a" style="left:880.5px;top:568.7px;font-size:7.1px;line-height:8.52px;color:#3a3d4e;font-weight:normal;">59659.05</div>
<div class="a" style="left:912.5px;top:570.2px;font-size:4.6px;line-height:5.52px;color:#8a8d9c;font-weight:normal;">kPa</div>
<div class="a" style="left:805.7px;top:584.9px;width:5.0px;height:1.0px;background:#e88e8a;"></div>
<div class="a" style="left:813.4px;top:581.4px;font-size:6.75px;line-height:8.10px;color:#4a4d5e;font-weight:normal;">Gi-Breakout_P50</div>
<div class="a" style="left:867.5px;top:581.1px;font-size:7.1px;line-height:8.52px;color:#3a3d4e;font-weight:normal;">41867.28</div>
<div class="a" style="left:899.5px;top:582.6px;font-size:4.6px;line-height:5.52px;color:#8a8d9c;font-weight:normal;">kPa</div>
<div class="a" style="left:805.7px;top:597.4px;width:5.0px;height:1.0px;background:#7f92b8;"></div>
<div class="a" style="left:813.4px;top:593.8px;font-size:6.75px;line-height:8.10px;color:#4a4d5e;font-weight:normal;">Gi-Breakdown_P50</div>
<div class="a" style="left:881.0px;top:593.6px;font-size:7.1px;line-height:8.52px;color:#3a3d4e;font-weight:normal;">89666.33</div>
<div class="a" style="left:913.0px;top:595.1px;font-size:4.6px;line-height:5.52px;color:#8a8d9c;font-weight:normal;">kPa</div>
<div class="a" style="left:954.4px;top:560.0px;width:5.0px;height:1.0px;background:#f0bdea;"></div>
<div class="a" style="left:962.1px;top:556.5px;font-size:6.75px;line-height:8.10px;color:#4a4d5e;font-weight:normal;">Gi-Pore Pressure_P90</div>
<div class="a" style="left:1041.4px;top:556.2px;font-size:7.1px;line-height:8.52px;color:#3a3d4e;font-weight:normal;">36771.15</div>
<div class="a" style="left:1073.4px;top:557.7px;font-size:4.6px;line-height:5.52px;color:#8a8d9c;font-weight:normal;">kPa</div>
<div class="a" style="left:954.4px;top:572.5px;width:5.0px;height:1.0px;background:#93e2b2;"></div>
<div class="a" style="left:962.1px;top:568.9px;font-size:6.75px;line-height:8.10px;color:#4a4d5e;font-weight:normal;">Gi-Min. Stress_P90</div>
<div class="a" style="left:1031.0px;top:568.7px;font-size:7.1px;line-height:8.52px;color:#3a3d4e;font-weight:normal;">62318.11</div>
<div class="a" style="left:1063.0px;top:570.2px;font-size:4.6px;line-height:5.52px;color:#8a8d9c;font-weight:normal;">kPa</div>
<div class="a" style="left:954.4px;top:584.9px;width:5.0px;height:1.0px;background:#f0aaa6;"></div>
<div class="a" style="left:962.1px;top:581.4px;font-size:6.75px;line-height:8.10px;color:#4a4d5e;font-weight:normal;">Gi-Breakout_P90</div>
<div class="a" style="left:1016.5px;top:581.1px;font-size:7.1px;line-height:8.52px;color:#3a3d4e;font-weight:normal;">43620.17</div>
<div class="a" style="left:1048.5px;top:582.6px;font-size:4.6px;line-height:5.52px;color:#8a8d9c;font-weight:normal;">kPa</div>
<div class="a" style="left:954.4px;top:597.4px;width:5.0px;height:1.0px;background:#9aabcc;"></div>
<div class="a" style="left:962.1px;top:593.8px;font-size:6.75px;line-height:8.10px;color:#4a4d5e;font-weight:normal;">Gi-Breakdown_P90</div>
<div class="a" style="left:1030.0px;top:593.6px;font-size:7.1px;line-height:8.52px;color:#3a3d4e;font-weight:normal;">95275.42</div>
<div class="a" style="left:1062.0px;top:595.1px;font-size:4.6px;line-height:5.52px;color:#8a8d9c;font-weight:normal;">kPa</div>
</div><div id="root2" style="position:absolute;left:0;top:0;width:1130px;height:730px;overflow:hidden;filter:blur(0.8px);opacity:0.6">

<div class="a" style="left:0.0px;top:47.0px;width:1130.0px;height:636.0px;background:#ebebf3;"></div>
<div class="a" style="left:0.0px;top:47.0px;width:37.5px;height:636.0px;background:#24263d;"></div>
<div class="a" style="left:34.2px;top:47.0px;width:3.3px;height:636.0px;background:#1b1c31;"></div>
<div class="a" style="left:37.5px;top:47.0px;width:1.5px;height:636.0px;background:#f7f7fb;"></div>
<div class="a" style="left:0.0px;top:126.3px;width:37.5px;height:1.0px;background:#3b3f57;"></div>
<div class="a" style="left:0.0px;top:286.0px;width:37.5px;height:1.0px;background:#3b3f57;"></div>
<svg style="left:0;top:0" width="40" height="700" viewBox="0 0 40 700">
<circle cx="18.8" cy="65.3" r="10.2" fill="#fff"/>
<path d="M15.3 60.6 h3.6 a4.7 4.7 0 0 1 0 9.4 h-3.6 z" fill="#24263d"/>
<path d="M12.6 109 a6.2 6.2 0 0 1 12.4 0" fill="none" stroke="#9296ad" stroke-width="1.6"/>
<path d="M18.8 108.6 l1.6 -2.4" stroke="#9296ad" stroke-width="1.4"/>
<path d="M18.8 141.3 l6.6 13.9 h-3.2 l-3.4 -7.6 l-3.4 7.6 h-3.2 z" fill="#9296ad"/><path d="M16.6 152 h4.4" stroke="#9296ad" stroke-width="1.3"/>
<rect x="12.8" y="172.3" width="11.6" height="11.6" rx="1.2" fill="none" stroke="#9296ad" stroke-width="1.5"/>
<path d="M15.8 178.8 l1.8 1.8 l3.6 -3.6" fill="none" stroke="#9296ad" stroke-width="1.3"/>
<rect x="12.8" y="199.8" width="11.6" height="13" rx="1.2" fill="none" stroke="#9296ad" stroke-width="1.5"/>
<path d="M16 206.3 a2.6 2.6 0 0 1 5.2 0 v2.5 h-5.2z" fill="#9296ad"/>
<circle cx="22.6" cy="230" r="1.9" fill="#9296ad"/><path d="M21 232 l-3.6 4.6 l-3.8 4.2 M17.4 236.6 l4.8 4 M15 233.2 l5.8 -1.4 l4.2 2.6" fill="none" stroke="#9296ad" stroke-width="1.6" stroke-linejoin="round"/>
<path d="M18.8 258 l5.3 3.1 v6.2 l-5.3 3.1 l-5.3 -3.1 v-6.2 z" fill="none" stroke="#9296ad" stroke-width="1.5"/>
<circle cx="18.8" cy="264.3" r="2" fill="none" stroke="#9296ad" stroke-width="1.3"/>
<rect x="12.8" y="302" width="12" height="12" rx="1.2" fill="none" stroke="#9296ad" stroke-width="1.5"/>
<path d="M16 306 v5 M21.6 306 v5 M16 308.5 h5.6" stroke="#9296ad" stroke-width="1.5"/>
<path d="M12.8 334.5 h4 l5 -3.5 v12 l-5 -3.5 h-4 z" fill="none" stroke="#9296ad" stroke-width="1.5"/>
<path d="M23 334 h2.5 M23 338 h2.5" stroke="#9296ad" stroke-width="1.3"/>
<path d="M16.5 666.5 l4 3.5 l-4 3.5" fill="none" stroke="#6f7390" stroke-width="1.6"/>
</svg>
<div class="a" style="left:45.8px;top:57.2px;font-size:12.85px;line-height:15.42px;color:#23263a;font-weight:normal;-webkit-text-stroke:0.35px #23263a">Pressure Window</div>
<div class="a" style="left:157.4px;top:64.5px;font-size:4.9px;line-height:5.88px;color:#55586a;font-weight:bold;letter-spacing:0.1px">SHARED</div>
<div class="a" style="left:190.6px;top:59.4px;width:45.4px;height:13.6px;background:#fff;border-radius:7px"></div>
<div class="a" style="left:199.5px;top:62.8px;font-size:6.2px;line-height:7.44px;color:#2430d8;font-weight:normal;-webkit-text-stroke:0.2px #2430d8">Complete</div>
<div class="a" style="left:247.7px;top:62.6px;font-size:6.45px;line-height:7.74px;color:#858896;font-weight:normal;">Terra 0922 - Kiddie Oil &amp; Gas</div>
<div class="a" style="left:338.3px;top:62.0px;width:0.6px;height:8.0px;background:#c4c6d2;"></div>
<div class="a" style="left:343.4px;top:63.6px;width:4.6px;height:4.6px;border-radius:50%;background:#1428d8"></div>
<div class="a" style="left:350.8px;top:62.6px;font-size:6.45px;line-height:7.74px;color:#858896;font-weight:normal;">TeamPlan</div>
<div class="a" style="left:384.0px;top:62.0px;width:0.6px;height:8.0px;background:#c4c6d2;"></div>
<div class="a" style="left:389.0px;top:62.6px;font-size:6.45px;line-height:7.74px;color:#858896;font-weight:normal;">Terra 0922</div>
<svg style="left:0;top:0" width="1130" height="120" viewBox="0 0 1130 120">
<circle cx="960.3" cy="64.6" r="3.9" fill="none" stroke="#545769" stroke-width="1.9"/>
<path d="M960.3 68.4 v3.8" stroke="#545769" stroke-width="2"/>
<circle cx="986.3" cy="61.6" r="1.9" fill="#545769"/>
<path d="M984.8 63.4 l-3.6 4.8 l-3.6 3.8 M981.2 68.2 l4.6 3.8 M979 64.8 l5.6 -1.4 l4.2 2.4" fill="none" stroke="#545769" stroke-width="1.7" stroke-linejoin="round"/>
<path d="M1001 65.2 l6.2 4.8 M1008.6 60.2 l-2.8 11.6" stroke="#545769" stroke-width="2.3" stroke-linecap="round"/>
<circle cx="1030.2" cy="65.9" r="7.1" fill="none" stroke="#6a6d80" stroke-width="1.8"/>
<path d="M1029 63 h2.6 l-1.3 3.4z" fill="#545769"/>
<circle cx="1053.5" cy="66" r="6.7" fill="#b3d062"/>
<path d="M1122.4 64.5 l-2.8 -3.6 h5.6z" fill="#1c1e2b"/>
</svg>
<div class="a" style="left:1050.2px;top:63.5px;font-size:4.5px;line-height:5.40px;color:#fff;font-weight:bold;width:7px;text-align:center">KH</div>
<div class="a" style="left:1063.6px;top:58.6px;font-size:6.1px;line-height:7.32px;color:#3a3440;font-weight:bold;">Kevin Hermanson</div>
<div class="a" style="left:1063.6px;top:67.2px;font-size:5.3px;line-height:6.36px;color:#9a9db0;font-weight:normal;">public-tenant@c-cee.io.ob</div>
<div class="a" style="left:40.6px;top:84.8px;width:60.5px;height:21.8px;background:#1212e2;border-radius:11px"></div>
<div class="a" style="left:52.8px;top:91.4px;font-size:7.4px;line-height:8.88px;color:#fff;font-weight:bold;">Share</div>
<div class="a" style="left:77.5px;top:91px;width:11.5px;height:8px;border:1.2px solid #c8ccff;border-radius:1.5px"></div>
<div class="a" style="left:82.6px;top:92.5px;width:1.2px;height:5px;background:#c8ccff"></div>
<svg style="left:0;top:0" width="1130" height="120" viewBox="0 0 1130 120">
<rect x="113.5" y="89.5" width="11" height="11" rx="1" fill="none" stroke="#b3b5c3" stroke-width="1.1"/>
<path d="M119 91.5 v5 l-2 -2 M119 96.5 l2 -2" fill="none" stroke="#b3b5c3" stroke-width="1"/>
<path d="M156.3 99.2 l6.4 -7.2" stroke="#474a5c" stroke-width="3.2" stroke-linecap="round"/><path d="M157.8 97.6 l3.6 -4" stroke="#ebebf3" stroke-width="0.7"/>
<circle cx="210.5" cy="95.6" r="5.2" fill="none" stroke="#474a5c" stroke-width="1.4"/>
<path d="M210.5 93 v2.8 l1.5 1.2" fill="none" stroke="#474a5c" stroke-width="1.2"/>
<path d="M273 89.2 l6 11.2 h-12 z" fill="#474a5c"/>
<path d="M273.4 94.8 l2.2 4 h-3.6 z" fill="#ebebf3"/>
<path d="M362.2 93.6 h5 l-2.5 3.2z" fill="#1c1e2b"/>
<rect x="380" y="89.5" width="10" height="11.5" fill="none" stroke="#474a5c" stroke-width="1.3"/>
<path d="M382.5 93 h5 M382.5 96 h3.5 M386 97.5 v4" stroke="#474a5c" stroke-width="1.2"/>
<rect x="476.5" y="89.8" width="11" height="11" rx="2" fill="none" stroke="#474a5c" stroke-width="1.3"/>
<circle cx="482" cy="95.3" r="3" fill="none" stroke="#474a5c" stroke-width="1.1"/>
<path d="M580.6 93.6 h5 l-2.5 3.2z" fill="#1c1e2b"/>
</svg>
<div class="a" style="left:128.2px;top:92.1px;font-size:6.2px;line-height:7.44px;color:#a7a9b7;font-weight:normal;">Save</div>
<div class="a" style="left:169.4px;top:92.1px;font-size:6.1px;line-height:7.32px;color:#474a5c;font-weight:normal;">Rename</div>
<div class="a" style="left:220.6px;top:92.0px;font-size:6.3px;line-height:7.56px;color:#474a5c;font-weight:normal;">View History</div>
<div class="a" style="left:283.5px;top:92.1px;font-size:6.23px;line-height:7.48px;color:#474a5c;font-weight:normal;">RKB (54.30 m above MSL)</div>
<div class="a" style="left:394.7px;top:92.0px;font-size:6.27px;line-height:7.52px;color:#474a5c;font-weight:normal;">Export Pressure Window</div>
<div class="a" style="left:491.0px;top:91.9px;font-size:6.45px;line-height:7.74px;color:#474a5c;font-weight:normal;">Geomechanics Insights Mode</div>
<div class="a" style="left:1064.4px;top:86.2px;width:60.6px;height:18.6px;background:#fff;border-radius:2px"></div>
<div class="a" style="left:1084.4px;top:86.2px;width:0.8px;height:18.6px;background:#ebebf3;"></div>
<div class="a" style="left:1105.2px;top:86.2px;width:0.8px;height:18.6px;background:#ebebf3;"></div>
<svg style="left:0;top:0" width="1130" height="120" viewBox="0 0 1130 120">
<path d="M1070.5 91 h6.5 l0.8 4 l-2 6 h-3.5 l-2 -6 z" fill="none" stroke="#474a5c" stroke-width="1.3"/>
<path d="M1072.5 93 v3.5 M1075 93 v3.5" stroke="#474a5c" stroke-width="0.9"/>
<rect x="1089.6" y="90" width="10.6" height="10.6" fill="none" stroke="#474a5c" stroke-width="1.3"/>
<rect x="1094" y="90" width="6.2" height="10.6" fill="#474a5c"/>
<path d="M1112 90 h5 l2.6 2.6 v8 h-7.6 z" fill="none" stroke="#6b6e80" stroke-width="1.2"/>
<path d="M1113.8 95 h4 M1113.8 97.4 h4" stroke="#6b6e80" stroke-width="0.9"/>
</svg>
<div class="a" style="left:41.0px;top:111.0px;width:539.6px;height:567.0px;background:#fff;border-radius:2px"></div>
<div class="a" style="left:50.5px;top:119.5px;font-size:8.4px;line-height:10.08px;color:#3a3c4c;font-weight:normal;-webkit-text-stroke:0.25px #3a3c4c;letter-spacing:0.22px">Pressure Data</div>
<div class="a" style="left:448.8px;top:119.3px;font-size:7.7px;line-height:9.24px;color:#35384a;font-weight:normal;">Geomechanics Insights</div>
<div class="a" style="left:532.8px;top:119.3px;font-size:7.6px;line-height:9.12px;color:#55a83a;font-weight:normal;">[Available]</div>
<div class="a" style="left:50.7px;top:146.2px;width:522.2px;height:20.1px;background:#fbe8d0;border-radius:1.5px"></div>
<div class="a" style="left:56.3px;top:153.8px;width:5.6px;height:5.6px;border-radius:50%;background:#e97a12"></div>
<div class="a" style="left:65.9px;top:152.6px;font-size:6.6px;line-height:7.92px;color:#5a5c68;font-weight:normal;">Pressure data needs to be updated.</div>
<div class="a" style="left:178.7px;top:152.6px;font-size:6.6px;line-height:7.92px;color:#2330d8;font-weight:normal;-webkit-text-stroke:0.15px #2330d8">Update</div>
<div class="a" style="left:41.0px;top:174.8px;width:539.6px;height:1.0px;background:#ebebf3;"></div>
<div class="a" style="left:202.4px;top:175.8px;width:1.0px;height:502.2px;background:#e4e5ee;"></div>
<div class="a" style="left:50.5px;top:184.8px;font-size:8.4px;line-height:10.08px;color:#3a3c4c;font-weight:normal;-webkit-text-stroke:0.25px #3a3c4c;letter-spacing:0.30px">Pressure Window</div>
<div class="a" style="left:50.6px;top:209.3px;width:5.6px;height:5.6px;background:#4bb3f0;"></div>
<div class="a" style="left:60.6px;top:208.3px;font-size:6.4px;line-height:7.68px;color:#55586a;font-weight:normal;">Pore Pressure</div>
<div class="a" style="left:50.6px;top:228.6px;width:5.6px;height:5.6px;background:#f5a31a;"></div>
<div class="a" style="left:60.6px;top:227.5px;font-size:6.5px;line-height:7.80px;color:#55586a;font-weight:normal;">Fracture Pressure</div>
<div class="a" style="left:41.0px;top:246.2px;width:161.4px;height:1.0px;background:#ebebf3;"></div>
<div class="a" style="left:50.5px;top:255.6px;font-size:8.4px;line-height:10.08px;color:#3a3c4c;font-weight:normal;-webkit-text-stroke:0.25px #3a3c4c;letter-spacing:0.27px">Pressure Curves</div>
<div class="a" style="left:49.3px;top:282.4px;width:6.7px;height:1.7px;background:#a55cc4;"></div>
<div class="a" style="left:60.6px;top:279.1px;font-size:6.75px;line-height:8.10px;color:#5a5d6a;font-weight:normal;">Gi-Pore Pressure_P10</div>
<div class="a" style="left:60.6px;top:289.8px;font-size:5.4px;line-height:6.48px;color:#858897;font-weight:normal;">Pore Pressure</div>
<div class="a" style="left:132.0px;top:278.9px;width:12px;height:8.8px;border-radius:4.4px;border:0.9px solid #9a9dad;background:#f3f3f7"></div>
<div class="a" style="left:135.0px;top:282.4px;width:6px;height:1.6px;background:#b9bbc8"></div>
<div class="a" style="left:41.5px;top:299.3px;width:160.9px;height:24.6px;background:#d4d7f9;"></div>
<div class="a" style="left:184px;top:311.2px;width:11.5px;height:3px;background:radial-gradient(circle at 1.5px 1.5px,#2b2fd8 1.4px,transparent 1.5px) 0 0/4.2px 3px repeat-x"></div>
<div class="a" style="left:49.3px;top:307.8px;width:6.7px;height:1.7px;background:#dd86dc;"></div>
<div class="a" style="left:60.6px;top:304.6px;font-size:6.75px;line-height:8.10px;color:#5a5d6a;font-weight:normal;">Gi-Pore Pressure_P50</div>
<div class="a" style="left:60.6px;top:315.2px;font-size:5.4px;line-height:6.48px;color:#858897;font-weight:normal;">Pore Pressure</div>
<div class="a" style="left:132.0px;top:304.3px;width:12px;height:8.8px;border-radius:4.4px;border:0.9px solid #9a9dad;background:#f3f3f7"></div>
<div class="a" style="left:135.0px;top:307.8px;width:6px;height:1.6px;background:#b9bbc8"></div>
<div class="a" style="left:148.6px;top:306.0px;width:5px;height:5px;border-radius:50%;background:#3db7f2"></div>
<div class="a" style="left:49.3px;top:333.3px;width:6.7px;height:1.7px;background:#f2bdeb;"></div>
<div class="a" style="left:60.6px;top:330.0px;font-size:6.75px;line-height:8.10px;color:#5a5d6a;font-weight:normal;">Gi-Pore Pressure_P90</div>
<div class="a" style="left:60.6px;top:340.7px;font-size:5.4px;line-height:6.48px;color:#858897;font-weight:normal;">Pore Pressure</div>
<div class="a" style="left:132.0px;top:329.8px;width:12px;height:8.8px;border-radius:4.4px;border:0.9px solid #9a9dad;background:#f3f3f7"></div>
<div class="a" style="left:135.0px;top:333.3px;width:6px;height:1.6px;background:#b9bbc8"></div>
<div class="a" style="left:49.3px;top:358.7px;width:6.7px;height:1.7px;background:#2da65c;"></div>
<div class="a" style="left:60.6px;top:355.5px;font-size:6.75px;line-height:8.10px;color:#5a5d6a;font-weight:normal;">Gi-Min. Stress_P10</div>
<div class="a" style="left:60.6px;top:366.1px;font-size:5.4px;line-height:6.48px;color:#858897;font-weight:normal;">Fracture Pressure</div>
<div class="a" style="left:124.5px;top:355.2px;width:12px;height:8.8px;border-radius:4.4px;border:0.9px solid #9a9dad;background:#f3f3f7"></div>
<div class="a" style="left:127.5px;top:358.7px;width:6px;height:1.6px;background:#b9bbc8"></div>
<div class="a" style="left:49.3px;top:384.2px;width:6.7px;height:1.7px;background:#4ed482;"></div>
<div class="a" style="left:60.6px;top:380.9px;font-size:6.75px;line-height:8.10px;color:#5a5d6a;font-weight:normal;">Gi-Min. Stress_P50</div>
<div class="a" style="left:60.6px;top:391.6px;font-size:5.4px;line-height:6.48px;color:#858897;font-weight:normal;">Fracture Pressure</div>
<div class="a" style="left:124.5px;top:380.7px;width:12px;height:8.8px;border-radius:4.4px;border:0.9px solid #9a9dad;background:#f3f3f7"></div>
<div class="a" style="left:127.5px;top:384.2px;width:6px;height:1.6px;background:#b9bbc8"></div>
<div class="a" style="left:140.1px;top:382.4px;width:5px;height:5px;border-radius:50%;background:#f39a12"></div>
<div class="a" style="left:49.3px;top:409.6px;width:6.7px;height:1.7px;background:#8fe6b0;"></div>
<div class="a" style="left:60.6px;top:406.4px;font-size:6.75px;line-height:8.10px;color:#5a5d6a;font-weight:normal;">Gi-Min. Stress_P90</div>
<div class="a" style="left:60.6px;top:417.0px;font-size:5.4px;line-height:6.48px;color:#858897;font-weight:normal;">Fracture Pressure</div>
<div class="a" style="left:124.5px;top:406.1px;width:12px;height:8.8px;border-radius:4.4px;border:0.9px solid #9a9dad;background:#f3f3f7"></div>
<div class="a" style="left:127.5px;top:409.6px;width:6px;height:1.6px;background:#b9bbc8"></div>
<div class="a" style="left:49.3px;top:435.1px;width:6.7px;height:1.7px;background:#c4504e;"></div>
<div class="a" style="left:60.6px;top:431.8px;font-size:6.75px;line-height:8.10px;color:#5a5d6a;font-weight:normal;">Gi-Breakout_P10</div>
<div class="a" style="left:60.6px;top:442.5px;font-size:5.4px;line-height:6.48px;color:#858897;font-weight:normal;">Pore Pressure</div>
<div class="a" style="left:119.0px;top:431.6px;width:12px;height:8.8px;border-radius:4.4px;border:0.9px solid #9a9dad;background:#f3f3f7"></div>
<div class="a" style="left:122.0px;top:435.1px;width:6px;height:1.6px;background:#b9bbc8"></div>
<div class="a" style="left:49.3px;top:460.6px;width:6.7px;height:1.7px;background:#e77d7a;"></div>
<div class="a" style="left:60.6px;top:457.3px;font-size:6.75px;line-height:8.10px;color:#5a5d6a;font-weight:normal;">Gi-Breakout_P50</div>
<div class="a" style="left:60.6px;top:467.9px;font-size:5.4px;line-height:6.48px;color:#858897;font-weight:normal;">Pore Pressure</div>
<div class="a" style="left:119.0px;top:457.1px;width:12px;height:8.8px;border-radius:4.4px;border:0.9px solid #9a9dad;background:#f3f3f7"></div>
<div class="a" style="left:122.0px;top:460.6px;width:6px;height:1.6px;background:#b9bbc8"></div>
<div class="a" style="left:49.3px;top:486.0px;width:6.7px;height:1.7px;background:#f4b8b4;"></div>
<div class="a" style="left:60.6px;top:482.7px;font-size:6.75px;line-height:8.10px;color:#5a5d6a;font-weight:normal;">Gi-Breakout_P90</div>
<div class="a" style="left:60.6px;top:493.4px;font-size:5.4px;line-height:6.48px;color:#858897;font-weight:normal;">Pore Pressure</div>
<div class="a" style="left:119.0px;top:482.5px;width:12px;height:8.8px;border-radius:4.4px;border:0.9px solid #9a9dad;background:#f3f3f7"></div>
<div class="a" style="left:122.0px;top:486.0px;width:6px;height:1.6px;background:#b9bbc8"></div>
<div class="a" style="left:49.3px;top:511.4px;width:6.7px;height:1.7px;background:#2e416e;"></div>
<div class="a" style="left:60.6px;top:508.2px;font-size:6.75px;line-height:8.10px;color:#5a5d6a;font-weight:normal;">Gi-Breakdown_P10</div>
<div class="a" style="left:60.6px;top:518.8px;font-size:5.4px;line-height:6.48px;color:#858897;font-weight:normal;">Fracture Pressure</div>
<div class="a" style="left:124.5px;top:507.9px;width:12px;height:8.8px;border-radius:4.4px;border:0.9px solid #9a9dad;background:#f3f3f7"></div>
<div class="a" style="left:127.5px;top:511.4px;width:6px;height:1.6px;background:#b9bbc8"></div>
<div class="a" style="left:49.3px;top:536.9px;width:6.7px;height:1.7px;background:#5576a8;"></div>
<div class="a" style="left:60.6px;top:533.7px;font-size:6.75px;line-height:8.10px;color:#5a5d6a;font-weight:normal;">Gi-Breakdown_P50</div>
<div class="a" style="left:60.6px;top:544.3px;font-size:5.4px;line-height:6.48px;color:#858897;font-weight:normal;">Fracture Pressure</div>
<div class="a" style="left:124.5px;top:533.4px;width:12px;height:8.8px;border-radius:4.4px;border:0.9px solid #9a9dad;background:#f3f3f7"></div>
<div class="a" style="left:127.5px;top:536.9px;width:6px;height:1.6px;background:#b9bbc8"></div>
<div class="a" style="left:49.3px;top:562.4px;width:6.7px;height:1.7px;background:#87a2cc;"></div>
<div class="a" style="left:60.6px;top:559.1px;font-size:6.75px;line-height:8.10px;color:#5a5d6a;font-weight:normal;">Gi-Breakdown_P90</div>
<div class="a" style="left:60.6px;top:569.7px;font-size:5.4px;line-height:6.48px;color:#858897;font-weight:normal;">Fracture Pressure</div>
<div class="a" style="left:124.5px;top:558.9px;width:12px;height:8.8px;border-radius:4.4px;border:0.9px solid #9a9dad;background:#f3f3f7"></div>
<div class="a" style="left:127.5px;top:562.4px;width:6px;height:1.6px;background:#b9bbc8"></div>
<div class="a" style="left:49.3px;top:587.8px;width:6.7px;height:1.7px;background:#f29a45;"></div>
<div class="a" style="left:60.6px;top:584.5px;font-size:6.75px;line-height:8.10px;color:#5a5d6a;font-weight:normal;">Gi-verticalStress</div>
<div class="a" style="left:60.6px;top:595.2px;font-size:5.4px;line-height:6.48px;color:#858897;font-weight:normal;">Others</div>
<div class="a" style="left:115.3px;top:584.3px;width:12px;height:8.8px;border-radius:4.4px;border:0.9px solid #9a9dad;background:#f3f3f7"></div>
<div class="a" style="left:118.3px;top:587.8px;width:6px;height:1.6px;background:#b9bbc8"></div>
<div class="a" style="left:211.9px;top:190.1px;font-size:7.45px;line-height:8.94px;color:#4a4d5e;font-weight:normal;">Name</div>
<div class="a" style="left:234.5px;top:189.7px;font-size:7px;line-height:8.40px;color:#e0302a;font-weight:normal;">*</div>
<div class="a" style="left:211.9px;top:215.6px;font-size:7.5px;line-height:9.00px;color:#4a4d5e;font-weight:normal;">Pressure Type</div>
<div class="a" style="left:263.0px;top:215.2px;font-size:7px;line-height:8.40px;color:#e0302a;font-weight:normal;">*</div>
<div class="a" style="left:287.3px;top:184.7px;width:268.9px;height:19.6px;background:#e6e7ee;border:0.8px solid #d0d2dd;border-radius:1.5px"></div>
<div class="a" style="left:292.4px;top:193.8px;width:6.6px;height:1.1px;background:#dd5fd0;"></div>
<div class="a" style="left:303.6px;top:190.0px;font-size:7.5px;line-height:9.00px;color:#8a8c9c;font-weight:normal;">Gi-Pore Pressure_P50</div>
<div class="a" style="left:538.2px;top:189.8px;width:12.4px;height:10px;border-radius:50%;border:1.1px solid #a5a8b6"></div>
<div class="a" style="left:542.6px;top:193.3px;width:3.6px;height:3px;border-radius:50%;background:#b0b2c0"></div>
<div class="a" style="left:287.3px;top:209.5px;width:285.5px;height:20.0px;background:#fff;border:0.9px solid #cfd1dc;border-radius:1.5px"></div>
<div class="a" style="left:293.2px;top:216.1px;font-size:7.3px;line-height:8.76px;color:#2f3243;font-weight:normal;">Pore Pressure</div>
<svg style="left:0;top:0" width="600" height="240" viewBox="0 0 600 240"><path d="M560 217.8 h5.2 l-2.6 3.3z" fill="#1a2bd0"/><path d="M563 189.5 q0 -1.8 1.8 -1.8 h6.4 q1.8 0 1.8 1.8 v3.6 q0 1.4 -1.4 1.8 l-1 0.4 l1.6 2 q0.6 1.6 -1 2.5 h-6.6 q-1.8 -0.4 -1.2 -2.2 l1.6 -2.3 l-0.6 -0.4 q-1.4 -0.6 -1.4 -1.8z" fill="#1e2030"/><circle cx="567.8" cy="191.2" r="2.1" fill="#fff"/><path d="M565.5 196.5 h4.5" stroke="#fff" stroke-width="0.7"/></svg>
<div class="a" style="left:212.4px;top:238.2px;width:360.4px;height:431.6px;background:#fff;border:0.9px solid #e6e7ee;border-top:none"></div>
<div class="a" style="left:212.4px;top:238.2px;width:360.4px;height:28.3px;background:#e9eaf3;"></div>
<div class="a" style="right:817.8px;top:243.7px;font-size:6.3px;line-height:7.56px;color:#474a5a;font-weight:bold;text-align:right;">MD-RKB</div>
<div class="a" style="right:817.8px;top:253.8px;font-size:6.4px;line-height:7.68px;color:#6a6d7c;font-weight:normal;text-align:right;">[m]</div>
<div class="a" style="right:735.0px;top:243.7px;font-size:6.3px;line-height:7.56px;color:#474a5a;font-weight:bold;text-align:right;">TVD-RKB</div>
<div class="a" style="right:735.0px;top:253.8px;font-size:6.4px;line-height:7.68px;color:#6a6d7c;font-weight:normal;text-align:right;">[m]</div>
<div class="a" style="right:652.1px;top:243.7px;font-size:6.3px;line-height:7.56px;color:#474a5a;font-weight:bold;text-align:right;">Pressure</div>
<div class="a" style="right:652.1px;top:253.8px;font-size:6.4px;line-height:7.68px;color:#6a6d7c;font-weight:normal;text-align:right;">[kPa]</div>
<div class="a" style="right:568.2px;top:243.7px;font-size:6.3px;line-height:7.56px;color:#474a5a;font-weight:bold;text-align:right;">EMW</div>
<div class="a" style="right:568.2px;top:253.8px;font-size:6.4px;line-height:7.68px;color:#6a6d7c;font-weight:normal;text-align:right;">[g/cm3]</div>
<div class="a" style="left:213px;top:267px;width:359px;height:402.4px;overflow:hidden">
<div class="a" style="right:259.8px;top:6.7px;font-size:7.2px;line-height:8.6px;color:#575a6a;text-align:right">220.00</div>
<div class="a" style="right:177.0px;top:6.7px;font-size:7.2px;line-height:8.6px;color:#575a6a;text-align:right">220.00</div>
<div class="a" style="right:94.1px;top:6.7px;font-size:7.2px;line-height:8.6px;color:#575a6a;text-align:right">1675.81</div>
<div class="a" style="right:10.2px;top:6.7px;font-size:7.2px;line-height:8.6px;color:#575a6a;text-align:right">0.77</div>
<div class="a" style="right:259.8px;top:26.3px;font-size:7.2px;line-height:8.6px;color:#575a6a;text-align:right">230.00</div>
<div class="a" style="right:177.0px;top:26.3px;font-size:7.2px;line-height:8.6px;color:#575a6a;text-align:right">230.00</div>
<div class="a" style="right:94.1px;top:26.3px;font-size:7.2px;line-height:8.6px;color:#575a6a;text-align:right">1775.07</div>
<div class="a" style="right:10.2px;top:26.3px;font-size:7.2px;line-height:8.6px;color:#575a6a;text-align:right">0.79</div>
<div class="a" style="right:259.8px;top:45.9px;font-size:7.2px;line-height:8.6px;color:#575a6a;text-align:right">240.00</div>
<div class="a" style="right:177.0px;top:45.9px;font-size:7.2px;line-height:8.6px;color:#575a6a;text-align:right">240.00</div>
<div class="a" style="right:94.1px;top:45.9px;font-size:7.2px;line-height:8.6px;color:#575a6a;text-align:right">1880.76</div>
<div class="a" style="right:10.2px;top:45.9px;font-size:7.2px;line-height:8.6px;color:#575a6a;text-align:right">0.80</div>
<div class="a" style="right:259.8px;top:65.5px;font-size:7.2px;line-height:8.6px;color:#575a6a;text-align:right">250.00</div>
<div class="a" style="right:177.0px;top:65.5px;font-size:7.2px;line-height:8.6px;color:#575a6a;text-align:right">250.00</div>
<div class="a" style="right:94.1px;top:65.5px;font-size:7.2px;line-height:8.6px;color:#575a6a;text-align:right">1974.38</div>
<div class="a" style="right:10.2px;top:65.5px;font-size:7.2px;line-height:8.6px;color:#575a6a;text-align:right">0.81</div>
<div class="a" style="right:259.8px;top:85.1px;font-size:7.2px;line-height:8.6px;color:#575a6a;text-align:right">260.00</div>
<div class="a" style="right:177.0px;top:85.1px;font-size:7.2px;line-height:8.6px;color:#575a6a;text-align:right">260.00</div>
<div class="a" style="right:94.1px;top:85.1px;font-size:7.2px;line-height:8.6px;color:#575a6a;text-align:right">2077.10</div>
<div class="a" style="right:10.2px;top:85.1px;font-size:7.2px;line-height:8.6px;color:#575a6a;text-align:right">0.81</div>
<div class="a" style="right:259.8px;top:104.7px;font-size:7.2px;line-height:8.6px;color:#575a6a;text-align:right">270.00</div>
<div class="a" style="right:177.0px;top:104.7px;font-size:7.2px;line-height:8.6px;color:#575a6a;text-align:right">270.00</div>
<div class="a" style="right:94.1px;top:104.7px;font-size:7.2px;line-height:8.6px;color:#575a6a;text-align:right">2186.24</div>
<div class="a" style="right:10.2px;top:104.7px;font-size:7.2px;line-height:8.6px;color:#575a6a;text-align:right">0.83</div>
<div class="a" style="right:259.8px;top:124.3px;font-size:7.2px;line-height:8.6px;color:#575a6a;text-align:right">280.00</div>
<div class="a" style="right:177.0px;top:124.3px;font-size:7.2px;line-height:8.6px;color:#575a6a;text-align:right">280.00</div>
<div class="a" style="right:94.1px;top:124.3px;font-size:7.2px;line-height:8.6px;color:#575a6a;text-align:right">2281.72</div>
<div class="a" style="right:10.2px;top:124.3px;font-size:7.2px;line-height:8.6px;color:#575a6a;text-align:right">0.83</div>
<div class="a" style="right:259.8px;top:143.9px;font-size:7.2px;line-height:8.6px;color:#575a6a;text-align:right">290.00</div>
<div class="a" style="right:177.0px;top:143.9px;font-size:7.2px;line-height:8.6px;color:#575a6a;text-align:right">290.00</div>
<div class="a" style="right:94.1px;top:143.9px;font-size:7.2px;line-height:8.6px;color:#575a6a;text-align:right">2389.61</div>
<div class="a" style="right:10.2px;top:143.9px;font-size:7.2px;line-height:8.6px;color:#575a6a;text-align:right">0.84</div>
<div class="a" style="right:259.8px;top:163.5px;font-size:7.2px;line-height:8.6px;color:#575a6a;text-align:right">300.00</div>
<div class="a" style="right:177.0px;top:163.5px;font-size:7.2px;line-height:8.6px;color:#575a6a;text-align:right">300.00</div>
<div class="a" style="right:94.1px;top:163.5px;font-size:7.2px;line-height:8.6px;color:#575a6a;text-align:right">2486.00</div>
<div class="a" style="right:10.2px;top:163.5px;font-size:7.2px;line-height:8.6px;color:#575a6a;text-align:right">0.85</div>
<div class="a" style="right:259.8px;top:183.1px;font-size:7.2px;line-height:8.6px;color:#575a6a;text-align:right">310.00</div>
<div class="a" style="right:177.0px;top:183.1px;font-size:7.2px;line-height:8.6px;color:#575a6a;text-align:right">310.00</div>
<div class="a" style="right:94.1px;top:183.1px;font-size:7.2px;line-height:8.6px;color:#575a6a;text-align:right">2586.39</div>
<div class="a" style="right:10.2px;top:183.1px;font-size:7.2px;line-height:8.6px;color:#575a6a;text-align:right">0.85</div>
<div class="a" style="right:259.8px;top:202.7px;font-size:7.2px;line-height:8.6px;color:#575a6a;text-align:right">320.00</div>
<div class="a" style="right:177.0px;top:202.7px;font-size:7.2px;line-height:8.6px;color:#575a6a;text-align:right">320.00</div>
<div class="a" style="right:94.1px;top:202.7px;font-size:7.2px;line-height:8.6px;color:#575a6a;text-align:right">2691.33</div>
<div class="a" style="right:10.2px;top:202.7px;font-size:7.2px;line-height:8.6px;color:#575a6a;text-align:right">0.86</div>
<div class="a" style="right:259.8px;top:222.3px;font-size:7.2px;line-height:8.6px;color:#575a6a;text-align:right">330.00</div>
<div class="a" style="right:177.0px;top:222.3px;font-size:7.2px;line-height:8.6px;color:#575a6a;text-align:right">330.00</div>
<div class="a" style="right:94.1px;top:222.3px;font-size:7.2px;line-height:8.6px;color:#575a6a;text-align:right">2795.13</div>
<div class="a" style="right:10.2px;top:222.3px;font-size:7.2px;line-height:8.6px;color:#575a6a;text-align:right">0.86</div>
<div class="a" style="right:259.8px;top:241.9px;font-size:7.2px;line-height:8.6px;color:#575a6a;text-align:right">340.00</div>
<div class="a" style="right:177.0px;top:241.9px;font-size:7.2px;line-height:8.6px;color:#575a6a;text-align:right">340.00</div>
<div class="a" style="right:94.1px;top:241.9px;font-size:7.2px;line-height:8.6px;color:#575a6a;text-align:right">2902.35</div>
<div class="a" style="right:10.2px;top:241.9px;font-size:7.2px;line-height:8.6px;color:#575a6a;text-align:right">0.87</div>
<div class="a" style="right:259.8px;top:261.5px;font-size:7.2px;line-height:8.6px;color:#575a6a;text-align:right">350.00</div>
<div class="a" style="right:177.0px;top:261.5px;font-size:7.2px;line-height:8.6px;color:#575a6a;text-align:right">350.00</div>
<div class="a" style="right:94.1px;top:261.5px;font-size:7.2px;line-height:8.6px;color:#575a6a;text-align:right">2998.32</div>
<div class="a" style="right:10.2px;top:261.5px;font-size:7.2px;line-height:8.6px;color:#575a6a;text-align:right">0.87</div>
<div class="a" style="right:259.8px;top:281.1px;font-size:7.2px;line-height:8.6px;color:#575a6a;text-align:right">360.00</div>
<div class="a" style="right:177.0px;top:281.1px;font-size:7.2px;line-height:8.6px;color:#575a6a;text-align:right">360.00</div>
<div class="a" style="right:94.1px;top:281.1px;font-size:7.2px;line-height:8.6px;color:#575a6a;text-align:right">3097.24</div>
<div class="a" style="right:10.2px;top:281.1px;font-size:7.2px;line-height:8.6px;color:#575a6a;text-align:right">0.88</div>
<div class="a" style="right:259.8px;top:300.7px;font-size:7.2px;line-height:8.6px;color:#575a6a;text-align:right">370.00</div>
<div class="a" style="right:177.0px;top:300.7px;font-size:7.2px;line-height:8.6px;color:#575a6a;text-align:right">370.00</div>
<div class="a" style="right:94.1px;top:300.7px;font-size:7.2px;line-height:8.6px;color:#575a6a;text-align:right">3187.63</div>
<div class="a" style="right:10.2px;top:300.7px;font-size:7.2px;line-height:8.6px;color:#575a6a;text-align:right">0.88</div>
<div class="a" style="right:259.8px;top:320.3px;font-size:7.2px;line-height:8.6px;color:#575a6a;text-align:right">380.00</div>
<div class="a" style="right:177.0px;top:320.3px;font-size:7.2px;line-height:8.6px;color:#575a6a;text-align:right">380.00</div>
<div class="a" style="right:94.1px;top:320.3px;font-size:7.2px;line-height:8.6px;color:#575a6a;text-align:right">3293.72</div>
<div class="a" style="right:10.2px;top:320.3px;font-size:7.2px;line-height:8.6px;color:#575a6a;text-align:right">0.88</div>
<div class="a" style="right:259.8px;top:339.9px;font-size:7.2px;line-height:8.6px;color:#575a6a;text-align:right">390.00</div>
<div class="a" style="right:177.0px;top:339.9px;font-size:7.2px;line-height:8.6px;color:#575a6a;text-align:right">390.00</div>
<div class="a" style="right:94.1px;top:339.9px;font-size:7.2px;line-height:8.6px;color:#575a6a;text-align:right">3396.25</div>
<div class="a" style="right:10.2px;top:339.9px;font-size:7.2px;line-height:8.6px;color:#575a6a;text-align:right">0.89</div>
<div class="a" style="right:259.8px;top:359.5px;font-size:7.2px;line-height:8.6px;color:#575a6a;text-align:right">400.00</div>
<div class="a" style="right:177.0px;top:359.5px;font-size:7.2px;line-height:8.6px;color:#575a6a;text-align:right">400.00</div>
<div class="a" style="right:94.1px;top:359.5px;font-size:7.2px;line-height:8.6px;color:#575a6a;text-align:right">3512.06</div>
<div class="a" style="right:10.2px;top:359.5px;font-size:7.2px;line-height:8.6px;color:#575a6a;text-align:right">0.90</div>
<div class="a" style="right:259.8px;top:379.1px;font-size:7.2px;line-height:8.6px;color:#575a6a;text-align:right">410.00</div>
<div class="a" style="right:177.0px;top:379.1px;font-size:7.2px;line-height:8.6px;color:#575a6a;text-align:right">410.00</div>
<div class="a" style="right:94.1px;top:379.1px;font-size:7.2px;line-height:8.6px;color:#575a6a;text-align:right">3608.28</div>
<div class="a" style="right:10.2px;top:379.1px;font-size:7.2px;line-height:8.6px;color:#575a6a;text-align:right">0.90</div>
<div class="a" style="right:259.8px;top:398.7px;font-size:7.2px;line-height:8.6px;color:#575a6a;text-align:right">420.00</div>
<div class="a" style="right:177.0px;top:398.7px;font-size:7.2px;line-height:8.6px;color:#575a6a;text-align:right">420.00</div>
<div class="a" style="right:94.1px;top:398.7px;font-size:7.2px;line-height:8.6px;color:#575a6a;text-align:right">3711.90</div>
<div class="a" style="right:10.2px;top:398.7px;font-size:7.2px;line-height:8.6px;color:#575a6a;text-align:right">0.90</div>
</div>
<div class="a" style="left:566.8px;top:267.5px;width:5.2px;height:401.9px;background:#f2f2f7;"></div>
<div class="a" style="left:567.8px;top:268.2px;width:3.0px;height:17.3px;background:#b5b7c4;border-radius:1.5px"></div>
<div class="a" style="left:586.2px;top:111.0px;width:539.4px;height:567.0px;background:#fff;border-radius:2px"></div>
<div class="a" style="left:594.2px;top:119.6px;font-size:8.4px;line-height:10.08px;color:#3a3c4c;font-weight:normal;-webkit-text-stroke:0.25px #3a3c4c;letter-spacing:0.28px">Pressure Plot</div>
<div class="a" style="left:971.4px;top:118.0px;width:88.0px;height:12.8px;background:#fff;border:0.6px solid #f1f1f6;border-radius:6.4px;box-shadow:0 0.6px 2px rgba(40,40,80,0.10)"></div>
<div class="a" style="left:977.5px;top:120.8px;font-size:6.0px;line-height:7.20px;color:#3d4258;font-weight:normal;">Measurement: <b>Pressure</b></div>
<div class="a" style="left:1066.0px;top:118.0px;width:50.4px;height:12.8px;background:#fff;border:0.6px solid #f1f1f6;border-radius:6.4px;box-shadow:0 0.6px 2px rgba(40,40,80,0.10)"></div>
<div class="a" style="left:1072.0px;top:120.8px;font-size:6.0px;line-height:7.20px;color:#3a3d50;font-weight:normal;">Depth: <b>MD</b></div>
<svg style="left:0;top:0" width="1130" height="140" viewBox="0 0 1130 140"><path d="M1049.5 123 l2 2 l2 -2" fill="none" stroke="#3a3d50" stroke-width="0.9"/><path d="M1106.5 123 l2 2 l2 -2" fill="none" stroke="#3a3d50" stroke-width="0.9"/></svg>
<div class="a" style="left:594.6px;top:150.2px;width:6.0px;height:6.0px;background:#4bb3f0;"></div>
<div class="a" style="left:605.3px;top:149.1px;font-size:6.6px;line-height:7.92px;color:#676a7b;font-weight:normal;">Pore Pressure</div>
<div class="a" style="left:654.0px;top:150.2px;width:6.0px;height:6.0px;background:#f5a31a;"></div>
<div class="a" style="left:665.0px;top:149.1px;font-size:6.6px;line-height:7.92px;color:#676a7b;font-weight:normal;">Fracture Pressure</div>
<div class="a" style="left:726.0px;top:152.6px;width:5.0px;height:1.1px;background:#c58ad8;"></div>
<div class="a" style="left:735.5px;top:149.0px;font-size:6.75px;line-height:8.10px;color:#676a7b;font-weight:normal;">Gi-Pore Pressure_P10</div>
<div class="a" style="left:813.0px;top:152.6px;width:5.0px;height:1.1px;background:#e7a6e5;"></div>
<div class="a" style="left:822.5px;top:149.0px;font-size:6.75px;line-height:8.10px;color:#676a7b;font-weight:normal;">Gi-Pore Pressure_P50</div>
<div class="a" style="left:898.5px;top:152.6px;width:5.0px;height:1.1px;background:#f4c9ef;"></div>
<div class="a" style="left:908.0px;top:149.0px;font-size:6.75px;line-height:8.10px;color:#676a7b;font-weight:normal;">Gi-Pore Pressure_P90</div>
<div class="a" style="left:984.6px;top:152.6px;width:5.0px;height:1.1px;background:#5bbf85;"></div>
<div class="a" style="left:994.1px;top:149.0px;font-size:6.75px;line-height:8.10px;color:#676a7b;font-weight:normal;">Gi-Min. Stress_P10</div>
<div class="a" style="left:595.8px;top:161.0px;width:5.0px;height:1.1px;background:#79dba3;"></div>
<div class="a" style="left:605.3px;top:157.5px;font-size:6.75px;line-height:8.10px;color:#676a7b;font-weight:normal;">Gi-Min. Stress_P50</div>
<div class="a" style="left:673.4px;top:161.0px;width:5.0px;height:1.1px;background:#addfc2;"></div>
<div class="a" style="left:682.9px;top:157.5px;font-size:6.75px;line-height:8.10px;color:#676a7b;font-weight:normal;">Gi-Min. Stress_P90</div>
<div class="a" style="left:751.0px;top:161.0px;width:5.0px;height:1.1px;background:#d98a88;"></div>
<div class="a" style="left:760.5px;top:157.5px;font-size:6.75px;line-height:8.10px;color:#676a7b;font-weight:normal;">Gi-Breakout_P10</div>
<div class="a" style="left:824.0px;top:161.0px;width:5.0px;height:1.1px;background:#eea5a2;"></div>
<div class="a" style="left:833.5px;top:157.5px;font-size:6.75px;line-height:8.10px;color:#676a7b;font-weight:normal;">Gi-Breakout_P50</div>
<div class="a" style="left:895.0px;top:161.0px;width:5.0px;height:1.1px;background:#f5c3c0;"></div>
<div class="a" style="left:904.5px;top:157.5px;font-size:6.75px;line-height:8.10px;color:#676a7b;font-weight:normal;">Gi-Breakout_P90</div>
<div class="a" style="left:965.4px;top:161.0px;width:5.0px;height:1.1px;background:#6a7a9c;"></div>
<div class="a" style="left:974.9px;top:157.5px;font-size:6.75px;line-height:8.10px;color:#676a7b;font-weight:normal;">Gi-Breakdown_P10</div>
<div class="a" style="left:595.8px;top:169.5px;width:5.0px;height:1.1px;background:#8397ba;"></div>
<div class="a" style="left:605.3px;top:165.9px;font-size:6.75px;line-height:8.10px;color:#676a7b;font-weight:normal;">Gi-Breakdown_P50</div>
<div class="a" style="left:673.4px;top:169.5px;width:5.0px;height:1.1px;background:#a6b6d2;"></div>
<div class="a" style="left:682.9px;top:165.9px;font-size:6.75px;line-height:8.10px;color:#676a7b;font-weight:normal;">Gi-Breakdown_P90</div>
<div class="a" style="left:751.0px;top:169.5px;width:5.0px;height:1.1px;background:#f4b57a;"></div>
<div class="a" style="left:760.5px;top:165.9px;font-size:6.75px;line-height:8.10px;color:#676a7b;font-weight:normal;">Gi-verticalStress</div>
<div class="a" style="left:824.0px;top:169.5px;width:5.0px;height:1.1px;background:#a5a7b3;"></div>
<div class="a" style="left:833.5px;top:165.9px;font-size:6.75px;line-height:8.10px;color:#676a7b;font-weight:normal;">Extrapolation</div>
<div class="a" style="left:858.0px;top:176.7px;font-size:6.45px;line-height:7.74px;color:#777a8c;font-weight:normal;">Pressure [kPa]</div>
<div class="a" style="left:590.5px;width:200px;top:186.3px;font-size:6.6px;line-height:7.92px;color:#85889a;font-weight:normal;text-align:center;">0.00</div>
<div class="a" style="left:708.8px;width:200px;top:186.3px;font-size:6.6px;line-height:7.92px;color:#85889a;font-weight:normal;text-align:center;">50000.00</div>
<div class="a" style="left:827.1px;width:200px;top:186.3px;font-size:6.6px;line-height:7.92px;color:#85889a;font-weight:normal;text-align:center;">100000.00</div>
<div class="a" style="left:945.4px;width:200px;top:186.3px;font-size:6.6px;line-height:7.92px;color:#85889a;font-weight:normal;text-align:center;">150000.00</div>
<div class="a" style="right:494.0px;top:194.7px;font-size:6.55px;line-height:7.86px;color:#85889a;font-weight:normal;text-align:right;">140.30</div>
<div class="a" style="right:494.0px;top:233.1px;font-size:6.55px;line-height:7.86px;color:#85889a;font-weight:normal;text-align:right;">500.00</div>
<div class="a" style="right:494.0px;top:292.0px;font-size:6.55px;line-height:7.86px;color:#85889a;font-weight:normal;text-align:right;">1000.00</div>
<div class="a" style="right:494.0px;top:350.9px;font-size:6.55px;line-height:7.86px;color:#85889a;font-weight:normal;text-align:right;">1500.00</div>
<div class="a" style="right:494.0px;top:409.8px;font-size:6.55px;line-height:7.86px;color:#85889a;font-weight:normal;text-align:right;">2000.00</div>
<div class="a" style="right:494.0px;top:468.7px;font-size:6.55px;line-height:7.86px;color:#85889a;font-weight:normal;text-align:right;">2500.00</div>
<div class="a" style="right:494.0px;top:527.6px;font-size:6.55px;line-height:7.86px;color:#85889a;font-weight:normal;text-align:right;">3000.00</div>
<div class="a" style="right:494.0px;top:586.5px;font-size:6.55px;line-height:7.86px;color:#85889a;font-weight:normal;text-align:right;">3500.00</div>
<div class="a" style="right:494.0px;top:619.9px;font-size:6.55px;line-height:7.86px;color:#85889a;font-weight:normal;text-align:right;">3758.26</div>
<div class="a" style="right:494.0px;top:645.4px;font-size:6.55px;line-height:7.86px;color:#85889a;font-weight:normal;text-align:right;">4000.00</div>
<div class="a" style="right:494.0px;top:661.7px;font-size:6.55px;line-height:7.86px;color:#85889a;font-weight:normal;text-align:right;">4174.50</div>
<div class="a" style="left:592.6px;top:433px;font-size:5.8px;line-height:7px;color:#6a6d80;transform:translate(-50%,-50%) rotate(-90deg);transform-origin:50% 50%">MD-RKB [m]</div>
<svg style="left:0;top:0" width="1130" height="730" viewBox="0 0 1130 730">
<defs><clipPath id="cc"><rect x="641.0" y="195.0" width="475.0" height="474.6"/></clipPath></defs>
<rect x="641.0" y="195.0" width="475.0" height="474.6" fill="#fff"/>
<polygon points="641.0,195.0 690.5,195.0 691.5,200.0 692.3,204.0 693.1,208.0 693.9,212.0 694.7,216.0 695.5,220.0 696.3,224.0 697.1,228.0 697.9,232.0 698.7,236.0 699.5,240.0 700.3,244.0 701.1,248.0 701.9,252.0 702.6,256.0 703.4,260.0 704.1,264.0 704.9,268.0 705.6,272.0 706.4,276.0 707.1,280.0 707.9,284.0 708.6,288.0 709.4,292.0 710.1,296.0 710.9,300.0 711.8,304.0 712.7,308.0 713.6,312.0 714.4,316.0 715.3,320.0 716.2,324.0 717.1,328.0 717.9,332.0 718.6,336.0 719.3,340.0 720.0,344.0 720.8,348.0 721.5,352.0 722.2,356.0 723.0,360.0 723.7,364.0 724.4,368.0 725.1,372.0 725.8,376.0 726.2,380.0 726.8,384.0 727.2,388.0 727.8,392.0 728.2,396.0 728.8,400.0 729.2,404.0 729.8,408.0 730.2,412.0 730.9,416.0 731.8,420.0 732.7,424.0 733.6,428.0 734.5,432.0 736.3,436.0 738.1,440.0 739.8,444.0 741.6,448.0 742.7,452.0 743.1,456.0 743.5,460.0 743.9,464.0 744.3,468.0 744.7,472.0 745.1,476.0 745.5,480.0 745.9,484.0 746.3,488.0 746.7,492.0 747.1,496.0 747.5,500.0 747.9,504.0 748.3,508.0 748.7,512.0 749.0,516.0 749.4,520.0 749.8,524.0 750.1,528.0 750.5,532.0 752.0,536.0 753.6,540.0 755.1,544.0 756.7,548.0 758.3,552.0 759.9,556.0 761.5,560.0 761.5,564.0 761.5,568.0 761.5,572.0 761.5,576.0 761.5,580.0 761.5,584.0 761.5,588.0 761.5,592.0 761.5,596.0 761.5,600.0 761.5,604.0 761.5,608.0 761.5,612.0 761.5,616.0 761.5,620.0 761.4,624.0 761.3,628.0 761.2,632.0 761.2,636.0 761.1,640.0 761.0,644.0 760.9,648.0 760.8,652.0 760.8,656.0 760.7,660.0 760.6,664.0 760.5,668.0 763.4,669.6 641.0,669.6" fill="#e0f4fe"/>
<polygon points="1116.0,195.0 694.0,195.0 695.6,200.0 696.9,204.0 698.3,208.0 699.6,212.0 700.9,216.0 702.2,220.0 703.5,224.0 704.8,228.0 706.1,232.0 707.4,236.0 708.7,240.0 710.0,244.0 711.3,248.0 712.8,252.0 714.2,256.0 715.8,260.0 717.2,264.0 718.8,268.0 720.2,272.0 721.8,276.0 723.2,280.0 724.8,284.0 726.2,288.0 727.6,292.0 728.9,296.0 730.1,300.0 731.4,304.0 732.6,308.0 733.9,312.0 735.1,316.0 736.4,320.0 737.6,324.0 738.9,328.0 740.2,332.0 741.8,336.0 743.2,340.0 744.8,344.0 746.2,348.0 747.8,352.0 749.2,356.0 750.8,360.0 752.2,364.0 753.8,368.0 755.2,372.0 756.8,376.0 758.4,380.0 760.0,384.0 761.6,388.0 763.2,392.0 764.8,396.0 766.4,400.0 768.0,404.0 769.6,408.0 771.2,412.0 772.6,416.0 773.8,420.0 775.1,424.0 776.3,428.0 777.5,432.0 778.8,436.0 780.0,440.0 780.8,444.0 781.6,448.0 782.4,452.0 783.2,456.0 784.0,460.0 784.8,464.0 785.6,468.0 787.0,472.0 789.0,476.0 791.0,480.0 796.3,484.0 805.0,488.0 813.7,492.0 820.0,496.0 824.0,500.0 828.0,504.0 832.0,508.0 832.7,512.0 833.5,516.0 834.2,520.0 834.9,524.0 835.6,528.0 836.7,532.0 838.0,536.0 839.3,540.0 840.7,544.0 842.0,548.0 843.7,552.0 845.5,556.0 847.2,560.0 849.0,564.0 849.4,568.0 849.4,572.0 849.4,576.0 849.4,580.0 849.4,584.0 849.4,588.0 849.4,592.0 849.4,596.0 849.4,600.0 849.4,604.0 849.4,608.0 849.4,612.0 849.4,616.0 849.4,620.0 849.4,624.0 849.4,628.0 849.4,632.0 849.4,636.0 849.4,640.0 849.4,644.0 849.4,648.0 849.4,652.0 849.4,656.0 849.4,660.0 849.4,664.0 849.4,668.0 849.4,669.6 1116.0,669.6" fill="#fff0cf"/>
<line x1="690.5" y1="195.0" x2="690.5" y2="669.6" stroke="#c9ccd8" stroke-opacity="0.5" stroke-width="0.8"/>
<line x1="808.8" y1="195.0" x2="808.8" y2="669.6" stroke="#c9ccd8" stroke-opacity="0.5" stroke-width="0.8"/>
<line x1="927.1" y1="195.0" x2="927.1" y2="669.6" stroke="#c9ccd8" stroke-opacity="0.5" stroke-width="0.8"/>
<line x1="1045.4" y1="195.0" x2="1045.4" y2="669.6" stroke="#c9ccd8" stroke-opacity="0.5" stroke-width="0.8"/>
<line x1="641.0" y1="237.0" x2="1116.0" y2="237.0" stroke="#c9ccd8" stroke-opacity="0.5" stroke-width="0.8"/>
<line x1="638.5" y1="237.0" x2="641.0" y2="237.0" stroke="#b5b8c6" stroke-width="0.8"/>
<line x1="641.0" y1="295.9" x2="1116.0" y2="295.9" stroke="#c9ccd8" stroke-opacity="0.5" stroke-width="0.8"/>
<line x1="638.5" y1="295.9" x2="641.0" y2="295.9" stroke="#b5b8c6" stroke-width="0.8"/>
<line x1="641.0" y1="354.8" x2="1116.0" y2="354.8" stroke="#c9ccd8" stroke-opacity="0.5" stroke-width="0.8"/>
<line x1="638.5" y1="354.8" x2="641.0" y2="354.8" stroke="#b5b8c6" stroke-width="0.8"/>
<line x1="641.0" y1="413.7" x2="1116.0" y2="413.7" stroke="#c9ccd8" stroke-opacity="0.5" stroke-width="0.8"/>
<line x1="638.5" y1="413.7" x2="641.0" y2="413.7" stroke="#b5b8c6" stroke-width="0.8"/>
<line x1="641.0" y1="472.6" x2="1116.0" y2="472.6" stroke="#c9ccd8" stroke-opacity="0.5" stroke-width="0.8"/>
<line x1="638.5" y1="472.6" x2="641.0" y2="472.6" stroke="#b5b8c6" stroke-width="0.8"/>
<line x1="641.0" y1="531.5" x2="1116.0" y2="531.5" stroke="#c9ccd8" stroke-opacity="0.5" stroke-width="0.8"/>
<line x1="638.5" y1="531.5" x2="641.0" y2="531.5" stroke="#b5b8c6" stroke-width="0.8"/>
<line x1="641.0" y1="590.4" x2="1116.0" y2="590.4" stroke="#c9ccd8" stroke-opacity="0.5" stroke-width="0.8"/>
<line x1="638.5" y1="590.4" x2="641.0" y2="590.4" stroke="#b5b8c6" stroke-width="0.8"/>
<line x1="641.0" y1="649.3" x2="1116.0" y2="649.3" stroke="#c9ccd8" stroke-opacity="0.5" stroke-width="0.8"/>
<line x1="638.5" y1="649.3" x2="641.0" y2="649.3" stroke="#b5b8c6" stroke-width="0.8"/>
<line x1="641.0" y1="195.0" x2="1116.0" y2="195.0" stroke="#c3c6d3" stroke-width="1"/>
<line x1="641.0" y1="195.0" x2="641.0" y2="669.6" stroke="#c3c6d3" stroke-width="1"/>
<g clip-path="url(#cc)">
<polyline points="694.1,203.5 694.4,204.5 694.6,205.5 694.8,206.5 695.1,207.5 695.3,208.5 695.6,209.5 695.8,210.5 696.0,211.5 696.3,212.5 696.5,213.5 696.7,214.5 697.0,215.5 697.2,216.5 697.5,217.5 697.7,218.5 697.9,219.5 698.2,220.5 698.4,221.5 698.7,222.5 698.9,223.5 699.1,224.5 699.4,225.5 699.6,226.5 699.8,227.5 700.1,228.5 700.3,229.5 700.6,230.5 700.8,231.5 701.0,232.5 701.3,233.5 701.5,234.5 701.8,235.5 702.0,236.5 702.2,237.5 702.5,238.5 702.7,239.5 702.9,240.5 703.2,241.5 703.4,242.5 703.7,243.5 703.9,244.5 704.2,245.5 704.4,246.5 704.6,247.5 704.9,248.5 705.1,249.5 705.3,250.5 705.6,251.5 705.8,252.5 706.0,253.5 706.3,254.5 706.5,255.5 706.8,256.5 707.0,257.5 707.2,258.5 707.5,259.5 707.7,260.5 707.9,261.5 708.2,262.5 708.4,263.5 708.6,264.5 708.8,265.5 709.1,266.5 709.4,267.5 709.5,268.5 709.8,269.5 710.1,270.5 710.3,271.5 710.5,272.5 710.7,273.5 711.0,274.5 711.3,275.5 711.4,276.5 711.7,277.5 711.9,278.5 712.1,279.5 712.4,280.5 712.6,281.5 712.8,282.5 713.1,283.5 713.3,284.5 713.5,285.5 713.7,286.5 714.0,287.5 714.2,288.5 714.5,289.5 714.7,290.5 715.0,291.5 715.2,292.5 715.4,293.5 715.6,294.5 715.9,295.5 716.2,296.5 716.3,297.5 716.6,298.5 716.9,299.5 717.2,300.5 717.4,301.5 717.7,302.5 718.0,303.5 718.2,304.5 718.4,305.5 718.7,306.5 719.1,307.5 719.3,308.5 719.6,309.5 719.9,310.5 720.2,311.5 720.3,312.5 720.5,313.5 720.8,314.5 721.1,315.5 721.4,316.5 721.7,317.5 722.0,318.5 722.2,319.5 722.6,320.5 722.8,321.5 723.0,322.5 723.3,323.5 723.5,324.5 723.9,325.5 724.1,326.5 724.4,327.5 724.5,328.5 724.8,329.5 725.2,330.5 725.3,331.5 725.5,332.5 725.8,333.5 726.0,334.5 726.3,335.5 726.5,336.5 726.6,337.5 726.8,338.5 727.2,339.5 727.3,340.5 727.4,341.5 727.6,342.5 727.8,343.5 728.2,344.5 728.3,345.5 728.6,346.5 728.9,347.5 729.0,348.5 729.4,349.5 729.3,350.5 729.8,351.5 730.0,352.5 730.3,353.5 730.2,354.5 730.5,355.5 730.8,356.5 731.0,357.5 731.2,358.5 731.3,359.5 731.8,360.5 732.0,361.5 732.2,362.5 732.5,363.5 732.5,364.5 732.5,365.5 733.0,366.5 733.0,367.5 733.5,368.5 733.7,369.5 733.7,370.5 733.9,371.5 734.0,372.5 734.3,373.5 734.9,374.5 734.7,375.5 735.2,376.5 735.0,377.5 735.2,378.5 735.4,379.5 735.5,380.5 736.0,381.5 735.8,382.5 736.1,383.5 736.1,384.5 736.2,385.5 736.7,386.5 736.7,387.5 736.9,388.5 737.2,389.5 737.0,390.5 737.1,391.5 737.7,392.5 738.0,393.5 737.6,394.5 738.0,395.5 738.5,396.5 738.6,397.5 738.8,398.5 738.7,399.5 739.1,400.5 738.7,401.5 739.1,402.5 739.6,403.5 739.4,404.5 739.6,405.5 739.8,406.5 742.3,407.5 745.6,408.5 743.7,409.5 740.5,410.5 740.5,411.5 741.0,412.5 741.1,413.5 741.4,414.5 741.5,415.5 742.0,416.5 742.2,417.5 742.2,418.5 742.2,419.5 742.2,420.5 743.2,421.5 743.5,422.5 743.3,423.5 738.6,424.5 735.8,425.5 740.6,426.5 744.1,427.5 744.1,428.5 744.5,429.5 744.8,430.5 745.6,431.5 746.1,432.5 746.6,433.5 746.9,434.5 747.7,435.5 744.3,436.5 740.3,437.5 745.2,438.5 749.3,439.5 749.2,440.5 750.1,441.5 750.1,442.5 750.8,443.5 751.8,444.5 751.3,445.5 752.4,446.5 754.7,447.5 757.2,448.5 755.7,449.5 754.3,450.5 754.0,451.5 753.8,452.5 754.2,453.5 754.7,454.5 754.0,455.5 755.0,456.5 754.2,457.5 754.8,458.5 754.8,459.5 755.5,460.5 755.6,461.5 755.5,462.5 755.1,463.5 755.2,464.5 755.9,465.5 755.7,466.5 755.9,467.5 756.1,468.5 755.6,469.5 755.9,470.5 756.7,471.5 756.0,472.5 756.8,473.5 756.0,474.5 756.0,475.5 756.7,476.5 756.5,477.5 757.0,478.5 754.8,479.5 751.3,480.5 754.1,481.5 756.8,482.5 757.8,483.5 757.9,484.5 758.0,485.5 757.9,486.5 757.6,487.5 758.0,488.5 758.0,489.5 757.9,490.5 757.9,491.5 758.4,492.5 758.8,493.5 760.6,494.5 763.6,495.5 761.3,496.5 758.9,497.5 758.7,498.5 758.5,499.5 759.2,500.5 759.0,501.5 759.6,502.5 759.0,503.5 759.7,504.5 760.1,505.5 759.3,506.5 759.6,507.5 760.4,508.5 759.8,509.5 759.8,510.5 761.7,511.5 764.8,512.5 762.5,513.5 761.1,514.5 760.6,515.5 760.2,516.5 761.3,517.5 761.3,518.5 761.2,519.5 761.1,520.5 761.4,521.5 761.7,522.5 760.9,523.5 761.0,524.5 761.7,525.5 761.4,526.5 764.2,527.5 766.3,528.5 764.2,529.5 761.7,530.5 762.1,531.5 762.3,532.5 762.7,533.5 769.6,534.5 782.4,535.5 795.9,536.5 785.8,537.5 773.0,538.5 765.3,539.5 764.9,540.5 766.1,541.5 766.6,542.5 766.1,543.5 766.4,544.5 767.4,545.5 767.6,546.5 767.9,547.5 768.6,548.5 770.6,549.5 773.1,550.5 776.0,551.5 774.8,552.5 773.1,553.5 770.8,554.5 771.3,555.5 771.6,556.5 772.1,557.5 772.4,558.5 772.8,559.5 773.0,560.5 773.0,561.5 773.0,562.5 773.0,563.5 773.0,564.5 773.0,565.5 773.0,566.5 773.0,567.5 773.0,568.5 773.0,569.5 773.0,570.5 773.0,571.5 773.0,572.5 773.0,573.5 773.0,574.5 773.0,575.5 773.0,576.5 773.0,577.5 773.0,578.5 773.0,579.5 773.0,580.5 773.0,581.5 773.0,582.5 773.0,583.5 773.0,584.5 773.0,585.5 773.0,586.5 773.0,587.5 773.0,588.5 773.0,589.5 773.0,590.5 773.0,591.5 773.0,592.5 773.0,593.5 773.0,594.5 773.0,595.5 773.0,596.5 773.0,597.5 773.0,598.5 773.0,599.5 773.0,600.5 773.0,601.5 773.0,602.5 773.0,603.5 773.0,604.5 773.0,605.5 773.0,606.5 773.0,607.5 773.0,608.5 773.0,609.5 773.0,610.5 773.0,611.5 773.0,612.5 773.0,613.5 773.0,614.5 773.0,615.5 773.0,616.5 773.0,617.5 773.0,618.5 771.0,619.0 770.7,620.0 770.3,621.4 769.8,623.0 769.2,624.8 768.7,626.6 768.3,628.5 768.1,630.3 768.0,632.0 768.2,633.5 768.7,635.0 769.4,636.5 770.1,638.0 770.9,639.5 771.5,641.0 771.9,642.5 772.0,644.0 771.7,645.6 771.2,647.2 770.4,648.8 769.5,650.4 768.6,652.1 767.8,653.7 767.3,655.4 767.0,657.0 767.1,658.7 767.5,660.6 768.0,662.4 768.7,664.3 769.4,666.1 770.1,667.7 770.6,669.0 771.0,670.0" fill="none" stroke="#efb2ea" stroke-width="1.6" stroke-linejoin="round"/>
<polyline points="694.1,203.5 694.3,204.5 694.5,205.5 694.8,206.5 695.0,207.5 695.2,208.5 695.4,209.5 695.6,210.5 695.8,211.5 696.0,212.5 696.3,213.5 696.5,214.5 696.7,215.5 696.9,216.5 697.1,217.5 697.3,218.5 697.5,219.5 697.8,220.5 698.0,221.5 698.2,222.5 698.4,223.5 698.6,224.5 698.8,225.5 699.0,226.5 699.3,227.5 699.5,228.5 699.7,229.5 699.9,230.5 700.1,231.5 700.3,232.5 700.6,233.5 700.8,234.5 701.0,235.5 701.2,236.5 701.4,237.5 701.6,238.5 701.9,239.5 702.1,240.5 702.3,241.5 702.5,242.5 702.7,243.5 702.9,244.5 703.1,245.5 703.3,246.5 703.6,247.5 703.8,248.5 704.0,249.5 704.2,250.5 704.4,251.5 704.6,252.5 704.9,253.5 705.1,254.5 705.3,255.5 705.5,256.5 705.7,257.5 705.9,258.5 706.1,259.5 706.3,260.5 706.5,261.5 706.7,262.5 706.9,263.5 707.2,264.5 707.4,265.5 707.6,266.5 707.8,267.5 708.0,268.5 708.2,269.5 708.5,270.5 708.7,271.5 708.9,272.5 709.0,273.5 709.2,274.5 709.5,275.5 709.7,276.5 710.0,277.5 710.1,278.5 710.4,279.5 710.5,280.5 710.8,281.5 711.0,282.5 711.2,283.5 711.3,284.5 711.6,285.5 711.8,286.5 712.0,287.5 712.2,288.5 712.4,289.5 712.7,290.5 712.8,291.5 713.1,292.5 713.3,293.5 713.5,294.5 713.7,295.5 714.0,296.5 714.2,297.5 714.3,298.5 714.5,299.5 714.9,300.5 715.2,301.5 715.3,302.5 715.6,303.5 715.9,304.5 716.1,305.5 716.3,306.5 716.6,307.5 716.7,308.5 717.0,309.5 717.3,310.5 717.5,311.5 717.8,312.5 718.0,313.5 718.3,314.5 718.4,315.5 718.8,316.5 719.0,317.5 719.2,318.5 719.4,319.5 719.6,320.5 719.9,321.5 720.1,322.5 720.4,323.5 720.6,324.5 720.9,325.5 721.1,326.5 721.4,327.5 721.7,328.5 721.9,329.5 722.1,330.5 722.3,331.5 722.5,332.5 722.6,333.5 722.9,334.5 723.1,335.5 723.3,336.5 723.6,337.5 723.6,338.5 723.9,339.5 724.1,340.5 724.2,341.5 724.4,342.5 724.6,343.5 725.0,344.5 725.2,345.5 725.3,346.5 725.5,347.5 725.6,348.5 726.0,349.5 726.2,350.5 726.4,351.5 726.5,352.5 726.9,353.5 727.0,354.5 726.9,355.5 727.3,356.5 727.5,357.5 727.6,358.5 727.9,359.5 728.0,360.5 728.4,361.5 728.6,362.5 728.5,363.5 729.0,364.5 729.0,365.5 729.3,366.5 729.6,367.5 729.9,368.5 730.0,369.5 730.0,370.5 730.4,371.5 730.3,372.5 730.8,373.5 730.8,374.5 730.9,375.5 731.0,376.5 731.1,377.5 731.6,378.5 731.4,379.5 731.6,380.5 731.7,381.5 731.8,382.5 732.3,383.5 732.3,384.5 732.5,385.5 732.8,386.5 732.7,387.5 732.6,388.5 732.8,389.5 733.2,390.5 733.4,391.5 733.7,392.5 733.6,393.5 733.6,394.5 733.9,395.5 734.3,396.5 734.0,397.5 734.6,398.5 734.7,399.5 734.6,400.5 734.7,401.5 734.6,402.5 734.7,403.5 734.8,404.5 737.2,405.5 740.1,406.5 739.4,407.5 736.6,408.5 736.2,409.5 735.9,410.5 735.8,411.5 735.9,412.5 736.2,413.5 736.6,414.5 737.3,415.5 736.9,416.5 737.1,417.5 737.8,418.5 737.7,419.5 738.1,420.5 737.9,421.5 735.1,422.5 731.2,423.5 734.6,424.5 739.2,425.5 739.3,426.5 739.2,427.5 739.7,428.5 740.6,429.5 740.4,430.5 740.3,431.5 740.6,432.5 741.1,433.5 738.9,434.5 736.2,435.5 738.8,436.5 742.8,437.5 744.0,438.5 743.8,439.5 745.0,440.5 744.8,441.5 745.6,442.5 745.5,443.5 747.0,444.5 748.0,445.5 751.1,446.5 750.8,447.5 749.1,448.5 749.0,449.5 748.9,450.5 749.5,451.5 749.8,452.5 749.5,453.5 750.0,454.5 750.0,455.5 749.1,456.5 750.0,457.5 749.4,458.5 750.1,459.5 749.9,460.5 750.6,461.5 749.7,462.5 750.9,463.5 749.9,464.5 750.0,465.5 750.1,466.5 750.3,467.5 751.4,468.5 751.4,469.5 751.6,470.5 750.8,471.5 751.5,472.5 751.7,473.5 751.7,474.5 751.3,475.5 752.2,476.5 750.2,477.5 747.6,478.5 748.3,479.5 751.1,480.5 752.5,481.5 752.3,482.5 752.3,483.5 753.0,484.5 752.5,485.5 753.1,486.5 752.2,487.5 752.9,488.5 753.2,489.5 752.5,490.5 753.4,491.5 754.8,492.5 758.0,493.5 757.0,494.5 753.9,495.5 754.2,496.5 753.4,497.5 753.4,498.5 753.9,499.5 753.5,500.5 753.7,501.5 754.6,502.5 753.9,503.5 754.5,504.5 755.0,505.5 754.6,506.5 755.1,507.5 755.2,508.5 756.0,509.5 758.1,510.5 758.2,511.5 756.3,512.5 755.7,513.5 755.7,514.5 755.5,515.5 756.1,516.5 756.0,517.5 756.1,518.5 756.4,519.5 755.4,520.5 756.3,521.5 756.2,522.5 755.6,523.5 756.0,524.5 758.1,525.5 760.1,526.5 759.4,527.5 757.1,528.5 756.9,529.5 757.3,530.5 757.5,531.5 760.9,532.5 773.6,533.5 785.3,534.5 780.9,535.5 769.7,536.5 759.5,537.5 759.0,538.5 759.5,539.5 760.3,540.5 760.4,541.5 760.6,542.5 761.0,543.5 761.7,544.5 762.5,545.5 762.2,546.5 764.8,547.5 766.6,548.5 769.3,549.5 769.2,550.5 767.0,551.5 765.5,552.5 765.2,553.5 765.7,554.5 766.3,555.5 766.5,556.5 767.0,557.5 767.4,558.5 767.8,559.5 768.0,560.5 768.0,561.5 768.0,562.5 768.0,563.5 768.0,564.5 768.0,565.5 768.0,566.5 768.0,567.5 768.0,568.5 768.0,569.5 768.0,570.5 768.0,571.5 768.0,572.5 768.0,573.5 768.0,574.5 768.0,575.5 768.0,576.5 768.0,577.5 768.0,578.5 768.0,579.5 768.0,580.5 768.0,581.5 768.0,582.5 768.0,583.5 768.0,584.5 768.0,585.5 768.0,586.5 768.0,587.5 768.0,588.5 768.0,589.5 768.0,590.5 768.0,591.5 768.0,592.5 768.0,593.5 768.0,594.5 768.0,595.5 768.0,596.5 768.0,597.5 768.0,598.5 768.0,599.5 768.0,600.5 768.0,601.5 768.0,602.5 768.0,603.5 768.0,604.5 768.0,605.5 768.0,606.5 768.0,607.5 768.0,608.5 768.0,609.5 768.0,610.5 768.0,611.5 768.0,612.5 768.0,613.5 768.0,614.5 768.0,615.5 768.0,616.5 768.0,617.5 768.0,618.5 767.0,619.0 766.7,619.9 766.3,621.2 765.8,622.6 765.2,624.2 764.7,626.0 764.3,627.7 764.1,629.4 764.0,631.0 764.2,632.5 764.7,634.0 765.4,635.5 766.1,636.9 766.9,638.4 767.5,639.9 767.9,641.5 768.0,643.0 767.7,644.6 767.2,646.2 766.4,647.8 765.5,649.4 764.6,651.0 763.8,652.7 763.3,654.3 763.0,656.0 763.1,657.8 763.5,659.8 764.0,661.8 764.7,663.8 765.4,665.7 766.1,667.5 766.6,668.9 767.0,670.0" fill="none" stroke="#d57bdc" stroke-width="1.6" stroke-linejoin="round"/>
<polyline points="694.1,203.5 694.3,204.5 694.5,205.5 694.7,206.5 694.9,207.5 695.1,208.5 695.2,209.5 695.4,210.5 695.6,211.5 695.8,212.5 696.0,213.5 696.2,214.5 696.4,215.5 696.6,216.5 696.8,217.5 697.0,218.5 697.2,219.5 697.3,220.5 697.5,221.5 697.7,222.5 697.9,223.5 698.1,224.5 698.3,225.5 698.5,226.5 698.7,227.5 698.9,228.5 699.1,229.5 699.3,230.5 699.5,231.5 699.6,232.5 699.8,233.5 700.0,234.5 700.2,235.5 700.4,236.5 700.6,237.5 700.8,238.5 701.0,239.5 701.2,240.5 701.4,241.5 701.6,242.5 701.8,243.5 701.9,244.5 702.1,245.5 702.4,246.5 702.5,247.5 702.7,248.5 702.9,249.5 703.1,250.5 703.3,251.5 703.5,252.5 703.7,253.5 703.8,254.5 704.1,255.5 704.2,256.5 704.4,257.5 704.6,258.5 704.8,259.5 705.0,260.5 705.2,261.5 705.3,262.5 705.6,263.5 705.8,264.5 705.9,265.5 706.1,266.5 706.3,267.5 706.5,268.5 706.7,269.5 706.8,270.5 707.1,271.5 707.3,272.5 707.4,273.5 707.6,274.5 707.8,275.5 707.9,276.5 708.1,277.5 708.4,278.5 708.5,279.5 708.7,280.5 708.9,281.5 709.1,282.5 709.3,283.5 709.5,284.5 709.6,285.5 709.8,286.5 710.0,287.5 710.2,288.5 710.4,289.5 710.6,290.5 710.7,291.5 711.0,292.5 711.2,293.5 711.3,294.5 711.6,295.5 711.7,296.5 711.9,297.5 712.1,298.5 712.3,299.5 712.6,300.5 712.7,301.5 713.0,302.5 713.3,303.5 713.3,304.5 713.6,305.5 713.8,306.5 714.0,307.5 714.2,308.5 714.5,309.5 714.7,310.5 714.9,311.5 715.2,312.5 715.4,313.5 715.6,314.5 715.8,315.5 716.0,316.5 716.3,317.5 716.4,318.5 716.7,319.5 716.9,320.5 717.1,321.5 717.3,322.5 717.6,323.5 717.9,324.5 718.0,325.5 718.3,326.5 718.4,327.5 718.6,328.5 718.9,329.5 719.0,330.5 719.4,331.5 719.4,332.5 719.6,333.5 719.8,334.5 720.0,335.5 720.3,336.5 720.5,337.5 720.6,338.5 720.7,339.5 720.8,340.5 721.0,341.5 721.2,342.5 721.5,343.5 721.7,344.5 721.9,345.5 722.1,346.5 722.1,347.5 722.4,348.5 722.5,349.5 722.8,350.5 722.8,351.5 723.3,352.5 723.1,353.5 723.5,354.5 723.6,355.5 723.9,356.5 723.9,357.5 724.3,358.5 724.2,359.5 724.6,360.5 724.8,361.5 724.9,362.5 725.0,363.5 725.2,364.5 725.4,365.5 725.5,366.5 725.7,367.5 726.1,368.5 726.2,369.5 726.3,370.5 726.6,371.5 726.8,372.5 726.7,373.5 727.1,374.5 727.2,375.5 727.1,376.5 727.3,377.5 727.7,378.5 727.7,379.5 727.7,380.5 727.9,381.5 728.0,382.5 728.3,383.5 728.5,384.5 728.2,385.5 728.3,386.5 728.7,387.5 728.5,388.5 728.7,389.5 728.8,390.5 728.9,391.5 729.4,392.5 729.2,393.5 729.6,394.5 730.0,395.5 729.6,396.5 730.1,397.5 730.1,398.5 730.0,399.5 730.6,400.5 730.6,401.5 730.5,402.5 732.2,403.5 734.3,404.5 734.9,405.5 732.6,406.5 730.9,407.5 731.6,408.5 731.7,409.5 731.9,410.5 731.5,411.5 732.0,412.5 732.2,413.5 732.0,414.5 731.9,415.5 732.1,416.5 732.8,417.5 733.0,418.5 732.9,419.5 730.8,420.5 726.4,421.5 728.7,422.5 732.9,423.5 734.0,424.5 734.1,425.5 735.2,426.5 735.4,427.5 735.3,428.5 734.9,429.5 735.7,430.5 736.4,431.5 734.4,432.5 731.3,433.5 731.7,434.5 736.2,435.5 737.7,436.5 739.0,437.5 738.3,438.5 739.0,439.5 740.2,440.5 739.8,441.5 740.4,442.5 741.9,443.5 745.0,444.5 745.2,445.5 744.0,446.5 742.5,447.5 742.8,448.5 743.6,449.5 744.4,450.5 744.3,451.5 744.8,452.5 744.6,453.5 743.9,454.5 744.3,455.5 744.3,456.5 744.5,457.5 745.0,458.5 744.9,459.5 745.4,460.5 744.6,461.5 745.7,462.5 744.9,463.5 745.7,464.5 746.0,465.5 745.1,466.5 745.8,467.5 746.4,468.5 745.4,469.5 746.0,470.5 746.1,471.5 746.1,472.5 746.0,473.5 746.1,474.5 745.0,475.5 742.6,476.5 742.8,477.5 746.1,478.5 747.5,479.5 746.8,480.5 746.6,481.5 747.0,482.5 747.8,483.5 747.1,484.5 747.7,485.5 747.2,486.5 747.6,487.5 747.5,488.5 748.1,489.5 749.1,490.5 752.2,491.5 752.0,492.5 749.5,493.5 747.9,494.5 749.0,495.5 748.1,496.5 748.7,497.5 749.4,498.5 749.3,499.5 748.9,500.5 749.7,501.5 749.0,502.5 749.4,503.5 749.5,504.5 749.8,505.5 749.4,506.5 750.6,507.5 752.6,508.5 753.5,509.5 751.3,510.5 749.9,511.5 750.6,512.5 750.5,513.5 750.1,514.5 750.5,515.5 750.1,516.5 750.3,517.5 750.3,518.5 750.4,519.5 751.1,520.5 751.4,521.5 751.5,522.5 751.9,523.5 754.9,524.5 754.2,525.5 752.7,526.5 751.7,527.5 751.7,528.5 752.0,529.5 753.5,530.5 764.9,531.5 776.4,532.5 777.2,533.5 765.9,534.5 754.3,535.5 754.3,536.5 754.0,537.5 753.9,538.5 755.4,539.5 755.8,540.5 755.7,541.5 756.3,542.5 756.7,543.5 756.3,544.5 758.5,545.5 760.7,546.5 763.5,547.5 763.4,548.5 761.6,549.5 760.4,550.5 759.6,551.5 760.2,552.5 760.2,553.5 760.9,554.5 761.3,555.5 761.5,556.5 761.9,557.5 762.4,558.5 762.8,559.5 763.0,560.5 763.0,561.5 763.0,562.5 763.0,563.5 763.0,564.5 763.0,565.5 763.0,566.5 763.0,567.5 763.0,568.5 763.0,569.5 763.0,570.5 763.0,571.5 763.0,572.5 763.0,573.5 763.0,574.5 763.0,575.5 763.0,576.5 763.0,577.5 763.0,578.5 763.0,579.5 763.0,580.5 763.0,581.5 763.0,582.5 763.0,583.5 763.0,584.5 763.0,585.5 763.0,586.5 763.0,587.5 763.0,588.5 763.0,589.5 763.0,590.5 763.0,591.5 763.0,592.5 763.0,593.5 763.0,594.5 763.0,595.5 763.0,596.5 763.0,597.5 763.0,598.5 763.0,599.5 763.0,600.5 763.0,601.5 763.0,602.5 763.0,603.5 763.0,604.5 763.0,605.5 763.0,606.5 763.0,607.5 763.0,608.5 763.0,609.5 763.0,610.5 763.0,611.5 763.0,612.5 763.0,613.5 763.0,614.5 763.0,615.5 763.0,616.5 763.0,617.5 763.0,618.5 763.0,619.0 762.7,619.8 762.3,621.0 761.8,622.3 761.2,623.8 760.7,625.3 760.3,626.9 760.1,628.5 760.0,630.0 760.2,631.4 760.7,632.9 761.4,634.4 762.1,635.9 762.9,637.4 763.5,638.9 763.9,640.4 764.0,642.0 763.7,643.6 763.2,645.1 762.4,646.7 761.5,648.3 760.6,649.9 759.8,651.6 759.3,653.3 759.0,655.0 759.1,656.9 759.5,659.0 760.0,661.1 760.7,663.3 761.4,665.4 762.1,667.3 762.6,668.8 763.0,670.0" fill="none" stroke="#b45fd0" stroke-width="1.6" stroke-linejoin="round"/>
<polyline points="689.2,203.5 689.6,204.5 689.9,205.5 690.3,206.5 690.7,207.5 691.1,208.5 691.4,209.5 691.8,210.5 692.2,211.5 692.6,212.5 692.9,213.5 693.3,214.5 693.7,215.5 694.1,216.5 694.4,217.5 694.8,218.5 695.2,219.5 695.5,220.5 695.9,221.5 696.3,222.5 696.7,223.5 697.0,224.5 697.4,225.5 697.8,226.5 698.2,227.5 698.6,228.5 698.9,229.5 699.3,230.5 699.7,231.5 700.1,232.5 700.4,233.5 700.8,234.5 701.1,235.5 701.5,236.5 701.9,237.5 702.3,238.5 702.6,239.5 703.0,240.5 703.4,241.5 703.8,242.5 704.2,243.5 704.5,244.5 704.9,245.5 705.2,246.5 705.6,247.5 706.1,248.5 706.5,249.5 706.7,250.5 707.0,251.5 707.3,252.5 707.6,253.5 707.9,254.5 708.3,255.5 708.6,256.5 708.9,257.5 709.1,258.5 709.5,259.5 709.8,260.5 710.1,261.5 710.5,262.5 710.7,263.5 710.9,264.5 711.4,265.5 711.7,266.5 711.9,267.5 712.3,268.5 712.5,269.5 712.9,270.5 713.1,271.5 713.5,272.5 713.8,273.5 714.1,274.5 714.3,275.5 714.7,276.5 715.1,277.5 715.2,278.5 715.5,279.5 715.9,280.5 716.1,281.5 716.4,282.5 716.7,283.5 717.1,284.5 717.5,285.5 717.7,286.5 718.1,287.5 718.2,288.5 718.6,289.5 719.0,290.5 719.2,291.5 719.5,292.5 719.8,293.5 720.2,294.5 720.6,295.5 720.8,296.5 721.0,297.5 721.4,298.5 721.9,299.5 722.3,300.5 722.6,301.5 723.0,302.5 723.3,303.5 723.8,304.5 724.3,305.5 724.6,306.5 725.1,307.5 725.4,308.5 725.9,309.5 726.2,310.5 726.6,311.5 726.9,312.5 727.4,313.5 727.8,314.5 728.1,315.5 728.6,316.5 728.9,317.5 729.4,318.5 729.9,319.5 730.3,320.5 730.6,321.5 731.1,322.5 731.5,323.5 731.8,324.5 732.2,325.5 732.7,326.5 733.0,327.5 733.4,328.5 733.8,329.5 734.0,330.5 734.2,331.5 734.6,332.5 734.8,333.5 735.1,334.5 735.2,335.5 735.4,336.5 735.7,337.5 735.9,338.5 736.4,339.5 736.5,340.5 736.6,341.5 736.9,342.5 737.2,343.5 737.5,344.5 737.6,345.5 738.0,346.5 738.2,347.5 738.2,348.5 738.4,349.5 738.7,350.5 738.7,351.5 739.2,352.5 739.4,353.5 739.8,354.5 739.8,355.5 740.3,356.5 740.4,357.5 740.6,358.5 740.6,359.5 741.3,360.5 741.3,361.5 741.5,362.5 741.5,363.5 741.7,364.5 741.9,365.5 742.7,366.5 742.6,367.5 743.0,368.5 743.2,369.5 743.5,370.5 743.4,371.5 743.5,372.5 744.3,373.5 743.9,374.5 744.8,375.5 744.5,376.5 744.4,377.5 747.8,378.5 751.7,379.5 748.9,380.5 745.6,381.5 745.4,382.5 745.6,383.5 746.2,384.5 746.3,385.5 746.7,386.5 746.4,387.5 746.8,388.5 747.2,389.5 747.2,390.5 747.7,391.5 747.5,392.5 748.2,393.5 752.3,394.5 756.6,395.5 753.6,396.5 749.0,397.5 749.4,398.5 749.4,399.5 749.1,400.5 749.9,401.5 749.9,402.5 750.3,403.5 750.4,404.5 750.8,405.5 755.0,406.5 759.9,407.5 756.6,408.5 752.1,409.5 751.3,410.5 751.8,411.5 751.8,412.5 751.7,413.5 751.7,414.5 752.4,415.5 752.1,416.5 752.6,417.5 753.2,418.5 756.9,419.5 761.5,420.5 758.9,421.5 754.2,422.5 753.9,423.5 753.6,424.5 754.6,425.5 754.2,426.5 754.9,427.5 755.5,428.5 755.5,429.5 759.7,430.5 766.5,431.5 762.0,432.5 756.2,433.5 755.8,434.5 756.6,435.5 757.5,436.5 757.8,437.5 757.4,438.5 759.3,439.5 758.3,440.5 760.0,441.5 759.9,442.5 760.8,443.5 765.2,444.5 769.8,445.5 766.2,446.5 762.4,447.5 761.9,448.5 762.4,449.5 762.3,450.5 762.8,451.5 763.7,452.5 763.5,453.5 762.4,454.5 762.9,455.5 763.1,456.5 763.3,457.5 763.3,458.5 763.9,459.5 762.9,460.5 763.6,461.5 766.6,462.5 768.9,463.5 766.6,464.5 763.2,465.5 763.7,466.5 764.2,467.5 764.2,468.5 764.2,469.5 763.8,470.5 763.9,471.5 764.0,472.5 763.5,473.5 763.8,474.5 763.3,475.5 763.6,476.5 763.7,477.5 764.7,478.5 763.5,479.5 764.0,480.5 763.4,481.5 767.0,482.5 771.7,483.5 768.8,484.5 765.0,485.5 765.4,486.5 764.7,487.5 765.1,488.5 765.6,489.5 764.5,490.5 765.6,491.5 764.7,492.5 766.0,493.5 765.9,494.5 766.0,495.5 766.2,496.5 765.0,497.5 765.2,498.5 765.8,499.5 765.4,500.5 766.8,501.5 768.7,502.5 772.2,503.5 770.4,504.5 766.3,505.5 767.2,506.5 766.5,507.5 766.9,508.5 767.5,509.5 766.4,510.5 766.8,511.5 767.1,512.5 767.8,513.5 767.2,514.5 767.5,515.5 767.3,516.5 768.0,517.5 767.9,518.5 768.4,519.5 767.5,520.5 768.5,521.5 769.2,522.5 768.2,523.5 771.3,524.5 775.6,525.5 772.0,526.5 769.4,527.5 769.1,528.5 768.8,529.5 769.2,530.5 770.1,531.5 769.9,532.5 769.4,533.5 770.1,534.5 771.1,535.5 770.4,536.5 771.9,537.5 771.6,538.5 772.4,539.5 772.8,540.5 774.1,541.5 774.9,542.5 775.6,543.5 776.0,544.5 776.6,545.5 776.6,546.5 777.4,547.5 777.9,548.5 784.9,549.5 797.9,550.5 812.6,551.5 802.4,552.5 790.3,553.5 782.8,554.5 783.8,555.5 784.5,556.5 785.2,557.5 785.8,558.5 786.6,559.5 787.0,560.5 787.1,561.5 787.1,562.5 787.1,563.5 787.2,564.5 787.2,565.5 787.2,566.5 787.3,567.5 787.3,568.5 787.3,569.5 787.4,570.5 787.4,571.5 787.4,572.5 787.5,573.5 787.5,574.5 787.5,575.5 787.6,576.5 787.6,577.5 787.6,578.5 787.7,579.5 787.7,580.5 787.7,581.5 787.8,582.5 787.8,583.5 787.8,584.5 787.9,585.5 787.9,586.5 787.9,587.5 788.0,588.5 788.0,589.5 788.0,590.5 788.1,591.5 788.1,592.5 788.1,593.5 788.2,594.5 788.2,595.5 788.2,596.5 788.3,597.5 788.3,598.5 788.3,599.5 788.4,600.5 788.4,601.5 788.4,602.5 788.5,603.5 788.5,604.5 788.5,605.5 788.6,606.5 788.6,607.5 788.6,608.5 788.7,609.5 788.7,610.5 788.7,611.5 788.8,612.5 788.8,613.5 788.8,614.5 788.9,615.5 788.9,616.5 788.9,617.5 789.0,618.5 789.0,619.0 788.5,619.8 787.8,621.0 787.0,622.3 786.1,623.8 785.3,625.3 784.6,626.9 784.1,628.5 784.0,630.0 784.3,631.5 785.0,632.9 786.0,634.4 787.1,635.9 788.2,637.5 789.2,639.0 789.8,640.5 790.0,642.0 789.7,643.5 788.9,645.0 787.8,646.6 786.6,648.1 785.3,649.6 784.2,651.1 783.4,652.6 783.0,654.0 783.1,655.4 783.6,656.7 784.3,658.1 785.2,659.4 786.2,660.6 787.0,661.8 787.7,663.0 788.0,664.0 788.0,665.0 787.7,665.9 787.3,666.8 786.8,667.6 786.3,668.4 785.7,669.0 785.3,669.6 785.0,670.0" fill="none" stroke="#f4b2ae" stroke-width="1.6" stroke-linejoin="round"/>
<polyline points="689.2,203.5 689.5,204.5 689.9,205.5 690.2,206.5 690.6,207.5 690.9,208.5 691.3,209.5 691.6,210.5 691.9,211.5 692.3,212.5 692.6,213.5 693.0,214.5 693.3,215.5 693.7,216.5 694.0,217.5 694.4,218.5 694.7,219.5 695.1,220.5 695.4,221.5 695.7,222.5 696.1,223.5 696.4,224.5 696.8,225.5 697.2,226.5 697.5,227.5 697.8,228.5 698.2,229.5 698.5,230.5 698.9,231.5 699.2,232.5 699.6,233.5 699.9,234.5 700.3,235.5 700.6,236.5 700.9,237.5 701.3,238.5 701.7,239.5 702.0,240.5 702.4,241.5 702.7,242.5 703.0,243.5 703.4,244.5 703.7,245.5 704.1,246.5 704.4,247.5 704.8,248.5 705.2,249.5 705.5,250.5 705.7,251.5 706.0,252.5 706.3,253.5 706.5,254.5 706.8,255.5 707.1,256.5 707.3,257.5 707.7,258.5 708.0,259.5 708.2,260.5 708.5,261.5 708.8,262.5 709.0,263.5 709.2,264.5 709.6,265.5 709.9,266.5 710.2,267.5 710.5,268.5 710.8,269.5 710.9,270.5 711.3,271.5 711.5,272.5 711.7,273.5 712.0,274.5 712.4,275.5 712.6,276.5 713.0,277.5 713.2,278.5 713.5,279.5 713.7,280.5 714.1,281.5 714.4,282.5 714.5,283.5 714.9,284.5 715.1,285.5 715.4,286.5 715.8,287.5 716.0,288.5 716.2,289.5 716.4,290.5 716.9,291.5 717.2,292.5 717.5,293.5 717.6,294.5 717.9,295.5 718.2,296.5 718.4,297.5 718.8,298.5 719.1,299.5 719.5,300.5 720.0,301.5 720.2,302.5 720.8,303.5 721.1,304.5 721.4,305.5 721.8,306.5 722.1,307.5 722.6,308.5 722.8,309.5 723.4,310.5 723.6,311.5 724.0,312.5 724.4,313.5 724.7,314.5 725.0,315.5 725.4,316.5 725.9,317.5 726.2,318.5 726.7,319.5 727.0,320.5 727.2,321.5 727.6,322.5 728.2,323.5 728.5,324.5 728.7,325.5 729.2,326.5 729.6,327.5 730.0,328.5 730.3,329.5 730.7,330.5 730.7,331.5 731.1,332.5 731.3,333.5 731.4,334.5 731.5,335.5 731.7,336.5 732.1,337.5 732.3,338.5 732.5,339.5 732.5,340.5 732.7,341.5 733.1,342.5 733.1,343.5 733.4,344.5 733.5,345.5 733.8,346.5 734.1,347.5 734.5,348.5 734.3,349.5 734.6,350.5 734.8,351.5 735.0,352.5 735.3,353.5 735.3,354.5 735.6,355.5 735.8,356.5 736.4,357.5 736.2,358.5 736.7,359.5 736.9,360.5 737.1,361.5 737.1,362.5 737.3,363.5 737.6,364.5 737.7,365.5 737.9,366.5 738.1,367.5 738.1,368.5 738.7,369.5 738.8,370.5 738.7,371.5 739.1,372.5 739.1,373.5 739.6,374.5 739.8,375.5 742.5,376.5 745.2,377.5 744.5,378.5 741.7,379.5 740.5,380.5 740.8,381.5 741.1,382.5 740.9,383.5 741.3,384.5 741.9,385.5 742.1,386.5 742.3,387.5 741.6,388.5 742.4,389.5 742.6,390.5 742.4,391.5 745.5,392.5 750.3,393.5 748.4,394.5 745.0,395.5 743.3,396.5 744.0,397.5 744.0,398.5 743.9,399.5 744.4,400.5 744.8,401.5 744.7,402.5 744.4,403.5 747.7,404.5 753.2,405.5 751.6,406.5 746.9,407.5 745.2,408.5 745.9,409.5 746.1,410.5 745.9,411.5 746.5,412.5 746.6,413.5 747.2,414.5 746.2,415.5 747.5,416.5 750.4,417.5 754.0,418.5 752.5,419.5 748.8,420.5 748.0,421.5 748.1,422.5 748.1,423.5 748.9,424.5 748.6,425.5 748.9,426.5 749.2,427.5 753.3,428.5 757.7,429.5 755.7,430.5 751.2,431.5 750.4,432.5 750.9,433.5 750.8,434.5 750.6,435.5 751.8,436.5 752.5,437.5 752.8,438.5 752.3,439.5 752.4,440.5 753.5,441.5 756.5,442.5 761.2,443.5 760.6,444.5 756.9,445.5 755.7,446.5 756.7,447.5 756.7,448.5 756.3,449.5 756.9,450.5 756.7,451.5 757.9,452.5 757.0,453.5 756.8,454.5 757.7,455.5 757.9,456.5 757.0,457.5 756.9,458.5 757.0,459.5 758.8,460.5 763.0,461.5 760.7,462.5 759.2,463.5 758.0,464.5 757.3,465.5 757.7,466.5 758.1,467.5 757.0,468.5 757.9,469.5 758.3,470.5 757.7,471.5 758.3,472.5 757.4,473.5 757.0,474.5 757.4,475.5 758.7,476.5 757.7,477.5 757.7,478.5 757.3,479.5 760.4,480.5 764.0,481.5 763.0,482.5 758.7,483.5 757.8,484.5 757.8,485.5 759.3,486.5 759.2,487.5 758.4,488.5 758.6,489.5 758.6,490.5 759.1,491.5 759.3,492.5 759.7,493.5 759.6,494.5 758.8,495.5 759.8,496.5 759.0,497.5 759.7,498.5 759.2,499.5 762.0,500.5 764.9,501.5 764.7,502.5 761.1,503.5 760.9,504.5 759.9,505.5 760.2,506.5 760.7,507.5 760.8,508.5 760.3,509.5 761.3,510.5 761.3,511.5 761.8,512.5 762.2,513.5 762.0,514.5 761.3,515.5 762.0,516.5 761.9,517.5 761.3,518.5 762.3,519.5 761.9,520.5 761.9,521.5 764.9,522.5 767.5,523.5 767.5,524.5 764.4,525.5 762.5,526.5 763.9,527.5 762.7,528.5 763.5,529.5 764.1,530.5 763.3,531.5 764.2,532.5 763.8,533.5 763.5,534.5 764.8,535.5 764.9,536.5 766.0,537.5 766.8,538.5 766.6,539.5 768.2,540.5 768.4,541.5 769.0,542.5 769.3,543.5 770.3,544.5 769.9,545.5 770.6,546.5 774.6,547.5 788.0,548.5 801.0,549.5 796.9,550.5 785.1,551.5 775.7,552.5 776.4,553.5 776.8,554.5 777.4,555.5 778.3,556.5 779.2,557.5 779.9,558.5 780.6,559.5 781.0,560.5 781.1,561.5 781.1,562.5 781.1,563.5 781.2,564.5 781.2,565.5 781.2,566.5 781.3,567.5 781.3,568.5 781.3,569.5 781.4,570.5 781.4,571.5 781.4,572.5 781.5,573.5 781.5,574.5 781.5,575.5 781.6,576.5 781.6,577.5 781.6,578.5 781.7,579.5 781.7,580.5 781.7,581.5 781.8,582.5 781.8,583.5 781.8,584.5 781.9,585.5 781.9,586.5 781.9,587.5 782.0,588.5 782.0,589.5 782.0,590.5 782.1,591.5 782.1,592.5 782.1,593.5 782.2,594.5 782.2,595.5 782.2,596.5 782.3,597.5 782.3,598.5 782.3,599.5 782.4,600.5 782.4,601.5 782.4,602.5 782.5,603.5 782.5,604.5 782.5,605.5 782.6,606.5 782.6,607.5 782.6,608.5 782.7,609.5 782.7,610.5 782.7,611.5 782.8,612.5 782.8,613.5 782.8,614.5 782.9,615.5 782.9,616.5 782.9,617.5 783.0,618.5 783.0,619.0 782.5,619.8 781.8,620.8 781.0,621.9 780.1,623.2 779.3,624.7 778.6,626.1 778.1,627.6 778.0,629.0 778.3,630.4 779.0,631.9 780.0,633.4 781.1,634.9 782.2,636.4 783.2,638.0 783.8,639.5 784.0,641.0 783.7,642.5 782.9,644.0 781.8,645.6 780.6,647.1 779.3,648.6 778.2,650.1 777.4,651.6 777.0,653.0 777.1,654.4 777.6,655.7 778.3,657.0 779.2,658.3 780.2,659.6 781.0,660.8 781.7,661.9 782.0,663.0 782.0,664.1 781.7,665.1 781.3,666.2 780.8,667.1 780.3,668.0 779.7,668.8 779.3,669.5 779.0,670.0" fill="none" stroke="#ea8f8b" stroke-width="1.6" stroke-linejoin="round"/>
<polyline points="689.2,203.5 689.5,204.5 689.8,205.5 690.1,206.5 690.4,207.5 690.8,208.5 691.1,209.5 691.4,210.5 691.7,211.5 692.0,212.5 692.3,213.5 692.7,214.5 693.0,215.5 693.3,216.5 693.6,217.5 694.0,218.5 694.3,219.5 694.6,220.5 694.9,221.5 695.2,222.5 695.5,223.5 695.9,224.5 696.2,225.5 696.5,226.5 696.8,227.5 697.1,228.5 697.5,229.5 697.8,230.5 698.1,231.5 698.4,232.5 698.7,233.5 699.1,234.5 699.4,235.5 699.7,236.5 700.0,237.5 700.3,238.5 700.6,239.5 701.0,240.5 701.3,241.5 701.6,242.5 702.0,243.5 702.3,244.5 702.6,245.5 702.9,246.5 703.2,247.5 703.6,248.5 703.8,249.5 704.1,250.5 704.4,251.5 704.6,252.5 704.9,253.5 705.2,254.5 705.4,255.5 705.7,256.5 705.9,257.5 706.1,258.5 706.3,259.5 706.6,260.5 706.8,261.5 707.1,262.5 707.3,263.5 707.6,264.5 707.8,265.5 708.1,266.5 708.4,267.5 708.7,268.5 708.9,269.5 709.1,270.5 709.3,271.5 709.5,272.5 709.9,273.5 710.2,274.5 710.4,275.5 710.6,276.5 711.0,277.5 711.1,278.5 711.3,279.5 711.6,280.5 711.9,281.5 712.0,282.5 712.5,283.5 712.6,284.5 712.9,285.5 713.0,286.5 713.3,287.5 713.7,288.5 714.0,289.5 714.2,290.5 714.3,291.5 714.5,292.5 714.8,293.5 715.0,294.5 715.4,295.5 715.6,296.5 715.8,297.5 716.1,298.5 716.5,299.5 716.9,300.5 717.2,301.5 717.5,302.5 718.0,303.5 718.1,304.5 718.6,305.5 719.0,306.5 719.2,307.5 719.5,308.5 720.1,309.5 720.3,310.5 720.6,311.5 721.0,312.5 721.2,313.5 721.8,314.5 721.9,315.5 722.3,316.5 722.6,317.5 723.1,318.5 723.5,319.5 723.7,320.5 724.2,321.5 724.4,322.5 724.8,323.5 725.2,324.5 725.4,325.5 725.9,326.5 726.1,327.5 726.4,328.5 726.9,329.5 727.1,330.5 727.1,331.5 727.6,332.5 727.7,333.5 727.8,334.5 728.1,335.5 728.3,336.5 728.2,337.5 728.4,338.5 728.7,339.5 728.9,340.5 729.2,341.5 729.1,342.5 729.3,343.5 729.6,344.5 730.0,345.5 729.8,346.5 730.4,347.5 730.4,348.5 730.5,349.5 730.5,350.5 730.9,351.5 731.1,352.5 731.0,353.5 731.4,354.5 731.9,355.5 732.1,356.5 732.1,357.5 732.1,358.5 732.6,359.5 732.3,360.5 732.9,361.5 733.0,362.5 732.9,363.5 733.2,364.5 733.4,365.5 733.8,366.5 733.9,367.5 733.8,368.5 734.4,369.5 734.4,370.5 734.7,371.5 734.6,372.5 734.8,373.5 736.5,374.5 739.5,375.5 740.1,376.5 737.1,377.5 735.6,378.5 735.9,379.5 736.1,380.5 736.5,381.5 736.0,382.5 736.1,383.5 736.9,384.5 737.1,385.5 737.1,386.5 737.1,387.5 737.6,388.5 737.7,389.5 739.1,390.5 743.8,391.5 744.1,392.5 739.7,393.5 738.4,394.5 738.6,395.5 738.4,396.5 738.4,397.5 738.8,398.5 739.2,399.5 739.1,400.5 739.7,401.5 741.5,402.5 746.0,403.5 745.9,404.5 742.2,405.5 739.9,406.5 740.1,407.5 740.8,408.5 740.8,409.5 740.8,410.5 740.8,411.5 740.5,412.5 740.9,413.5 740.9,414.5 743.2,415.5 748.0,416.5 747.7,417.5 744.2,418.5 742.1,419.5 742.0,420.5 742.8,421.5 742.6,422.5 742.4,423.5 742.7,424.5 743.2,425.5 746.1,426.5 750.1,427.5 750.3,428.5 746.3,429.5 743.4,430.5 743.4,431.5 744.8,432.5 744.7,433.5 744.5,434.5 746.0,435.5 745.7,436.5 745.4,437.5 745.8,438.5 746.4,439.5 749.9,440.5 753.9,441.5 754.5,442.5 750.7,443.5 749.2,444.5 749.0,445.5 749.5,446.5 749.9,447.5 750.8,448.5 750.6,449.5 751.4,450.5 750.6,451.5 751.0,452.5 751.2,453.5 750.5,454.5 750.5,455.5 751.4,456.5 750.7,457.5 752.7,458.5 756.5,459.5 756.0,460.5 753.1,461.5 751.6,462.5 751.1,463.5 751.0,464.5 751.1,465.5 751.0,466.5 751.1,467.5 751.6,468.5 751.7,469.5 752.1,470.5 751.8,471.5 751.1,472.5 751.6,473.5 751.6,474.5 751.3,475.5 752.6,476.5 751.5,477.5 754.1,478.5 756.7,479.5 757.3,480.5 753.4,481.5 752.9,482.5 752.7,483.5 753.0,484.5 753.3,485.5 752.3,486.5 752.6,487.5 752.9,488.5 753.3,489.5 753.6,490.5 753.2,491.5 753.1,492.5 753.9,493.5 753.0,494.5 753.6,495.5 753.1,496.5 753.9,497.5 755.2,498.5 757.7,499.5 759.0,500.5 756.4,501.5 754.2,502.5 753.6,503.5 755.2,504.5 754.3,505.5 754.9,506.5 754.0,507.5 755.0,508.5 755.4,509.5 754.7,510.5 755.0,511.5 756.0,512.5 754.7,513.5 755.5,514.5 754.9,515.5 755.6,516.5 756.4,517.5 755.4,518.5 756.3,519.5 757.9,520.5 761.4,521.5 761.5,522.5 758.5,523.5 757.0,524.5 757.5,525.5 757.3,526.5 756.7,527.5 756.5,528.5 757.6,529.5 757.5,530.5 758.3,531.5 757.1,532.5 757.5,533.5 758.2,534.5 758.1,535.5 758.7,536.5 759.5,537.5 759.9,538.5 761.3,539.5 762.1,540.5 761.7,541.5 762.3,542.5 762.5,543.5 763.8,544.5 765.2,545.5 776.9,546.5 789.3,547.5 790.0,548.5 779.0,549.5 768.2,550.5 768.8,551.5 769.6,552.5 770.4,553.5 770.7,554.5 771.7,555.5 772.5,556.5 773.2,557.5 773.9,558.5 774.6,559.5 775.0,560.5 775.1,561.5 775.1,562.5 775.1,563.5 775.2,564.5 775.2,565.5 775.2,566.5 775.3,567.5 775.3,568.5 775.3,569.5 775.4,570.5 775.4,571.5 775.4,572.5 775.5,573.5 775.5,574.5 775.5,575.5 775.6,576.5 775.6,577.5 775.6,578.5 775.7,579.5 775.7,580.5 775.7,581.5 775.8,582.5 775.8,583.5 775.8,584.5 775.9,585.5 775.9,586.5 775.9,587.5 776.0,588.5 776.0,589.5 776.0,590.5 776.1,591.5 776.1,592.5 776.1,593.5 776.2,594.5 776.2,595.5 776.2,596.5 776.3,597.5 776.3,598.5 776.3,599.5 776.4,600.5 776.4,601.5 776.4,602.5 776.5,603.5 776.5,604.5 776.5,605.5 776.6,606.5 776.6,607.5 776.6,608.5 776.7,609.5 776.7,610.5 776.7,611.5 776.8,612.5 776.8,613.5 776.8,614.5 776.9,615.5 776.9,616.5 776.9,617.5 777.0,618.5 777.0,619.0 776.5,619.7 775.8,620.5 775.0,621.6 774.1,622.8 773.3,624.0 772.6,625.3 772.1,626.7 772.0,628.0 772.3,629.4 773.0,630.8 774.0,632.3 775.1,633.8 776.2,635.4 777.2,636.9 777.8,638.5 778.0,640.0 777.7,641.5 776.9,643.0 775.8,644.6 774.6,646.1 773.3,647.6 772.2,649.1 771.4,650.6 771.0,652.0 771.1,653.4 771.6,654.7 772.3,656.0 773.2,657.2 774.2,658.5 775.0,659.7 775.7,660.9 776.0,662.0 776.0,663.2 775.7,664.3 775.3,665.5 774.8,666.6 774.3,667.7 773.7,668.6 773.3,669.4 773.0,670.0" fill="none" stroke="#d96662" stroke-width="1.6" stroke-linejoin="round"/>
<polyline points="697.2,203.5 697.6,204.5 698.0,205.5 698.4,206.5 698.8,207.5 699.1,208.5 699.5,209.5 699.9,210.5 700.3,211.5 700.7,212.5 701.1,213.5 701.5,214.5 701.9,215.5 702.2,216.5 702.6,217.5 703.0,218.5 703.5,219.5 703.8,220.5 704.2,221.5 704.6,222.5 705.0,223.5 705.4,224.5 705.8,225.5 706.1,226.5 706.6,227.5 707.0,228.5 707.3,229.5 707.7,230.5 708.1,231.5 708.5,232.5 708.9,233.5 709.3,234.5 709.7,235.5 710.0,236.5 710.4,237.5 710.9,238.5 711.2,239.5 711.7,240.5 712.0,241.5 712.4,242.5 712.7,243.5 713.2,244.5 713.6,245.5 714.0,246.5 714.4,247.5 714.7,248.5 715.1,249.5 715.5,250.5 716.1,251.5 716.5,252.5 717.0,253.5 717.4,254.5 717.7,255.5 718.2,256.5 718.7,257.5 719.1,258.5 719.6,259.5 720.0,260.5 720.4,261.5 721.0,262.5 721.3,263.5 721.9,264.5 722.2,265.5 722.8,266.5 723.1,267.5 723.5,268.5 724.1,269.5 724.5,270.5 724.9,271.5 725.4,272.5 725.8,273.5 726.2,274.5 726.7,275.5 727.2,276.5 727.6,277.5 728.1,278.5 728.5,279.5 729.0,280.5 729.4,281.5 729.8,282.5 730.2,283.5 730.7,284.5 731.2,285.5 731.7,286.5 732.1,287.5 732.5,288.5 732.9,289.5 733.5,290.5 733.9,291.5 734.1,292.5 734.6,293.5 734.9,294.5 735.2,295.5 735.5,296.5 736.1,297.5 736.5,298.5 736.9,299.5 737.2,300.5 737.4,301.5 737.8,302.5 738.4,303.5 738.8,304.5 739.3,305.5 739.6,306.5 739.9,307.5 740.4,308.5 740.5,309.5 741.2,310.5 741.4,311.5 741.8,312.5 742.2,313.5 742.5,314.5 742.9,315.5 743.5,316.5 743.8,317.5 744.2,318.5 744.5,319.5 744.7,320.5 745.2,321.5 745.7,322.5 745.9,323.5 746.4,324.5 746.8,325.5 747.1,326.5 747.3,327.5 748.0,328.5 748.2,329.5 748.9,330.5 748.9,331.5 749.6,332.5 749.9,333.5 750.5,334.5 750.8,335.5 751.3,336.5 751.6,337.5 752.0,338.5 752.4,339.5 752.8,340.5 753.1,341.5 753.4,342.5 753.7,343.5 754.2,344.5 754.7,345.5 755.3,346.5 755.3,347.5 756.1,348.5 756.4,349.5 756.6,350.5 757.2,351.5 757.7,352.5 758.1,353.5 758.4,354.5 758.6,355.5 759.0,356.5 759.4,357.5 759.7,358.5 760.2,359.5 760.9,360.5 761.2,361.5 761.3,362.5 762.0,363.5 762.3,364.5 762.4,365.5 762.9,366.5 763.3,367.5 763.6,368.5 764.4,369.5 764.7,370.5 765.0,371.5 765.8,372.5 765.8,373.5 766.0,374.5 766.6,375.5 767.0,376.5 767.2,377.5 767.7,378.5 768.4,379.5 768.7,380.5 768.7,381.5 769.5,382.5 769.8,383.5 769.8,384.5 770.4,385.5 771.1,386.5 771.6,387.5 772.0,388.5 772.0,389.5 772.8,390.5 772.9,391.5 773.4,392.5 773.5,393.5 773.9,394.5 774.1,395.5 774.5,396.5 775.4,397.5 775.3,398.5 776.2,399.5 776.3,400.5 776.6,401.5 777.2,402.5 777.9,403.5 778.1,404.5 778.3,405.5 778.8,406.5 779.2,407.5 779.1,408.5 779.7,409.5 780.7,410.5 781.0,411.5 781.3,412.5 782.0,413.5 782.1,414.5 782.4,415.5 783.0,416.5 782.6,417.5 783.2,418.5 783.9,419.5 783.6,420.5 784.5,421.5 784.1,422.5 787.5,423.5 791.4,424.5 789.6,425.5 786.8,426.5 786.4,427.5 787.0,428.5 787.0,429.5 787.2,430.5 787.4,431.5 787.9,432.5 789.0,433.5 788.7,434.5 788.6,435.5 789.0,436.5 789.3,437.5 789.7,438.5 789.5,439.5 789.8,440.5 789.5,441.5 790.5,442.5 791.1,443.5 790.7,444.5 789.9,445.5 790.6,446.5 791.4,447.5 790.7,448.5 792.3,449.5 790.9,450.5 792.6,451.5 792.4,452.5 792.3,453.5 795.7,454.5 800.1,455.5 803.1,456.5 801.2,457.5 797.8,458.5 792.5,459.5 793.9,460.5 793.3,461.5 794.1,462.5 792.8,463.5 794.3,464.5 793.8,465.5 794.3,466.5 793.9,467.5 793.4,468.5 794.5,469.5 795.4,470.5 794.4,471.5 794.4,472.5 795.4,473.5 795.1,474.5 794.7,475.5 799.6,476.5 808.4,477.5 819.1,478.5 812.2,479.5 803.8,480.5 798.7,481.5 799.4,482.5 809.9,483.5 833.4,484.5 855.3,485.5 840.9,486.5 820.5,487.5 809.7,488.5 815.8,489.5 821.8,490.5 829.3,491.5 837.3,492.5 845.4,493.5 853.2,494.5 855.0,495.5 855.6,496.5 864.1,497.5 883.6,498.5 903.4,499.5 885.4,500.5 863.2,501.5 847.0,502.5 846.0,503.5 845.0,504.5 843.8,505.5 842.6,506.5 848.6,507.5 872.6,508.5 897.2,509.5 876.3,510.5 848.7,511.5 835.6,512.5 833.6,513.5 834.0,514.5 833.9,515.5 844.4,516.5 861.4,517.5 872.1,518.5 853.8,519.5 833.8,520.5 831.2,521.5 829.5,522.5 830.2,523.5 828.9,524.5 828.9,525.5 829.2,526.5 826.7,527.5 827.6,528.5 842.2,529.5 860.8,530.5 859.4,531.5 840.8,532.5 822.8,533.5 823.5,534.5 823.0,535.5 821.4,536.5 828.3,537.5 848.9,538.5 867.5,539.5 851.4,540.5 831.3,541.5 822.4,542.5 823.6,543.5 823.8,544.5 822.6,545.5 823.3,546.5 829.5,547.5 838.7,548.5 833.9,549.5 826.5,550.5 826.1,551.5 826.5,552.5 827.5,553.5 828.2,554.5 828.9,555.5 830.1,556.5 831.0,557.5 831.7,558.5 832.6,559.5 833.1,560.5 833.2,561.5 833.3,562.5 833.4,563.5 833.5,564.5 833.6,565.5 833.7,566.5 833.8,567.5 833.9,568.5 834.0,569.5 834.1,570.5 834.2,571.5 834.3,572.5 834.4,573.5 834.5,574.5 834.6,575.5 834.7,576.5 834.8,577.5 834.9,578.5 835.0,579.5 835.1,580.5 835.2,581.5 835.3,582.5 835.4,583.5 835.5,584.5 835.6,585.5 835.7,586.5 835.8,587.5 835.9,588.5 836.0,589.5 836.1,590.5 836.2,591.5 836.3,592.5 836.4,593.5 836.5,594.5 836.6,595.5 836.7,596.5 836.8,597.5 836.9,598.5 837.0,599.5 837.1,600.5 837.2,601.5 837.3,602.5 837.4,603.5 837.5,604.5 837.6,605.5 837.7,606.5 837.8,607.5 837.9,608.5 838.0,609.5 838.1,610.5 838.2,611.5 838.3,612.5 838.4,613.5 838.5,614.5 838.6,615.5 838.7,616.5 838.8,617.5 838.9,618.5 838.3,619.0 838.6,619.8 838.9,620.9 839.4,622.2 839.8,623.7 840.4,625.2 840.9,626.6 841.4,628.0 842.0,629.2 842.7,630.2 843.5,631.1 844.4,632.0 845.2,632.8 846.0,633.6 846.6,634.4 847.0,635.3 847.0,636.2 846.5,637.2 845.5,638.2 844.1,639.3 842.6,640.3 841.2,641.4 840.0,642.5 839.2,643.5 839.0,644.5 839.4,645.5 840.3,646.5 841.6,647.4 843.1,648.4 844.8,649.3 846.6,650.2 848.4,651.1 850.0,652.0 851.7,652.9 853.7,653.7 855.8,654.6 857.9,655.4 859.9,656.3 861.6,657.0 862.9,657.8 863.8,658.5 864.1,659.1 863.9,659.7 863.3,660.2 862.5,660.7 861.5,661.2 860.6,661.7 859.7,662.3 859.0,663.0 858.5,663.8 857.9,664.7 857.4,665.7 856.9,666.8 856.4,667.8 855.9,668.7 855.6,669.4 855.3,670.0" fill="none" stroke="#96e6b6" stroke-width="1.6" stroke-linejoin="round"/>
<polyline points="697.2,203.5 697.5,204.5 697.9,205.5 698.2,206.5 698.6,207.5 699.0,208.5 699.3,209.5 699.7,210.5 700.0,211.5 700.4,212.5 700.7,213.5 701.1,214.5 701.4,215.5 701.8,216.5 702.2,217.5 702.5,218.5 702.9,219.5 703.2,220.5 703.5,221.5 703.9,222.5 704.3,223.5 704.7,224.5 705.0,225.5 705.4,226.5 705.7,227.5 706.1,228.5 706.4,229.5 706.7,230.5 707.1,231.5 707.5,232.5 707.8,233.5 708.2,234.5 708.5,235.5 708.9,236.5 709.2,237.5 709.5,238.5 710.0,239.5 710.3,240.5 710.6,241.5 711.0,242.5 711.3,243.5 711.7,244.5 712.0,245.5 712.5,246.5 712.8,247.5 713.1,248.5 713.4,249.5 713.9,250.5 714.2,251.5 714.8,252.5 715.1,253.5 715.5,254.5 715.9,255.5 716.3,256.5 716.8,257.5 717.1,258.5 717.5,259.5 718.0,260.5 718.5,261.5 718.9,262.5 719.2,263.5 719.6,264.5 720.0,265.5 720.4,266.5 720.9,267.5 721.2,268.5 721.6,269.5 722.1,270.5 722.6,271.5 722.9,272.5 723.3,273.5 723.8,274.5 724.2,275.5 724.6,276.5 724.9,277.5 725.4,278.5 725.7,279.5 726.1,280.5 726.6,281.5 727.0,282.5 727.3,283.5 727.7,284.5 728.3,285.5 728.6,286.5 729.2,287.5 729.5,288.5 730.0,289.5 730.3,290.5 730.5,291.5 731.0,292.5 731.2,293.5 731.6,294.5 732.1,295.5 732.4,296.5 732.8,297.5 733.0,298.5 733.5,299.5 733.7,300.5 734.0,301.5 734.5,302.5 734.8,303.5 735.1,304.5 735.6,305.5 735.8,306.5 736.3,307.5 736.5,308.5 736.8,309.5 737.4,310.5 737.6,311.5 737.9,312.5 738.3,313.5 738.6,314.5 738.8,315.5 739.2,316.5 739.6,317.5 740.0,318.5 740.3,319.5 740.7,320.5 741.0,321.5 741.5,322.5 741.7,323.5 742.0,324.5 742.3,325.5 742.9,326.5 743.1,327.5 743.4,328.5 743.7,329.5 744.0,330.5 744.8,331.5 744.8,332.5 745.2,333.5 745.6,334.5 746.0,335.5 746.7,336.5 746.7,337.5 747.5,338.5 747.7,339.5 748.1,340.5 748.5,341.5 749.0,342.5 749.1,343.5 749.6,344.5 749.8,345.5 750.5,346.5 750.6,347.5 751.4,348.5 751.6,349.5 752.2,350.5 752.6,351.5 752.8,352.5 752.8,353.5 753.4,354.5 754.0,355.5 754.3,356.5 754.7,357.5 754.8,358.5 755.2,359.5 755.8,360.5 756.3,361.5 756.3,362.5 757.1,363.5 757.2,364.5 757.6,365.5 758.2,366.5 758.6,367.5 758.7,368.5 759.4,369.5 759.9,370.5 759.9,371.5 760.7,372.5 761.1,373.5 761.5,374.5 761.6,375.5 762.0,376.5 762.0,377.5 762.7,378.5 763.5,379.5 763.8,380.5 763.5,381.5 764.6,382.5 764.4,383.5 764.9,384.5 765.1,385.5 765.5,386.5 766.2,387.5 766.8,388.5 766.8,389.5 767.5,390.5 767.7,391.5 767.8,392.5 768.1,393.5 769.1,394.5 769.1,395.5 770.0,396.5 769.8,397.5 770.0,398.5 771.0,399.5 771.3,400.5 771.9,401.5 771.7,402.5 772.6,403.5 772.3,404.5 773.3,405.5 773.5,406.5 773.5,407.5 773.8,408.5 774.5,409.5 775.0,410.5 775.3,411.5 776.0,412.5 775.7,413.5 776.3,414.5 776.3,415.5 776.7,416.5 777.8,417.5 778.1,418.5 778.4,419.5 778.4,420.5 781.1,421.5 784.1,422.5 783.1,423.5 781.1,424.5 779.8,425.5 780.9,426.5 781.5,427.5 780.6,428.5 781.3,429.5 781.4,430.5 781.9,431.5 783.3,432.5 783.0,433.5 783.2,434.5 783.0,435.5 783.6,436.5 783.6,437.5 783.3,438.5 783.6,439.5 783.7,440.5 784.1,441.5 784.6,442.5 785.0,443.5 784.4,444.5 784.8,445.5 785.8,446.5 785.8,447.5 785.0,448.5 785.9,449.5 786.4,450.5 787.1,451.5 788.3,452.5 791.8,453.5 796.4,454.5 795.6,455.5 790.6,456.5 787.8,457.5 787.6,458.5 787.1,459.5 786.7,460.5 788.5,461.5 788.2,462.5 787.5,463.5 787.3,464.5 787.8,465.5 788.6,466.5 789.0,467.5 789.8,468.5 787.8,469.5 789.2,470.5 789.8,471.5 788.5,472.5 788.9,473.5 792.3,474.5 800.6,475.5 810.1,476.5 805.8,477.5 799.3,478.5 793.1,479.5 792.7,480.5 796.2,481.5 819.4,482.5 841.1,483.5 834.8,484.5 815.9,485.5 801.6,486.5 802.1,487.5 803.7,488.5 810.1,489.5 817.1,490.5 824.5,491.5 832.2,492.5 838.6,493.5 847.4,494.5 857.0,495.5 876.1,496.5 894.1,497.5 884.7,498.5 864.3,499.5 844.0,500.5 844.0,501.5 842.9,502.5 840.1,503.5 839.0,504.5 840.7,505.5 862.6,506.5 885.8,507.5 875.8,508.5 849.9,509.5 832.8,510.5 829.9,511.5 830.4,512.5 829.8,513.5 835.0,514.5 851.3,515.5 869.7,516.5 851.4,517.5 832.0,518.5 824.6,519.5 826.0,520.5 823.7,521.5 824.8,522.5 823.8,523.5 824.4,524.5 822.3,525.5 823.5,526.5 834.5,527.5 851.5,528.5 857.3,529.5 838.9,530.5 821.1,531.5 817.8,532.5 818.0,533.5 817.3,534.5 818.6,535.5 838.2,536.5 857.0,537.5 847.9,538.5 830.3,539.5 816.8,540.5 817.6,541.5 816.7,542.5 816.7,543.5 817.3,544.5 822.9,545.5 829.9,546.5 827.8,547.5 820.8,548.5 819.0,549.5 819.9,550.5 820.3,551.5 821.2,552.5 822.0,553.5 823.2,554.5 823.8,555.5 824.8,556.5 825.3,557.5 826.4,558.5 827.0,559.5 827.6,560.5 827.7,561.5 827.8,562.5 827.9,563.5 828.0,564.5 828.1,565.5 828.2,566.5 828.3,567.5 828.4,568.5 828.5,569.5 828.6,570.5 828.7,571.5 828.8,572.5 828.9,573.5 829.0,574.5 829.1,575.5 829.2,576.5 829.3,577.5 829.4,578.5 829.5,579.5 829.6,580.5 829.7,581.5 829.8,582.5 829.9,583.5 830.0,584.5 830.1,585.5 830.2,586.5 830.3,587.5 830.4,588.5 830.5,589.5 830.6,590.5 830.7,591.5 830.8,592.5 830.9,593.5 831.0,594.5 831.1,595.5 831.2,596.5 831.3,597.5 831.4,598.5 831.5,599.5 831.6,600.5 831.7,601.5 831.8,602.5 831.9,603.5 832.0,604.5 832.1,605.5 832.2,606.5 832.3,607.5 832.4,608.5 832.5,609.5 832.6,610.5 832.7,611.5 832.8,612.5 832.9,613.5 833.0,614.5 833.1,615.5 833.2,616.5 833.3,617.5 833.4,618.5 832.7,619.0 832.9,619.8 833.3,620.9 833.6,622.2 834.0,623.7 834.5,625.2 835.0,626.6 835.5,628.0 836.0,629.2 836.6,630.2 837.4,631.2 838.3,632.0 839.2,632.9 840.0,633.7 840.6,634.5 841.0,635.3 841.0,636.2 840.5,637.1 839.5,638.1 838.1,639.1 836.6,640.1 835.2,641.1 834.0,642.1 833.2,643.1 833.0,644.0 833.5,644.9 834.4,645.8 835.6,646.7 837.2,647.5 838.9,648.4 840.7,649.3 842.4,650.1 844.0,651.0 845.6,651.9 847.5,652.8 849.5,653.7 851.4,654.7 853.3,655.6 854.9,656.4 856.2,657.2 857.0,658.0 857.3,658.7 857.2,659.2 856.8,659.7 856.1,660.2 855.3,660.7 854.5,661.2 853.7,661.8 853.0,662.5 852.4,663.3 851.7,664.3 851.0,665.4 850.2,666.5 849.6,667.6 848.9,668.6 848.4,669.4 848.0,670.0" fill="none" stroke="#52d38a" stroke-width="1.6" stroke-linejoin="round"/>
<polyline points="697.2,203.5 697.5,204.5 697.8,205.5 698.1,206.5 698.4,207.5 698.8,208.5 699.1,209.5 699.4,210.5 699.7,211.5 700.0,212.5 700.3,213.5 700.7,214.5 701.0,215.5 701.3,216.5 701.6,217.5 701.9,218.5 702.3,219.5 702.6,220.5 702.9,221.5 703.2,222.5 703.5,223.5 703.9,224.5 704.2,225.5 704.5,226.5 704.8,227.5 705.2,228.5 705.5,229.5 705.8,230.5 706.1,231.5 706.5,232.5 706.8,233.5 707.1,234.5 707.3,235.5 707.7,236.5 708.1,237.5 708.4,238.5 708.6,239.5 709.0,240.5 709.3,241.5 709.6,242.5 710.0,243.5 710.3,244.5 710.6,245.5 710.8,246.5 711.2,247.5 711.6,248.5 711.8,249.5 712.2,250.5 712.6,251.5 712.9,252.5 713.4,253.5 713.7,254.5 714.0,255.5 714.5,256.5 714.9,257.5 715.1,258.5 715.7,259.5 715.9,260.5 716.3,261.5 716.6,262.5 717.0,263.5 717.5,264.5 717.7,265.5 718.2,266.5 718.7,267.5 719.0,268.5 719.2,269.5 719.6,270.5 720.1,271.5 720.4,272.5 720.9,273.5 721.2,274.5 721.6,275.5 721.9,276.5 722.2,277.5 722.7,278.5 723.1,279.5 723.4,280.5 723.9,281.5 724.2,282.5 724.5,283.5 724.8,284.5 725.2,285.5 725.6,286.5 726.0,287.5 726.3,288.5 726.9,289.5 727.1,290.5 727.4,291.5 727.8,292.5 728.1,293.5 728.4,294.5 728.7,295.5 729.1,296.5 729.3,297.5 729.7,298.5 729.9,299.5 730.2,300.5 730.5,301.5 730.9,302.5 731.2,303.5 731.5,304.5 731.9,305.5 732.2,306.5 732.3,307.5 732.6,308.5 733.0,309.5 733.3,310.5 733.8,311.5 734.1,312.5 734.2,313.5 734.8,314.5 735.1,315.5 735.3,316.5 735.6,317.5 735.8,318.5 736.3,319.5 736.4,320.5 736.8,321.5 737.2,322.5 737.4,323.5 737.9,324.5 738.0,325.5 738.3,326.5 738.8,327.5 738.9,328.5 739.3,329.5 739.7,330.5 739.9,331.5 740.3,332.5 740.9,333.5 741.4,334.5 741.4,335.5 741.8,336.5 742.1,337.5 742.5,338.5 742.9,339.5 743.5,340.5 743.8,341.5 744.1,342.5 744.5,343.5 744.9,344.5 745.2,345.5 745.8,346.5 745.9,347.5 746.4,348.5 746.8,349.5 747.0,350.5 747.5,351.5 747.8,352.5 748.4,353.5 748.5,354.5 748.9,355.5 749.2,356.5 749.6,357.5 750.2,358.5 750.4,359.5 751.1,360.5 751.3,361.5 751.4,362.5 752.0,363.5 752.7,364.5 753.0,365.5 753.5,366.5 753.3,367.5 753.7,368.5 754.1,369.5 754.8,370.5 755.3,371.5 755.2,372.5 755.5,373.5 756.2,374.5 756.4,375.5 756.8,376.5 757.2,377.5 758.0,378.5 757.8,379.5 758.6,380.5 758.5,381.5 759.2,382.5 759.5,383.5 759.5,384.5 760.6,385.5 760.7,386.5 761.0,387.5 761.7,388.5 761.8,389.5 761.7,390.5 762.3,391.5 762.6,392.5 763.6,393.5 763.9,394.5 764.1,395.5 764.6,396.5 764.6,397.5 764.6,398.5 765.8,399.5 766.0,400.5 766.5,401.5 766.7,402.5 766.7,403.5 767.3,404.5 767.2,405.5 768.4,406.5 768.6,407.5 768.4,408.5 769.1,409.5 769.2,410.5 769.7,411.5 770.3,412.5 770.3,413.5 770.8,414.5 771.7,415.5 772.0,416.5 772.2,417.5 772.7,418.5 773.9,419.5 777.6,420.5 778.0,421.5 775.7,422.5 773.4,423.5 774.7,424.5 774.9,425.5 775.1,426.5 775.4,427.5 775.9,428.5 776.5,429.5 776.4,430.5 777.1,431.5 776.9,432.5 777.9,433.5 777.7,434.5 778.3,435.5 777.6,436.5 778.7,437.5 778.2,438.5 779.3,439.5 779.2,440.5 778.2,441.5 779.1,442.5 779.1,443.5 779.0,444.5 779.3,445.5 779.1,446.5 781.0,447.5 779.6,448.5 781.3,449.5 782.8,450.5 785.4,451.5 788.9,452.5 790.1,453.5 786.1,454.5 782.3,455.5 781.4,456.5 781.9,457.5 780.8,458.5 782.2,459.5 781.4,460.5 782.3,461.5 783.0,462.5 783.1,463.5 782.1,464.5 783.4,465.5 782.8,466.5 782.9,467.5 783.3,468.5 783.1,469.5 783.5,470.5 784.6,471.5 784.4,472.5 791.6,473.5 799.4,474.5 801.3,475.5 792.3,476.5 785.9,477.5 786.5,478.5 787.7,479.5 806.9,480.5 826.8,481.5 827.3,482.5 809.7,483.5 792.2,484.5 795.0,485.5 794.7,486.5 797.8,487.5 798.5,488.5 803.6,489.5 811.2,490.5 817.9,491.5 825.4,492.5 836.0,493.5 863.4,494.5 884.1,495.5 883.3,496.5 863.8,497.5 843.3,498.5 839.8,499.5 839.7,500.5 838.0,501.5 836.0,502.5 834.8,503.5 853.6,504.5 874.9,505.5 873.6,506.5 849.3,507.5 829.2,508.5 826.4,509.5 826.6,510.5 826.0,511.5 828.0,512.5 842.8,513.5 859.3,514.5 849.0,515.5 831.3,516.5 821.2,517.5 820.0,518.5 819.7,519.5 820.8,520.5 819.1,521.5 819.4,522.5 819.1,523.5 816.9,524.5 827.1,525.5 842.5,526.5 854.3,527.5 837.8,528.5 820.9,529.5 814.0,530.5 812.9,531.5 812.5,532.5 811.5,533.5 828.3,534.5 846.6,535.5 844.2,536.5 828.0,537.5 811.8,538.5 810.1,539.5 812.4,540.5 811.7,541.5 810.9,542.5 816.5,543.5 823.7,544.5 822.8,545.5 816.2,546.5 812.2,547.5 812.2,548.5 812.9,549.5 813.9,550.5 815.5,551.5 816.2,552.5 816.9,553.5 817.3,554.5 818.2,555.5 818.9,556.5 820.0,557.5 820.9,558.5 821.6,559.5 822.1,560.5 822.2,561.5 822.3,562.5 822.4,563.5 822.5,564.5 822.6,565.5 822.7,566.5 822.8,567.5 822.9,568.5 823.0,569.5 823.1,570.5 823.2,571.5 823.3,572.5 823.4,573.5 823.5,574.5 823.6,575.5 823.7,576.5 823.8,577.5 823.9,578.5 824.0,579.5 824.1,580.5 824.2,581.5 824.3,582.5 824.4,583.5 824.5,584.5 824.6,585.5 824.7,586.5 824.8,587.5 824.9,588.5 825.0,589.5 825.1,590.5 825.2,591.5 825.3,592.5 825.4,593.5 825.5,594.5 825.6,595.5 825.7,596.5 825.8,597.5 825.9,598.5 826.0,599.5 826.1,600.5 826.2,601.5 826.3,602.5 826.4,603.5 826.5,604.5 826.6,605.5 826.7,606.5 826.8,607.5 826.9,608.5 827.0,609.5 827.1,610.5 827.2,611.5 827.3,612.5 827.4,613.5 827.5,614.5 827.6,615.5 827.7,616.5 827.8,617.5 827.9,618.5 826.3,619.0 826.6,619.8 826.9,620.9 827.3,622.2 827.7,623.7 828.2,625.2 828.7,626.6 829.3,628.0 829.8,629.2 830.4,630.2 831.2,631.2 832.1,632.1 833.0,632.9 833.8,633.7 834.4,634.5 834.8,635.3 834.8,636.2 834.3,637.1 833.3,638.0 832.0,638.9 830.5,639.7 829.1,640.6 827.9,641.5 827.1,642.4 827.0,643.3 827.5,644.2 828.4,645.1 829.8,646.0 831.4,646.8 833.1,647.7 834.9,648.6 836.7,649.5 838.3,650.4 839.9,651.3 841.8,652.2 843.7,653.2 845.6,654.1 847.4,655.0 849.0,655.9 850.2,656.8 851.0,657.5 851.3,658.1 851.2,658.7 850.7,659.1 850.0,659.5 849.2,660.0 848.3,660.4 847.5,661.0 846.8,661.7 846.1,662.6 845.4,663.7 844.6,664.9 843.7,666.1 843.0,667.3 842.2,668.4 841.6,669.3 841.2,670.0" fill="none" stroke="#2fae62" stroke-width="1.6" stroke-linejoin="round"/>
<polyline points="700.3,203.5 700.9,204.5 701.4,205.5 702.0,206.5 702.6,207.5 703.1,208.5 703.7,209.5 704.3,210.5 704.9,211.5 705.4,212.5 706.0,213.5 706.6,214.5 707.1,215.5 707.7,216.5 708.3,217.5 708.9,218.5 709.4,219.5 710.0,220.5 710.6,221.5 711.1,222.5 711.7,223.5 712.3,224.5 712.8,225.5 713.4,226.5 714.0,227.5 714.6,228.5 715.2,229.5 715.7,230.5 716.3,231.5 716.9,232.5 717.4,233.5 718.0,234.5 718.6,235.5 719.2,236.5 719.7,237.5 720.3,238.5 720.9,239.5 721.5,240.5 722.0,241.5 722.6,242.5 723.1,243.5 723.7,244.5 724.2,245.5 724.8,246.5 725.5,247.5 726.0,248.5 726.6,249.5 727.2,250.5 727.8,251.5 728.4,252.5 728.9,253.5 729.5,254.5 730.1,255.5 730.8,256.5 731.4,257.5 732.0,258.5 732.6,259.5 733.2,260.5 733.8,261.5 734.4,262.5 734.9,263.5 735.6,264.5 736.2,265.5 736.8,266.5 737.4,267.5 738.0,268.5 738.6,269.5 739.3,270.5 739.9,271.5 740.5,272.5 741.0,273.5 741.7,274.5 742.2,275.5 742.9,276.5 743.4,277.5 744.0,278.5 744.7,279.5 745.2,280.5 745.8,281.5 746.4,282.5 747.0,283.5 747.7,284.5 748.3,285.5 748.9,286.5 749.5,287.5 750.2,288.5 750.7,289.5 751.2,290.5 751.9,291.5 752.4,292.5 753.1,293.5 753.6,294.5 754.2,295.5 754.6,296.5 755.2,297.5 756.0,298.5 756.4,299.5 757.0,300.5 757.6,301.5 758.2,302.5 758.8,303.5 759.4,304.5 759.9,305.5 760.4,306.5 761.1,307.5 761.6,308.5 762.2,309.5 762.7,310.5 763.3,311.5 763.9,312.5 764.6,313.5 765.1,314.5 765.6,315.5 766.3,316.5 766.9,317.5 767.4,318.5 767.9,319.5 768.4,320.5 769.0,321.5 769.7,322.5 770.2,323.5 771.0,324.5 771.5,325.5 771.9,326.5 772.6,327.5 773.1,328.5 773.6,329.5 774.2,330.5 774.8,331.5 775.4,332.5 775.8,333.5 776.4,334.5 777.0,335.5 777.4,336.5 777.8,337.5 778.5,338.5 779.0,339.5 779.3,340.5 780.0,341.5 780.4,342.5 781.0,343.5 781.6,344.5 782.0,345.5 782.6,346.5 783.1,347.5 783.6,348.5 784.1,349.5 784.7,350.5 785.0,351.5 785.5,352.5 786.1,353.5 786.7,354.5 787.2,355.5 787.6,356.5 788.3,357.5 788.9,358.5 789.3,359.5 789.8,360.5 790.2,361.5 790.8,362.5 791.5,363.5 791.8,364.5 792.4,365.5 792.9,366.5 793.3,367.5 793.9,368.5 794.4,369.5 795.1,370.5 795.5,371.5 795.9,372.5 796.7,373.5 797.2,374.5 797.7,375.5 798.3,376.5 798.9,377.5 799.6,378.5 800.1,379.5 801.0,380.5 801.8,381.5 802.5,382.5 803.2,383.5 804.2,384.5 804.6,385.5 805.4,386.5 806.0,387.5 807.2,388.5 807.6,389.5 808.3,390.5 809.1,391.5 810.2,392.5 810.6,393.5 812.4,394.5 815.3,395.5 819.5,396.5 822.2,397.5 819.7,398.5 817.6,399.5 816.3,400.5 816.6,401.5 816.9,402.5 818.2,403.5 818.2,404.5 819.1,405.5 820.1,406.5 820.4,407.5 821.2,408.5 821.6,409.5 822.9,410.5 823.2,411.5 823.2,412.5 824.7,413.5 828.4,414.5 834.2,415.5 838.7,416.5 836.0,417.5 831.8,418.5 828.2,419.5 827.3,420.5 828.5,421.5 833.6,422.5 839.4,423.5 845.3,424.5 840.0,425.5 835.0,426.5 831.1,427.5 830.5,428.5 830.0,429.5 830.7,430.5 831.6,431.5 832.1,432.5 833.0,433.5 831.9,434.5 837.9,435.5 844.4,436.5 851.2,437.5 847.6,438.5 842.1,439.5 835.8,440.5 835.9,441.5 834.6,442.5 834.7,443.5 833.3,444.5 833.7,445.5 833.5,446.5 832.6,447.5 832.9,448.5 832.5,449.5 831.6,450.5 834.7,451.5 839.3,452.5 844.0,453.5 838.9,454.5 833.8,455.5 828.8,456.5 826.6,457.5 827.2,458.5 825.8,459.5 826.8,460.5 827.8,461.5 829.8,462.5 831.9,463.5 834.4,464.5 835.8,465.5 837.1,466.5 839.6,467.5 842.1,468.5 842.7,469.5 844.9,470.5 847.4,471.5 849.0,472.5 851.2,473.5 853.4,474.5 852.6,475.5 853.9,476.5 854.5,477.5 854.3,478.5 860.1,479.5 867.6,480.5 874.5,481.5 869.5,482.5 868.7,483.5 869.4,484.5 874.8,485.5 875.0,486.5 872.5,487.5 872.7,488.5 873.4,489.5 877.4,490.5 879.0,491.5 881.2,492.5 884.2,493.5 886.4,494.5 887.6,495.5 902.8,496.5 933.7,497.5 963.4,498.5 941.0,499.5 937.8,500.5 997.9,501.5 1081.0,502.5 1016.6,503.5 936.6,504.5 896.3,505.5 897.0,506.5 911.7,507.5 958.4,508.5 1005.8,509.5 970.3,510.5 924.9,511.5 903.6,512.5 903.8,513.5 904.9,514.5 905.8,515.5 919.2,516.5 943.7,517.5 957.4,518.5 933.8,519.5 911.1,520.5 906.6,521.5 905.6,522.5 913.4,523.5 939.2,524.5 957.5,525.5 932.8,526.5 906.4,527.5 902.7,528.5 915.8,529.5 931.7,530.5 930.2,531.5 909.6,532.5 890.4,533.5 888.0,534.5 883.4,535.5 895.1,536.5 916.6,537.5 915.9,538.5 881.7,539.5 865.2,540.5 891.7,541.5 914.6,542.5 890.8,543.5 867.5,544.5 868.6,545.5 869.3,546.5 871.7,547.5 873.3,548.5 879.5,549.5 887.0,550.5 888.2,551.5 885.1,552.5 884.1,553.5 886.6,554.5 888.7,555.5 890.8,556.5 892.7,557.5 894.8,558.5 896.9,559.5 898.2,560.5 898.5,561.5 898.9,562.5 899.2,563.5 899.5,564.5 899.9,565.5 900.2,566.5 900.6,567.5 900.9,568.5 901.2,569.5 901.6,570.5 901.9,571.5 902.3,572.5 902.6,573.5 902.9,574.5 903.3,575.5 903.6,576.5 904.0,577.5 904.3,578.5 904.6,579.5 905.0,580.5 905.3,581.5 905.7,582.5 906.0,583.5 906.3,584.5 906.7,585.5 907.0,586.5 907.4,587.5 907.7,588.5 908.0,589.5 908.4,590.5 908.7,591.5 909.1,592.5 909.4,593.5 909.7,594.5 910.1,595.5 910.4,596.5 910.8,597.5 911.1,598.5 911.4,599.5 911.8,600.5 912.1,601.5 912.5,602.5 912.8,603.5 913.1,604.5 913.5,605.5 913.8,606.5 914.2,607.5 914.5,608.5 914.8,609.5 915.2,610.5 915.5,611.5 915.9,612.5 916.2,613.5 916.6,614.5 916.9,615.5 917.2,616.5 917.6,617.5 917.9,618.5 917.6,619.0 917.1,619.4 916.4,620.0 915.4,620.6 914.4,621.3 913.6,622.1 913.2,623.0 913.2,624.0 914.0,625.0 915.8,626.2 918.6,627.5 922.0,628.9 925.8,630.4 929.4,632.0 932.5,633.5 934.9,634.9 936.0,636.2 935.5,637.4 933.6,638.5 930.7,639.6 927.5,640.6 924.3,641.6 921.7,642.6 920.2,643.7 920.4,644.7 922.5,645.8 926.3,646.9 931.1,647.9 936.6,649.0 942.2,650.1 947.3,651.2 951.6,652.2 954.4,653.2 955.8,654.1 956.1,655.0 955.7,655.9 954.8,656.7 953.6,657.5 952.6,658.4 951.8,659.3 951.6,660.3 951.9,661.5 952.6,662.8 953.4,664.2 954.3,665.6 955.2,667.0 956.1,668.2 956.8,669.2 957.3,670.0" fill="none" stroke="#97a9c9" stroke-width="1.7" stroke-linejoin="round"/>
<polyline points="700.3,203.5 700.8,204.5 701.3,205.5 701.8,206.5 702.3,207.5 702.9,208.5 703.4,209.5 703.9,210.5 704.4,211.5 704.9,212.5 705.5,213.5 706.0,214.5 706.5,215.5 707.0,216.5 707.5,217.5 708.1,218.5 708.6,219.5 709.1,220.5 709.6,221.5 710.2,222.5 710.7,223.5 711.2,224.5 711.7,225.5 712.2,226.5 712.7,227.5 713.2,228.5 713.8,229.5 714.3,230.5 714.8,231.5 715.3,232.5 715.8,233.5 716.4,234.5 716.9,235.5 717.4,236.5 718.0,237.5 718.5,238.5 719.0,239.5 719.5,240.5 720.0,241.5 720.5,242.5 721.1,243.5 721.6,244.5 722.1,245.5 722.6,246.5 723.1,247.5 723.6,248.5 724.2,249.5 724.7,250.5 725.2,251.5 725.8,252.5 726.3,253.5 726.9,254.5 727.5,255.5 728.0,256.5 728.6,257.5 729.2,258.5 729.6,259.5 730.2,260.5 730.8,261.5 731.3,262.5 731.9,263.5 732.5,264.5 733.0,265.5 733.6,266.5 734.1,267.5 734.6,268.5 735.1,269.5 735.8,270.5 736.2,271.5 736.9,272.5 737.5,273.5 738.0,274.5 738.5,275.5 739.1,276.5 739.5,277.5 740.1,278.5 740.6,279.5 741.3,280.5 741.9,281.5 742.3,282.5 742.9,283.5 743.5,284.5 744.1,285.5 744.6,286.5 745.0,287.5 745.6,288.5 746.1,289.5 746.9,290.5 747.4,291.5 747.7,292.5 748.4,293.5 749.0,294.5 749.5,295.5 749.9,296.5 750.5,297.5 750.9,298.5 751.4,299.5 751.9,300.5 752.4,301.5 753.2,302.5 753.6,303.5 754.2,304.5 754.6,305.5 755.2,306.5 755.8,307.5 756.2,308.5 756.8,309.5 757.1,310.5 757.9,311.5 758.2,312.5 758.9,313.5 759.3,314.5 760.0,315.5 760.3,316.5 760.9,317.5 761.5,318.5 762.0,319.5 762.5,320.5 763.0,321.5 763.7,322.5 764.1,323.5 764.5,324.5 765.1,325.5 765.6,326.5 766.3,327.5 766.6,328.5 767.3,329.5 767.7,330.5 768.2,331.5 768.7,332.5 769.4,333.5 769.9,334.5 770.2,335.5 770.7,336.5 771.2,337.5 771.9,338.5 772.1,339.5 772.6,340.5 773.1,341.5 773.8,342.5 774.1,343.5 774.7,344.5 775.3,345.5 775.8,346.5 776.2,347.5 776.9,348.5 777.4,349.5 777.8,350.5 778.1,351.5 778.6,352.5 779.3,353.5 779.6,354.5 780.3,355.5 780.6,356.5 781.3,357.5 781.8,358.5 782.3,359.5 782.8,360.5 783.2,361.5 783.7,362.5 784.2,363.5 784.7,364.5 785.2,365.5 785.8,366.5 786.1,367.5 786.7,368.5 787.1,369.5 787.8,370.5 788.2,371.5 788.5,372.5 789.1,373.5 789.7,374.5 790.3,375.5 791.0,376.5 791.5,377.5 792.4,378.5 792.9,379.5 793.3,380.5 794.3,381.5 794.8,382.5 795.5,383.5 796.3,384.5 796.7,385.5 797.4,386.5 798.5,387.5 798.7,388.5 799.8,389.5 800.2,390.5 800.8,391.5 801.2,392.5 804.6,393.5 808.4,394.5 812.0,395.5 809.8,396.5 807.6,397.5 805.7,398.5 805.8,399.5 807.0,400.5 807.1,401.5 807.6,402.5 808.8,403.5 808.8,404.5 809.5,405.5 810.2,406.5 810.9,407.5 811.1,408.5 811.5,409.5 812.2,410.5 813.3,411.5 816.9,412.5 821.4,413.5 825.5,414.5 824.9,415.5 821.3,416.5 816.7,417.5 816.2,418.5 817.5,419.5 821.2,420.5 826.1,421.5 831.5,422.5 830.3,423.5 825.1,424.5 819.8,425.5 818.2,426.5 819.6,427.5 818.8,428.5 819.8,429.5 819.8,430.5 820.6,431.5 820.5,432.5 824.5,433.5 831.2,434.5 836.5,435.5 835.7,436.5 830.7,437.5 824.3,438.5 823.4,439.5 823.8,440.5 823.8,441.5 824.1,442.5 822.2,443.5 821.7,444.5 822.6,445.5 822.0,446.5 820.3,447.5 820.1,448.5 823.5,449.5 827.9,450.5 830.3,451.5 828.4,452.5 824.3,453.5 818.3,454.5 816.3,455.5 816.7,456.5 815.8,457.5 814.1,458.5 814.1,459.5 814.7,460.5 815.9,461.5 818.2,462.5 819.3,463.5 822.2,464.5 823.8,465.5 825.1,466.5 827.0,467.5 830.0,468.5 831.1,469.5 832.8,470.5 835.6,471.5 836.3,472.5 839.3,473.5 840.2,474.5 841.1,475.5 840.6,476.5 846.1,477.5 852.7,478.5 858.8,479.5 856.9,480.5 852.9,481.5 851.6,482.5 856.3,483.5 856.7,484.5 856.6,485.5 855.8,486.5 857.1,487.5 858.0,488.5 861.5,489.5 864.4,490.5 866.7,491.5 869.0,492.5 871.6,493.5 881.5,494.5 911.2,495.5 941.7,496.5 929.5,497.5 910.2,498.5 963.6,499.5 1041.9,500.5 1012.9,501.5 935.6,502.5 881.0,503.5 881.9,504.5 886.6,505.5 931.1,506.5 977.0,507.5 959.6,508.5 917.7,509.5 888.0,510.5 889.4,511.5 889.6,512.5 892.1,513.5 900.8,514.5 923.2,515.5 944.9,516.5 923.1,517.5 902.1,518.5 893.4,519.5 892.2,520.5 894.6,521.5 918.5,522.5 943.6,523.5 923.4,524.5 900.2,525.5 893.4,526.5 903.1,527.5 918.8,528.5 924.2,529.5 903.5,530.5 883.4,531.5 878.7,532.5 877.1,533.5 885.7,534.5 907.2,535.5 917.7,536.5 884.5,537.5 855.8,538.5 873.6,539.5 894.8,540.5 877.1,541.5 855.9,542.5 851.0,543.5 851.8,544.5 853.3,545.5 856.2,546.5 860.8,547.5 867.4,548.5 870.9,549.5 867.9,550.5 866.7,551.5 868.0,552.5 870.3,553.5 872.2,554.5 874.3,555.5 876.4,556.5 878.7,557.5 880.8,558.5 883.0,559.5 884.2,560.5 884.5,561.5 884.8,562.5 885.2,563.5 885.5,564.5 885.8,565.5 886.2,566.5 886.5,567.5 886.8,568.5 887.1,569.5 887.5,570.5 887.8,571.5 888.1,572.5 888.5,573.5 888.8,574.5 889.1,575.5 889.5,576.5 889.8,577.5 890.1,578.5 890.5,579.5 890.8,580.5 891.1,581.5 891.5,582.5 891.8,583.5 892.1,584.5 892.4,585.5 892.8,586.5 893.1,587.5 893.4,588.5 893.8,589.5 894.1,590.5 894.4,591.5 894.8,592.5 895.1,593.5 895.4,594.5 895.8,595.5 896.1,596.5 896.4,597.5 896.8,598.5 897.1,599.5 897.4,600.5 897.7,601.5 898.1,602.5 898.4,603.5 898.7,604.5 899.1,605.5 899.4,606.5 899.7,607.5 900.1,608.5 900.4,609.5 900.7,610.5 901.1,611.5 901.4,612.5 901.7,613.5 902.1,614.5 902.4,615.5 902.7,616.5 903.0,617.5 903.4,618.5 904.9,619.0 904.4,619.4 903.6,620.0 902.6,620.6 901.6,621.3 900.7,622.1 900.2,623.0 900.3,624.0 901.0,625.0 902.8,626.2 905.7,627.5 909.2,629.0 913.0,630.5 916.7,632.1 919.9,633.6 922.2,635.0 923.3,636.2 922.7,637.3 920.7,638.2 917.8,639.1 914.3,639.9 911.0,640.7 908.1,641.5 906.3,642.4 906.0,643.3 907.5,644.3 910.3,645.4 914.2,646.4 918.6,647.5 923.1,648.7 927.4,649.7 930.9,650.8 933.2,651.8 934.3,652.7 934.7,653.6 934.4,654.4 933.8,655.2 933.0,656.0 932.2,656.9 931.8,657.8 931.8,658.9 932.3,660.2 933.1,661.7 934.1,663.3 935.2,664.9 936.3,666.5 937.3,667.9 938.2,669.1 938.8,670.0" fill="none" stroke="#6a80a8" stroke-width="1.7" stroke-linejoin="round"/>
<polyline points="700.2,203.5 700.7,204.5 701.2,205.5 701.6,206.5 702.1,207.5 702.6,208.5 703.0,209.5 703.5,210.5 704.0,211.5 704.5,212.5 704.9,213.5 705.4,214.5 705.9,215.5 706.3,216.5 706.8,217.5 707.3,218.5 707.7,219.5 708.2,220.5 708.7,221.5 709.1,222.5 709.6,223.5 710.1,224.5 710.6,225.5 711.0,226.5 711.4,227.5 711.9,228.5 712.4,229.5 712.9,230.5 713.4,231.5 713.8,232.5 714.3,233.5 714.8,234.5 715.2,235.5 715.6,236.5 716.1,237.5 716.6,238.5 717.1,239.5 717.6,240.5 718.0,241.5 718.5,242.5 718.9,243.5 719.5,244.5 719.9,245.5 720.4,246.5 720.8,247.5 721.3,248.5 721.8,249.5 722.3,250.5 722.7,251.5 723.3,252.5 723.8,253.5 724.3,254.5 724.7,255.5 725.3,256.5 725.8,257.5 726.3,258.5 726.7,259.5 727.2,260.5 727.8,261.5 728.3,262.5 728.7,263.5 729.3,264.5 729.7,265.5 730.2,266.5 730.8,267.5 731.3,268.5 731.7,269.5 732.2,270.5 732.7,271.5 733.3,272.5 733.8,273.5 734.3,274.5 734.7,275.5 735.3,276.5 735.8,277.5 736.2,278.5 736.7,279.5 737.3,280.5 737.8,281.5 738.3,282.5 738.7,283.5 739.2,284.5 739.8,285.5 740.2,286.5 740.7,287.5 741.3,288.5 741.7,289.5 742.3,290.5 742.6,291.5 743.1,292.5 743.6,293.5 744.1,294.5 744.6,295.5 745.1,296.5 745.6,297.5 746.0,298.5 746.6,299.5 747.0,300.5 747.5,301.5 748.0,302.5 748.5,303.5 748.9,304.5 749.3,305.5 749.9,306.5 750.2,307.5 750.9,308.5 751.3,309.5 751.8,310.5 752.2,311.5 752.7,312.5 753.2,313.5 753.6,314.5 754.0,315.5 754.5,316.5 755.1,317.5 755.5,318.5 756.0,319.5 756.6,320.5 756.9,321.5 757.3,322.5 757.8,323.5 758.4,324.5 759.0,325.5 759.5,326.5 759.7,327.5 760.4,328.5 760.8,329.5 761.3,330.5 761.8,331.5 762.1,332.5 762.7,333.5 763.2,334.5 763.5,335.5 764.2,336.5 764.5,337.5 765.1,338.5 765.5,339.5 766.0,340.5 766.6,341.5 766.9,342.5 767.5,343.5 768.1,344.5 768.5,345.5 768.8,346.5 769.3,347.5 769.8,348.5 770.2,349.5 770.9,350.5 771.3,351.5 771.8,352.5 772.1,353.5 772.8,354.5 773.1,355.5 773.7,356.5 774.3,357.5 774.7,358.5 775.2,359.5 775.4,360.5 776.0,361.5 776.4,362.5 776.9,363.5 777.6,364.5 778.0,365.5 778.5,366.5 779.0,367.5 779.2,368.5 780.0,369.5 780.2,370.5 780.9,371.5 781.2,372.5 781.6,373.5 782.1,374.5 782.8,375.5 783.3,376.5 784.0,377.5 784.6,378.5 785.5,379.5 786.0,380.5 786.5,381.5 787.0,382.5 787.9,383.5 788.5,384.5 789.1,385.5 789.5,386.5 790.0,387.5 790.5,388.5 791.2,389.5 792.2,390.5 794.7,391.5 797.8,392.5 801.0,393.5 800.1,394.5 797.7,395.5 796.2,396.5 796.0,397.5 796.3,398.5 796.8,399.5 797.7,400.5 798.6,401.5 798.4,402.5 799.8,403.5 799.6,404.5 800.3,405.5 800.2,406.5 801.0,407.5 801.8,408.5 801.9,409.5 804.8,410.5 808.6,411.5 814.2,412.5 814.0,413.5 810.6,414.5 807.1,415.5 805.4,416.5 805.6,417.5 809.3,418.5 813.7,419.5 818.8,420.5 818.8,421.5 814.3,422.5 810.2,423.5 807.7,424.5 807.3,425.5 807.3,426.5 807.9,427.5 808.9,428.5 808.3,429.5 808.7,430.5 812.0,431.5 817.8,432.5 824.0,433.5 824.3,434.5 817.9,435.5 813.2,436.5 811.9,437.5 811.5,438.5 811.9,439.5 812.3,440.5 812.6,441.5 812.3,442.5 811.8,443.5 809.8,444.5 810.6,445.5 809.9,446.5 811.7,447.5 815.7,448.5 818.2,449.5 817.8,450.5 813.7,451.5 808.8,452.5 805.5,453.5 805.6,454.5 804.8,455.5 804.1,456.5 803.5,457.5 802.5,458.5 802.0,459.5 802.1,460.5 803.8,461.5 806.4,462.5 807.9,463.5 809.0,464.5 811.8,465.5 813.4,466.5 815.7,467.5 816.8,468.5 819.7,469.5 820.3,470.5 822.4,471.5 824.1,472.5 826.9,473.5 827.5,474.5 830.8,475.5 837.6,476.5 843.8,477.5 843.5,478.5 840.3,479.5 837.3,480.5 839.0,481.5 839.6,482.5 839.0,483.5 837.2,484.5 839.5,485.5 840.4,486.5 844.1,487.5 847.0,488.5 848.5,489.5 851.6,490.5 853.6,491.5 858.7,492.5 888.4,493.5 917.5,494.5 919.2,495.5 893.1,496.5 933.9,497.5 1006.1,498.5 1005.3,499.5 932.1,500.5 867.2,501.5 867.5,502.5 867.3,503.5 907.3,504.5 948.3,505.5 950.6,506.5 909.4,507.5 872.1,508.5 874.3,509.5 875.4,510.5 876.7,511.5 881.5,512.5 903.3,513.5 925.1,514.5 913.4,515.5 892.4,516.5 880.5,517.5 879.5,518.5 879.6,519.5 900.8,520.5 922.2,521.5 913.7,522.5 890.5,523.5 880.0,524.5 887.9,525.5 904.9,526.5 915.9,527.5 896.8,528.5 877.1,529.5 870.8,530.5 867.4,531.5 870.7,532.5 894.5,533.5 915.8,534.5 887.1,535.5 857.0,536.5 866.3,537.5 881.3,538.5 867.8,539.5 842.0,540.5 832.2,541.5 833.7,542.5 837.2,543.5 839.0,544.5 841.3,545.5 847.7,546.5 853.3,547.5 850.6,548.5 848.6,549.5 849.9,550.5 852.1,551.5 854.4,552.5 856.9,553.5 858.4,554.5 860.8,555.5 862.7,556.5 864.7,557.5 866.9,558.5 869.0,559.5 870.2,560.5 870.5,561.5 870.8,562.5 871.1,563.5 871.4,564.5 871.8,565.5 872.1,566.5 872.4,567.5 872.7,568.5 873.1,569.5 873.4,570.5 873.7,571.5 874.0,572.5 874.3,573.5 874.7,574.5 875.0,575.5 875.3,576.5 875.6,577.5 876.0,578.5 876.3,579.5 876.6,580.5 876.9,581.5 877.2,582.5 877.6,583.5 877.9,584.5 878.2,585.5 878.5,586.5 878.9,587.5 879.2,588.5 879.5,589.5 879.8,590.5 880.1,591.5 880.5,592.5 880.8,593.5 881.1,594.5 881.4,595.5 881.8,596.5 882.1,597.5 882.4,598.5 882.7,599.5 883.0,600.5 883.4,601.5 883.7,602.5 884.0,603.5 884.3,604.5 884.7,605.5 885.0,606.5 885.3,607.5 885.6,608.5 885.9,609.5 886.3,610.5 886.6,611.5 886.9,612.5 887.2,613.5 887.6,614.5 887.9,615.5 888.2,616.5 888.5,617.5 888.8,618.5 892.0,619.0 891.6,619.4 890.8,620.0 889.9,620.7 889.0,621.5 888.3,622.3 887.9,623.2 887.9,624.1 888.6,625.0 890.3,625.9 892.9,626.9 896.2,627.9 899.7,629.0 903.1,630.0 906.1,631.1 908.1,632.3 909.0,633.4 908.3,634.6 906.1,635.8 903.0,637.1 899.4,638.4 896.0,639.7 893.0,641.0 891.1,642.2 890.7,643.3 892.1,644.3 895.0,645.2 898.9,646.1 903.4,646.9 907.9,647.8 912.1,648.6 915.5,649.5 917.6,650.4 918.3,651.4 918.1,652.4 917.2,653.4 915.9,654.4 914.4,655.5 913.1,656.6 912.2,657.7 912.0,658.9 912.6,660.2 913.6,661.8 915.0,663.4 916.6,665.0 918.2,666.5 919.8,667.9 921.0,669.1 921.9,670.0" fill="none" stroke="#4a5878" stroke-width="1.7" stroke-linejoin="round"/>
<polyline points="691,195 849.4,565 849.4,669.6" fill="none" stroke="#f29a45" stroke-width="1.4"/>
</g>
<line x1="641.0" y1="624.5" x2="1116.0" y2="624.5" stroke="#7d8090" stroke-width="0.9" stroke-dasharray="2,1.6"/>
<rect x="1087.2" y="203.4" width="21.2" height="21" rx="2" fill="#fff"/>
<path d="M1097.9 208.8 l4.5 2.6 v5.2 l-4.5 2.6 l-4.5 -2.6 v-5.2 z" fill="none" stroke="#3a3ee0" stroke-width="2.1"/><circle cx="1097.9" cy="214" r="1.6" fill="none" stroke="#6a6ef0" stroke-width="1"/>
</svg>
<div class="a" style="left:646.4px;top:550.5px;width:465.1px;height:70.0px;background:rgba(255,255,255,0.93);border:0.8px solid #e5e6ee;border-radius:2px"></div>
<div class="a" style="left:656.0px;top:560.0px;width:5.0px;height:1.0px;background:#c77fd6;"></div>
<div class="a" style="left:663.7px;top:556.5px;font-size:6.75px;line-height:8.10px;color:#4a4d5e;font-weight:normal;">Gi-Pore Pressure_P10</div>
<div class="a" style="left:740.4px;top:556.2px;font-size:7.1px;line-height:8.52px;color:#3a3d4e;font-weight:normal;">32318.28</div>
<div class="a" style="left:772.4px;top:557.7px;font-size:4.6px;line-height:5.52px;color:#8a8d9c;font-weight:normal;">kPa</div>
<div class="a" style="left:656.0px;top:572.5px;width:5.0px;height:1.0px;background:#54c07e;"></div>
<div class="a" style="left:663.7px;top:568.9px;font-size:6.75px;line-height:8.10px;color:#4a4d5e;font-weight:normal;">Gi-Min. Stress_P10</div>
<div class="a" style="left:731.5px;top:568.7px;font-size:7.1px;line-height:8.52px;color:#3a3d4e;font-weight:normal;">57559.08</div>
<div class="a" style="left:763.5px;top:570.2px;font-size:4.6px;line-height:5.52px;color:#8a8d9c;font-weight:normal;">kPa</div>
<div class="a" style="left:656.0px;top:584.9px;width:5.0px;height:1.0px;background:#d9807c;"></div>
<div class="a" style="left:663.7px;top:581.4px;font-size:6.75px;line-height:8.10px;color:#4a4d5e;font-weight:normal;">Gi-Breakout_P10</div>
<div class="a" style="left:717.5px;top:581.1px;font-size:7.1px;line-height:8.52px;color:#3a3d4e;font-weight:normal;">39713.98</div>
<div class="a" style="left:749.5px;top:582.6px;font-size:4.6px;line-height:5.52px;color:#8a8d9c;font-weight:normal;">kPa</div>
<div class="a" style="left:656.0px;top:597.4px;width:5.0px;height:1.0px;background:#6f7fa5;"></div>
<div class="a" style="left:663.7px;top:593.8px;font-size:6.75px;line-height:8.10px;color:#4a4d5e;font-weight:normal;">Gi-Breakdown_P10</div>
<div class="a" style="left:732.0px;top:593.6px;font-size:7.1px;line-height:8.52px;color:#3a3d4e;font-weight:normal;">83957.23</div>
<div class="a" style="left:764.0px;top:595.1px;font-size:4.6px;line-height:5.52px;color:#8a8d9c;font-weight:normal;">kPa</div>
<div class="a" style="left:656.0px;top:609.8px;width:5.0px;height:1.0px;background:#f2a560;"></div>
<div class="a" style="left:663.7px;top:606.2px;font-size:6.75px;line-height:8.10px;color:#4a4d5e;font-weight:normal;">Gi-verticalStress</div>
<div class="a" style="left:718.0px;top:606.0px;font-size:7.1px;line-height:8.52px;color:#3a3d4e;font-weight:normal;">67301.28</div>
<div class="a" style="left:750.0px;top:607.5px;font-size:4.6px;line-height:5.52px;color:#8a8d9c;font-weight:normal;">kPa</div>
<div class="a" style="left:805.7px;top:560.0px;width:5.0px;height:1.0px;background:#e49be2;"></div>
<div class="a" style="left:813.4px;top:556.5px;font-size:6.75px;line-height:8.10px;color:#4a4d5e;font-weight:normal;">Gi-Pore Pressure_P50</div>
<div class="a" style="left:890.0px;top:556.2px;font-size:7.1px;line-height:8.52px;color:#3a3d4e;font-weight:normal;">34544.72</div>
<div class="a" style="left:922.0px;top:557.7px;font-size:4.6px;line-height:5.52px;color:#8a8d9c;font-weight:normal;">kPa</div>
<div class="a" style="left:805.7px;top:572.5px;width:5.0px;height:1.0px;background:#6ad694;"></div>
<div class="a" style="left:813.4px;top:568.9px;font-size:6.75px;line-height:8.10px;color:#4a4d5e;font-weight:normal;">Gi-Min. Stress_P50</div>
<div class="a" style="left:880.5px;top:568.7px;font-size:7.1px;line-height:8.52px;color:#3a3d4e;font-weight:normal;">59659.05</div>
<div class="a" style="left:912.5px;top:570.2px;font-size:4.6px;line-height:5.52px;color:#8a8d9c;font-weight:normal;">kPa</div>
<div class="a" style="left:805.7px;top:584.9px;width:5.0px;height:1.0px;background:#e88e8a;"></div>
<div class="a" style="left:813.4px;top:581.4px;font-size:6.75px;line-height:8.10px;color:#4a4d5e;font-weight:normal;">Gi-Breakout_P50</div>
<div class="a" style="left:867.5px;top:581.1px;font-size:7.1px;line-height:8.52px;color:#3a3d4e;font-weight:normal;">41867.28</div>
<div class="a" style="left:899.5px;top:582.6px;font-size:4.6px;line-height:5.52px;color:#8a8d9c;font-weight:normal;">kPa</div>
<div class="a" style="left:805.7px;top:597.4px;width:5.0px;height:1.0px;background:#7f92b8;"></div>
<div class="a" style="left:813.4px;top:593.8px;font-size:6.75px;line-height:8.10px;color:#4a4d5e;font-weight:normal;">Gi-Breakdown_P50</div>
<div class="a" style="left:881.0px;top:593.6px;font-size:7.1px;line-height:8.52px;color:#3a3d4e;font-weight:normal;">89666.33</div>
<div class="a" style="left:913.0px;top:595.1px;font-size:4.6px;line-height:5.52px;color:#8a8d9c;font-weight:normal;">kPa</div>
<div class="a" style="left:954.4px;top:560.0px;width:5.0px;height:1.0px;background:#f0bdea;"></div>
<div class="a" style="left:962.1px;top:556.5px;font-size:6.75px;line-height:8.10px;color:#4a4d5e;font-weight:normal;">Gi-Pore Pressure_P90</div>
<div class="a" style="left:1041.4px;top:556.2px;font-size:7.1px;line-height:8.52px;color:#3a3d4e;font-weight:normal;">36771.15</div>
<div class="a" style="left:1073.4px;top:557.7px;font-size:4.6px;line-height:5.52px;color:#8a8d9c;font-weight:normal;">kPa</div>
<div class="a" style="left:954.4px;top:572.5px;width:5.0px;height:1.0px;background:#93e2b2;"></div>
<div class="a" style="left:962.1px;top:568.9px;font-size:6.75px;line-height:8.10px;color:#4a4d5e;font-weight:normal;">Gi-Min. Stress_P90</div>
<div class="a" style="left:1031.0px;top:568.7px;font-size:7.1px;line-height:8.52px;color:#3a3d4e;font-weight:normal;">62318.11</div>
<div class="a" style="left:1063.0px;top:570.2px;font-size:4.6px;line-height:5.52px;color:#8a8d9c;font-weight:normal;">kPa</div>
<div class="a" style="left:954.4px;top:584.9px;width:5.0px;height:1.0px;background:#f0aaa6;"></div>
<div class="a" style="left:962.1px;top:581.4px;font-size:6.75px;line-height:8.10px;color:#4a4d5e;font-weight:normal;">Gi-Breakout_P90</div>
<div class="a" style="left:1016.5px;top:581.1px;font-size:7.1px;line-height:8.52px;color:#3a3d4e;font-weight:normal;">43620.17</div>
<div class="a" style="left:1048.5px;top:582.6px;font-size:4.6px;line-height:5.52px;color:#8a8d9c;font-weight:normal;">kPa</div>
<div class="a" style="left:954.4px;top:597.4px;width:5.0px;height:1.0px;background:#9aabcc;"></div>
<div class="a" style="left:962.1px;top:593.8px;font-size:6.75px;line-height:8.10px;color:#4a4d5e;font-weight:normal;">Gi-Breakdown_P90</div>
<div class="a" style="left:1030.0px;top:593.6px;font-size:7.1px;line-height:8.52px;color:#3a3d4e;font-weight:normal;">95275.42</div>
<div class="a" style="left:1062.0px;top:595.1px;font-size:4.6px;line-height:5.52px;color:#8a8d9c;font-weight:normal;">kPa</div>
</div></body></html>
